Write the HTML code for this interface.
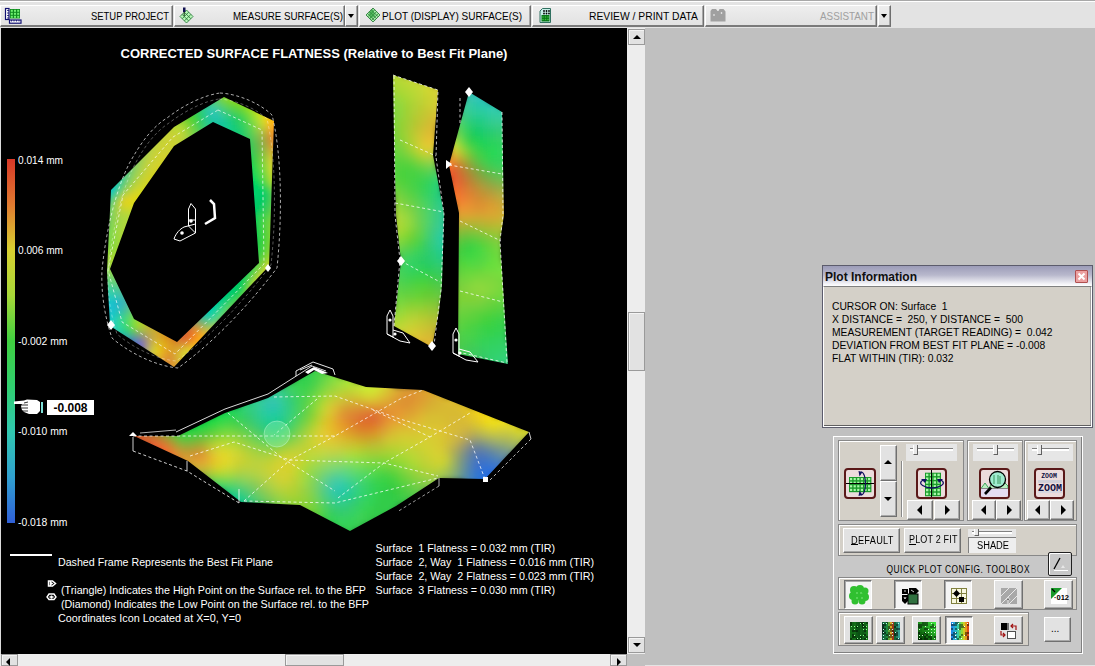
<!DOCTYPE html>
<html><head><meta charset="utf-8">
<style>
*{box-sizing:border-box;margin:0;padding:0}
html,body{width:1095px;height:666px;overflow:hidden}
body{position:relative;background:#c0c0c0;font-family:"Liberation Sans",sans-serif;font-size:11px;color:#000}
.abs{position:absolute}
#tb{left:0;top:0;width:1095px;height:28px;background:#e3e3e3;border-top:1px solid #a8a8a8;box-shadow:inset 0 1px 0 #fff}
.btn{position:absolute;top:4px;height:22px;background:linear-gradient(#eeeeee,#e2e2e2);border-top:1px solid #fff;border-left:1px solid #fff;border-right:1px solid #6e6e6e;border-bottom:2px solid #7a7a7a;box-shadow:inset -1px 0 0 #a8a8a8}
.btxt{position:absolute;top:9px;font-size:11px;line-height:11px;white-space:nowrap;text-align:justify}
#plot{left:1px;top:28px;width:626px;height:626px;background:#000;overflow:hidden}
#vs{left:627px;top:28px;width:18px;height:626px;background:#ededed}
#hs{left:0;top:654px;width:627px;height:12px;background:#ededed}
.sbtn{position:absolute;background:#e2e2e2;border:1px solid #9a9a9a;box-shadow:inset 1px 1px 0 #f4f4f4}
.grp{position:absolute;background:#d4d0c8;border:1px solid #888;box-shadow:inset 1px 1px 0 #fff}
.rb{position:absolute;background:#e2e2e2;border-top:1px solid #fff;border-left:1px solid #fff;border-right:1px solid #707070;border-bottom:1px solid #707070;box-shadow:inset -1px -1px 0 #a8a8a8}
.pb{position:absolute;background:#f4f4f4;border-top:1px solid #707070;border-left:1px solid #707070;border-right:1px solid #fff;border-bottom:1px solid #fff;box-shadow:inset 1px 1px 0 #a8a8a8}
.ico{position:absolute;background:#ecdcdc;border:2px solid #5a1818;border-radius:4px}
.sl{position:absolute;background:#e6e6e6}
.slt{position:absolute;height:3px;background:#fff;border-top:1px solid #808080}
.thm{position:absolute;width:5px;height:10px;background:#e8e8e8;border-left:1px solid #fff;border-right:1px solid #606060;border-bottom:1px solid #606060}
.tri{position:absolute;width:0;height:0}
.wt{position:absolute;color:#fff;white-space:nowrap;font-size:11px}
</style></head><body>

<div id="tb" class="abs">
  <div class="btn" style="left:0;width:173px"></div>
  <div class="btn" style="left:174px;width:171px"></div>
  <div class="btn" style="left:345px;width:13px"></div>
  <div class="tri" style="left:348px;top:13px;border-left:3.5px solid transparent;border-right:3.5px solid transparent;border-top:4px solid #000"></div>
  <div class="btn" style="left:359px;width:172px"></div>
  <div class="btn" style="left:532px;width:172px"></div>
  <div class="btn" style="left:705px;width:172px"></div>
  <div class="btn" style="left:878px;width:13px"></div>
  <div class="tri" style="left:881px;top:13px;border-left:3.5px solid transparent;border-right:3.5px solid transparent;border-top:4px solid #000"></div>
  <svg class="abs" style="left:0;top:0" width="900" height="28"><g font-family="Liberation Sans" font-size="11" lengthAdjust="spacingAndGlyphs">
   <text x="91" y="19" textLength="78" lengthAdjust="spacingAndGlyphs">SETUP PROJECT</text>
   <text x="233" y="19" textLength="110" lengthAdjust="spacingAndGlyphs">MEASURE SURFACE(S)</text>
   <text x="382" y="19" textLength="140" lengthAdjust="spacingAndGlyphs">PLOT (DISPLAY) SURFACE(S)</text>
   <text x="589" y="19" textLength="109" lengthAdjust="spacingAndGlyphs">REVIEW / PRINT DATA</text>
   <text x="820" y="19" textLength="54" lengthAdjust="spacingAndGlyphs" fill="#a0a0a0">ASSISTANT</text>
  </g></svg>
  <svg class="abs" style="left:4px;top:6px" width="20" height="18">
    <rect x="1.5" y="1.5" width="3.5" height="11" fill="#fff" stroke="#101070" stroke-width="1.2"/>
    <path d="M3,3.5h2M3,6h2M3,8.5h2M3,11h2" stroke="#101070" stroke-width="0.8"/>
    <rect x="6" y="2" width="10" height="9.5" fill="#108a20"/>
    <g fill="#70f070"><rect x="6.8" y="2.8" width="2" height="2"/><rect x="10" y="2.8" width="2" height="2"/><rect x="13.2" y="2.8" width="2" height="2"/><rect x="6.8" y="5.8" width="2" height="2"/><rect x="10" y="5.8" width="2" height="2"/><rect x="13.2" y="5.8" width="2" height="2"/><rect x="6.8" y="8.8" width="2" height="2"/><rect x="10" y="8.8" width="2" height="2"/><rect x="13.2" y="8.8" width="2" height="2"/></g>
    <rect x="5.5" y="13" width="11.5" height="3.2" fill="#fff" stroke="#101070" stroke-width="1.2"/>
    <path d="M7.5,13v1.5M10,13v1.5M12.5,13v1.5M15,13v1.5" stroke="#101070" stroke-width="0.8"/>
  </svg>
  <svg class="abs" style="left:178px;top:6px" width="18" height="18">
    <path d="M8.5,3 L15,9.5 L8.5,16 L2,9.5 Z" fill="#b8f8b8" stroke="#207030" stroke-width="0.8"/>
    <path d="M6.3,5.2 L12.8,11.7 M4.1,7.4 L10.6,13.9 M10.7,5.2 L4.2,11.7 M12.9,7.4 L6.4,13.9" stroke="#207030" stroke-width="0.8"/>
    <rect x="5" y="0.5" width="2.5" height="4.5" fill="#101050"/><path d="M6.2,5 L6.2,9" stroke="#103010" stroke-width="1"/>
  </svg>
  <svg class="abs" style="left:364px;top:6px" width="18" height="18">
    <path d="M9,1 L16,8 L9,15 L2,8 Z" fill="#a8f0a8" stroke="#207030" stroke-width="0.8"/>
    <path d="M7.2,2.8 L14.2,9.8 M5.4,4.6 L12.4,11.6 M3.6,6.4 L10.6,13.4 M10.8,2.8 L3.8,9.8 M12.6,4.6 L5.6,11.6 M14.4,6.4 L7.4,13.4" stroke="#207030" stroke-width="0.8"/>
    <path d="M5,5 L9,2 L11,9 L6,12 Z" fill="#30a040" opacity="0.7"/>
  </svg>
  <svg class="abs" style="left:539px;top:7px" width="14" height="16">
    <path d="M3.5,0.5 L11.5,0.5 L11.5,14.5 L1,14.5 L1,3 Z" fill="#c8f0e8" stroke="#307060" stroke-width="1"/>
    <g fill="#000"><circle cx="5" cy="3" r="0.9"/><circle cx="7.5" cy="3" r="0.9"/><circle cx="10" cy="3" r="0.9"/><circle cx="5" cy="5.5" r="0.9"/><circle cx="7.5" cy="5.5" r="0.9"/><circle cx="10" cy="5.5" r="0.9"/></g>
    <rect x="2.5" y="7" width="8" height="6.5" fill="#087818"/>
    <g fill="#40c040"><circle cx="4" cy="9" r="0.8"/><circle cx="6.5" cy="9" r="0.8"/><circle cx="9" cy="9" r="0.8"/><circle cx="4" cy="11.5" r="0.8"/><circle cx="6.5" cy="11.5" r="0.8"/><circle cx="9" cy="11.5" r="0.8"/></g>
  </svg>
  <svg class="abs" style="left:710px;top:7px" width="17" height="15">
    <path d="M0.5,3 L2,1 L6,1 L7.5,3 L8.5,3 L9.5,1 L13.5,1 L15.5,3.5 L15.5,13.5 L0.5,13.5 Z" fill="#a0a0a0"/>
    <circle cx="4" cy="7" r="0.8" fill="#fff"/><circle cx="11.5" cy="5" r="0.8" fill="#fff"/>
  </svg>
</div>

<div id="plot" class="abs">
<svg width="626" height="626" viewBox="1 28 626 626" style="position:absolute;left:0;top:0" xml:space="preserve">
<defs>
<filter id="sb" x="-5%" y="-5%" width="110%" height="110%"><feGaussianBlur stdDeviation="3"/></filter><filter id="sb2" x="-5%" y="-5%" width="110%" height="110%"><feGaussianBlur stdDeviation="2"/></filter>
<linearGradient id="cbar" x1="0" y1="0" x2="0" y2="1"><stop offset="0.000" stop-color="#d83828"/><stop offset="0.125" stop-color="#e07a30"/><stop offset="0.250" stop-color="#d8d030"/><stop offset="0.375" stop-color="#a8d838"/><stop offset="0.500" stop-color="#40d040"/><stop offset="0.625" stop-color="#30d070"/><stop offset="0.750" stop-color="#30c8b0"/><stop offset="0.875" stop-color="#30a0d0"/><stop offset="1.000" stop-color="#3060d8"/></linearGradient><clipPath id="cs0"><path clip-rule="evenodd" d="M224,97 L274,121 L269,266 L174,367 L110,326 L107,271 L111,190 L174,127 Z M213,122 L174,146 L134,203 L110,269 L134,319 L177,342 L259,263 L250,139 Z"/></clipPath><clipPath id="cs1"><path clip-rule="evenodd" d="M393,75 L438,90 L433,155 L444,214 L442,285 L439,311 L432,347 L394,326 L401,261 L396,215 L394,135 Z"/></clipPath><clipPath id="cs2"><path clip-rule="evenodd" d="M469,92 L502,112 L504,215 L500,241 L508,364 L458,354 L459,213 L449,165 Z"/></clipPath><clipPath id="cs3"><path clip-rule="evenodd" d="M134,436 L178,436 L225,413 L268,398 L315,371 L366,387 L423,390 L529,432 L485,479 L439,478 L396,506 L350,531 L300,505 L241,502 L188,461 Z"/></clipPath></defs>
<text x="314" y="58" fill="#fff" font-family="Liberation Sans" font-weight="bold" font-size="13" text-anchor="middle">CORRECTED SURFACE FLATNESS (Relative to Best Fit Plane)</text>
<rect x="7" y="159" width="8" height="364" fill="url(#cbar)"/>
<g clip-path="url(#cs0)"><g filter="url(#sb2)"><path fill="#00ae90" d="M187 289h4v4h-4zM187 293h4v4h-4z"/><path fill="#00ae96" d="M191 297h4v4h-4z"/><path fill="#00b47e" d="M179 277h4v4h-4z"/><path fill="#00b484" d="M183 277h4v4h-4zM183 281h4v4h-4zM183 285h4v4h-4z"/><path fill="#00b48a" d="M187 281h4v4h-4z"/><path fill="#00b490" d="M187 285h4v4h-4z"/><path fill="#00b496" d="M191 285h4v4h-4zM191 289h4v4h-4zM191 293h4v4h-4z"/><path fill="#00b4a2" d="M195 293h4v4h-4zM195 297h4v4h-4zM195 301h4v4h-4z"/><path fill="#00ba72" d="M179 265h4v4h-4z"/><path fill="#00ba78" d="M183 265h4v4h-4zM179 269h4v4h-4zM179 273h4v4h-4z"/><path fill="#00ba7e" d="M187 265h4v4h-4zM183 269h4v4h-4zM183 273h4v4h-4z"/><path fill="#00ba84" d="M187 269h8v4h-8zM187 273h4v4h-4z"/><path fill="#00ba8a" d="M191 273h4v4h-4zM187 277h4v4h-4z"/><path fill="#00ba90" d="M195 273h4v4h-4zM191 277h8v4h-8zM191 281h4v4h-4z"/><path fill="#00ba96" d="M199 277h4v4h-4zM195 281h4v4h-4z"/><path fill="#00ba9c" d="M199 281h4v4h-4zM195 285h8v4h-8zM195 289h4v4h-4z"/><path fill="#00baa2" d="M199 289h4v4h-4z"/><path fill="#00baa8" d="M199 293h4v4h-4zM199 297h4v4h-4zM199 301h4v4h-4zM199 305h4v4h-4z"/><path fill="#00c06c" d="M183 253h4v4h-4zM179 257h4v4h-4z"/><path fill="#00c072" d="M187 253h8v4h-8zM183 257h4v4h-4zM179 261h8v4h-8z"/><path fill="#00c078" d="M195 253h8v4h-8zM187 257h8v4h-8zM187 261h4v4h-4z"/><path fill="#00c07e" d="M203 253h4v4h-4zM195 257h8v4h-8zM191 261h4v4h-4z"/><path fill="#00c084" d="M203 257h12v4h-12zM195 261h24v4h-24zM191 265h8v4h-8zM215 265h4v4h-4zM219 269h4v4h-4z"/><path fill="#00c08a" d="M199 265h16v4h-16zM195 269h8v4h-8zM211 269h8v4h-8zM215 273h8v4h-8z"/><path fill="#00c090" d="M203 269h8v4h-8zM199 273h16v4h-16zM215 277h4v4h-4zM215 281h4v4h-4z"/><path fill="#00c096" d="M203 277h12v4h-12zM211 281h4v4h-4z"/><path fill="#00c09c" d="M203 281h8v4h-8zM207 285h8v4h-8z"/><path fill="#00c0a2" d="M203 285h4v4h-4zM203 289h8v4h-8zM207 293h4v4h-4z"/><path fill="#00c0a8" d="M203 293h4v4h-4zM203 297h4v4h-4z"/><path fill="#00c0ae" d="M203 301h4v4h-4zM203 305h4v4h-4z"/><path fill="#00c660" d="M187 237h4v4h-4zM183 241h4v4h-4z"/><path fill="#00c666" d="M191 237h8v4h-8zM187 241h8v4h-8zM183 245h8v4h-8zM183 249h4v4h-4zM235 281h4v4h-4z"/><path fill="#00c66c" d="M199 237h12v4h-12zM195 241h8v4h-8zM191 245h4v4h-4zM231 245h4v4h-4zM187 249h4v4h-4zM231 249h8v4h-8zM235 253h4v4h-4zM235 257h4v4h-4zM235 261h4v4h-4zM235 265h4v4h-4zM235 269h4v4h-4zM235 273h4v4h-4zM235 277h4v4h-4zM231 285h4v4h-4z"/><path fill="#00c672" d="M211 237h16v4h-16zM203 241h28v4h-28zM195 245h12v4h-12zM223 245h8v4h-8zM191 249h8v4h-8zM227 249h4v4h-4zM227 253h8v4h-8zM231 257h4v4h-4zM231 261h4v4h-4zM231 265h4v4h-4zM231 269h4v4h-4zM231 273h4v4h-4zM231 277h4v4h-4zM231 281h4v4h-4zM227 289h4v4h-4z"/><path fill="#00c678" d="M207 245h16v4h-16zM199 249h28v4h-28zM223 253h4v4h-4zM223 257h8v4h-8zM227 261h4v4h-4zM227 265h4v4h-4zM227 269h4v4h-4zM227 273h4v4h-4zM227 277h4v4h-4zM227 281h4v4h-4zM227 285h4v4h-4z"/><path fill="#00c67e" d="M207 253h16v4h-16zM215 257h8v4h-8zM219 261h8v4h-8zM223 265h4v4h-4zM223 269h4v4h-4zM223 289h4v4h-4z"/><path fill="#00c684" d="M219 265h4v4h-4zM223 273h4v4h-4zM223 277h4v4h-4zM223 281h4v4h-4zM223 285h4v4h-4z"/><path fill="#00c68a" d="M219 277h4v4h-4zM219 281h4v4h-4zM219 285h4v4h-4zM219 289h4v4h-4zM219 293h4v4h-4z"/><path fill="#00c696" d="M215 285h4v4h-4zM215 289h4v4h-4zM215 293h4v4h-4z"/><path fill="#00c69c" d="M211 289h4v4h-4z"/><path fill="#00c6a2" d="M211 293h4v4h-4zM211 297h4v4h-4z"/><path fill="#00c6a8" d="M207 297h4v4h-4z"/><path fill="#00c6ae" d="M207 301h4v4h-4zM207 305h4v4h-4z"/><path fill="#00c6c6" d="M111 181h4v4h-4zM107 189h4v4h-4z"/><path fill="#00c6d2" d="M107 185h4v4h-4z"/><path fill="#00cc54" d="M199 213h4v4h-4zM195 217h4v4h-4zM251 233h4v4h-4zM251 237h4v4h-4zM251 241h4v4h-4zM251 245h4v4h-4z"/><path fill="#00cc5a" d="M203 213h4v4h-4zM199 217h4v4h-4zM251 217h4v4h-4zM195 221h8v4h-8zM191 225h8v4h-8zM247 225h4v4h-4zM191 229h4v4h-4zM247 229h4v4h-4zM187 233h4v4h-4zM247 233h4v4h-4zM247 237h4v4h-4zM247 241h4v4h-4zM247 245h4v4h-4zM247 249h4v4h-4zM247 253h4v4h-4zM247 257h4v4h-4zM239 281h4v4h-4z"/><path fill="#00cc60" d="M207 213h8v4h-8zM251 213h4v4h-4zM203 217h8v4h-8zM247 217h4v4h-4zM203 221h4v4h-4zM243 221h8v4h-8zM199 225h8v4h-8zM243 225h4v4h-4zM195 229h8v4h-8zM243 229h4v4h-4zM191 233h8v4h-8zM243 233h4v4h-4zM243 237h4v4h-4zM243 241h4v4h-4zM243 245h4v4h-4zM243 249h4v4h-4zM243 253h4v4h-4zM243 257h4v4h-4zM243 261h4v4h-4zM243 265h4v4h-4zM239 273h4v4h-4zM239 277h4v4h-4zM235 289h4v4h-4z"/><path fill="#00cc66" d="M259 197h4v4h-4zM255 201h8v4h-8zM251 205h8v4h-8zM215 209h8v4h-8zM247 209h8v4h-8zM215 213h8v4h-8zM239 213h12v4h-12zM211 217h12v4h-12zM235 217h12v4h-12zM207 221h12v4h-12zM235 221h8v4h-8zM207 225h8v4h-8zM235 225h8v4h-8zM203 229h8v4h-8zM235 229h8v4h-8zM199 233h4v4h-4zM235 233h8v4h-8zM235 237h8v4h-8zM235 241h8v4h-8zM239 245h4v4h-4zM239 249h4v4h-4zM239 253h4v4h-4zM239 257h4v4h-4zM239 261h4v4h-4zM239 265h4v4h-4zM239 269h4v4h-4zM235 285h4v4h-4z"/><path fill="#00cc6c" d="M235 149h4v4h-4zM259 193h4v4h-4zM255 197h4v4h-4zM251 201h4v4h-4zM247 205h4v4h-4zM223 209h24v4h-24zM223 213h16v4h-16zM223 217h12v4h-12zM219 221h16v4h-16zM215 225h20v4h-20zM211 229h24v4h-24zM203 233h32v4h-32zM227 237h8v4h-8zM231 241h4v4h-4zM235 245h4v4h-4zM231 289h4v4h-4z"/><path fill="#00cc72" d="M227 293h4v4h-4z"/><path fill="#00cc78" d="M223 145h12v4h-12z"/><path fill="#00cc7e" d="M227 141h4v4h-4zM223 293h4v4h-4z"/><path fill="#00cc8a" d="M219 297h4v4h-4z"/><path fill="#00cc96" d="M215 297h4v4h-4zM215 301h4v4h-4z"/><path fill="#00cca2" d="M211 301h4v4h-4z"/><path fill="#00cca8" d="M211 305h4v4h-4z"/><path fill="#00d254" d="M203 197h4v4h-4zM203 201h4v4h-4zM199 209h4v4h-4z"/><path fill="#00d25a" d="M211 177h4v4h-4zM211 181h4v4h-4zM211 185h4v4h-4zM207 189h8v4h-8zM207 193h4v4h-4zM207 197h4v4h-4zM207 201h4v4h-4zM203 205h8v4h-8zM203 209h4v4h-4z"/><path fill="#00d260" d="M239 161h8v4h-8zM239 165h8v4h-8zM215 169h4v4h-4zM215 173h4v4h-4zM215 177h4v4h-4zM215 181h4v4h-4zM215 185h4v4h-4zM215 189h4v4h-4zM211 193h8v4h-8zM211 197h8v4h-8zM211 201h8v4h-8zM211 205h4v4h-4zM207 209h8v4h-8z"/><path fill="#00d266" d="M235 157h8v4h-8zM235 161h4v4h-4zM219 165h4v4h-4zM231 165h8v4h-8zM219 169h24v4h-24zM219 173h20v4h-20zM219 177h12v4h-12zM235 177h8v4h-8zM219 181h8v4h-8zM243 181h8v4h-8zM219 185h8v4h-8zM251 185h8v4h-8zM219 189h8v4h-8zM259 189h4v4h-4zM219 193h8v4h-8zM219 197h8v4h-8zM219 201h8v4h-8zM215 205h12v4h-12z"/><path fill="#00d26c" d="M231 153h8v4h-8zM219 157h16v4h-16zM219 161h16v4h-16zM223 165h8v4h-8zM231 177h4v4h-4zM227 181h16v4h-16zM227 185h24v4h-24zM227 189h32v4h-32zM227 193h16v4h-16zM247 193h12v4h-12zM227 197h12v4h-12zM247 197h8v4h-8zM227 201h24v4h-24zM227 205h20v4h-20z"/><path fill="#00d272" d="M227 149h8v4h-8zM223 153h8v4h-8zM243 193h4v4h-4zM239 197h8v4h-8z"/><path fill="#00d278" d="M223 149h4v4h-4z"/><path fill="#00d860" d="M243 169h4v4h-4zM243 173h8v4h-8zM247 177h4v4h-4zM251 181h4v4h-4z"/><path fill="#00d866" d="M239 173h4v4h-4zM243 177h4v4h-4z"/><path fill="#06ae84" d="M183 289h4v4h-4z"/><path fill="#06b47e" d="M179 281h4v4h-4z"/><path fill="#06c066" d="M179 253h4v4h-4z"/><path fill="#06c0ae" d="M203 309h4v4h-4z"/><path fill="#06c65a" d="M183 237h4v4h-4z"/><path fill="#06c660" d="M179 249h4v4h-4z"/><path fill="#06c6c0" d="M111 185h4v4h-4z"/><path fill="#06cc54" d="M191 221h4v4h-4zM251 225h4v4h-4zM187 229h4v4h-4zM251 229h4v4h-4zM251 249h4v4h-4z"/><path fill="#06cc5a" d="M251 221h4v4h-4zM243 269h4v4h-4z"/><path fill="#06cc60" d="M255 209h4v4h-4z"/><path fill="#06cc72" d="M235 145h4v4h-4z"/><path fill="#06cc78" d="M231 141h4v4h-4zM223 297h4v4h-4z"/><path fill="#06cc7e" d="M231 137h4v4h-4zM223 141h4v4h-4z"/><path fill="#06cc84" d="M227 133h4v4h-4zM223 137h8v4h-8z"/><path fill="#06ccae" d="M207 309h4v4h-4z"/><path fill="#06d254" d="M203 193h4v4h-4zM199 205h4v4h-4zM195 213h4v4h-4z"/><path fill="#06d25a" d="M207 185h4v4h-4z"/><path fill="#06d260" d="M243 157h4v4h-4zM211 173h4v4h-4z"/><path fill="#06d266" d="M239 153h4v4h-4zM215 161h4v4h-4zM215 165h4v4h-4z"/><path fill="#06d272" d="M219 149h4v4h-4zM219 153h4v4h-4z"/><path fill="#06d85a" d="M247 169h4v4h-4z"/><path fill="#06d860" d="M251 177h4v4h-4z"/><path fill="#0cba6c" d="M175 265h4v4h-4z"/><path fill="#0cba72" d="M175 269h4v4h-4z"/><path fill="#0cc660" d="M179 245h4v4h-4z"/><path fill="#0ccc4e" d="M191 217h4v4h-4zM251 253h4v4h-4z"/><path fill="#0ccc54" d="M187 225h4v4h-4zM183 233h4v4h-4z"/><path fill="#0ccc5a" d="M247 261h4v4h-4zM239 285h4v4h-4z"/><path fill="#0ccc60" d="M259 205h4v4h-4z"/><path fill="#0ccc66" d="M239 149h4v4h-4zM231 293h4v4h-4z"/><path fill="#0ccc6c" d="M239 145h4v4h-4z"/><path fill="#0ccc72" d="M235 141h4v4h-4z"/><path fill="#0ccc78" d="M235 137h4v4h-4zM219 145h4v4h-4z"/><path fill="#0ccc7e" d="M231 133h4v4h-4zM219 141h4v4h-4z"/><path fill="#0ccc84" d="M219 137h4v4h-4zM219 301h4v4h-4z"/><path fill="#0ccc8a" d="M227 129h4v4h-4zM219 133h8v4h-8z"/><path fill="#0ccc90" d="M223 129h4v4h-4z"/><path fill="#0cd24e" d="M199 201h4v4h-4zM195 209h4v4h-4z"/><path fill="#0cd25a" d="M207 181h4v4h-4z"/><path fill="#0cd260" d="M211 169h4v4h-4z"/><path fill="#0cd26c" d="M215 157h4v4h-4z"/><path fill="#0cd296" d="M215 305h4v4h-4z"/><path fill="#0cd2a2" d="M211 309h4v4h-4z"/><path fill="#0cd85a" d="M247 165h4v4h-4z"/><path fill="#0cd860" d="M255 181h4v4h-4z"/><path fill="#12a884" d="M183 293h4v4h-4z"/><path fill="#12a890" d="M187 297h4v4h-4z"/><path fill="#12ae7e" d="M179 285h4v4h-4z"/><path fill="#12ae96" d="M191 301h4v4h-4z"/><path fill="#12ae9c" d="M195 305h4v4h-4z"/><path fill="#12b472" d="M175 277h4v4h-4z"/><path fill="#12ba72" d="M175 273h4v4h-4z"/><path fill="#12c066" d="M175 257h4v4h-4z"/><path fill="#12c06c" d="M175 261h4v4h-4z"/><path fill="#12c65a" d="M179 241h4v4h-4z"/><path fill="#12c69c" d="M219 125h4v4h-4z"/><path fill="#12c6b4" d="M115 177h4v4h-4z"/><path fill="#12c6d2" d="M107 309h4v4h-4z"/><path fill="#12cc4e" d="M187 221h4v4h-4z"/><path fill="#12cc5a" d="M243 273h4v4h-4z"/><path fill="#12cc60" d="M243 153h4v4h-4zM263 197h4v4h-4z"/><path fill="#12cc66" d="M263 193h4v4h-4z"/><path fill="#12cc6c" d="M239 141h4v4h-4z"/><path fill="#12cc78" d="M235 133h4v4h-4zM215 145h4v4h-4z"/><path fill="#12cc7e" d="M231 125h4v4h-4zM231 129h4v4h-4z"/><path fill="#12cc8a" d="M227 125h4v4h-4z"/><path fill="#12cc96" d="M223 125h4v4h-4zM219 129h4v4h-4z"/><path fill="#12ccb4" d="M107 193h4v4h-4z"/><path fill="#12ccd2" d="M103 301h4v4h-4z"/><path fill="#12ccd8" d="M103 305h4v4h-4z"/><path fill="#12d24e" d="M199 197h4v4h-4zM195 205h4v4h-4zM191 213h4v4h-4z"/><path fill="#12d254" d="M247 161h4v4h-4zM203 189h4v4h-4z"/><path fill="#12d25a" d="M207 177h4v4h-4zM255 213h4v4h-4z"/><path fill="#12d260" d="M211 165h4v4h-4zM259 185h4v4h-4z"/><path fill="#12d26c" d="M215 153h4v4h-4z"/><path fill="#12d272" d="M215 149h4v4h-4z"/><path fill="#12d85a" d="M251 173h4v4h-4z"/><path fill="#18ae7e" d="M179 289h4v4h-4z"/><path fill="#18b478" d="M175 281h4v4h-4z"/><path fill="#18baa2" d="M199 309h4v4h-4z"/><path fill="#18c060" d="M175 253h4v4h-4z"/><path fill="#18c660" d="M175 249h4v4h-4z"/><path fill="#18c696" d="M223 121h4v4h-4z"/><path fill="#18c69c" d="M219 121h4v4h-4zM215 125h4v4h-4z"/><path fill="#18c6b4" d="M111 189h4v4h-4z"/><path fill="#18c6cc" d="M107 301h4v4h-4z"/><path fill="#18c6d2" d="M107 305h4v4h-4z"/><path fill="#18cc48" d="M255 241h4v4h-4zM255 245h4v4h-4z"/><path fill="#18cc4e" d="M255 233h4v4h-4zM255 237h4v4h-4z"/><path fill="#18cc54" d="M183 229h4v4h-4zM179 237h4v4h-4z"/><path fill="#18cc60" d="M243 149h4v4h-4z"/><path fill="#18cc6c" d="M239 137h4v4h-4zM227 297h4v4h-4z"/><path fill="#18cc78" d="M235 129h4v4h-4z"/><path fill="#18cc7e" d="M215 141h4v4h-4z"/><path fill="#18cc84" d="M215 137h4v4h-4z"/><path fill="#18cc8a" d="M227 121h4v4h-4zM215 133h4v4h-4z"/><path fill="#18cc90" d="M215 129h4v4h-4z"/><path fill="#18cca8" d="M207 313h4v4h-4z"/><path fill="#18cccc" d="M107 317h4v4h-4z"/><path fill="#18ccd2" d="M107 313h4v4h-4z"/><path fill="#18d24e" d="M199 193h4v4h-4z"/><path fill="#18d254" d="M247 157h4v4h-4zM203 185h4v4h-4zM255 217h4v4h-4z"/><path fill="#18d25a" d="M207 173h4v4h-4z"/><path fill="#18d260" d="M211 161h4v4h-4zM263 189h4v4h-4z"/><path fill="#1eba66" d="M171 265h4v4h-4z"/><path fill="#1eba6c" d="M171 269h4v4h-4z"/><path fill="#1ec0a8" d="M203 313h4v4h-4z"/><path fill="#1ec0cc" d="M111 301h4v4h-4zM111 305h4v4h-4z"/><path fill="#1ec65a" d="M175 245h4v4h-4z"/><path fill="#1ec69c" d="M211 121h4v4h-4z"/><path fill="#1ec6a2" d="M215 121h4v4h-4z"/><path fill="#1ec6c6" d="M111 313h4v4h-4z"/><path fill="#1ec6cc" d="M111 309h4v4h-4z"/><path fill="#1ecc48" d="M255 249h4v4h-4z"/><path fill="#1ecc4e" d="M187 217h4v4h-4zM183 225h4v4h-4zM251 257h4v4h-4z"/><path fill="#1ecc54" d="M179 233h4v4h-4zM247 265h4v4h-4zM239 289h4v4h-4z"/><path fill="#1ecc5a" d="M259 209h4v4h-4zM235 293h4v4h-4z"/><path fill="#1ecc60" d="M263 201h4v4h-4z"/><path fill="#1ecc66" d="M243 145h4v4h-4z"/><path fill="#1ecc6c" d="M239 133h4v4h-4z"/><path fill="#1ecc72" d="M235 125h4v4h-4z"/><path fill="#1ecc78" d="M231 121h4v4h-4z"/><path fill="#1ecc84" d="M211 133h4v4h-4z"/><path fill="#1ecc8a" d="M211 129h4v4h-4z"/><path fill="#1ecc96" d="M211 125h4v4h-4z"/><path fill="#1eccae" d="M115 181h4v4h-4z"/><path fill="#1eccc0" d="M107 297h4v4h-4zM111 317h4v4h-4z"/><path fill="#1eccc6" d="M103 297h4v4h-4z"/><path fill="#1ecccc" d="M107 321h4v4h-4zM107 325h4v4h-4z"/><path fill="#1ed248" d="M195 201h4v4h-4zM191 209h4v4h-4z"/><path fill="#1ed24e" d="M199 189h4v4h-4zM255 225h4v4h-4zM255 229h4v4h-4z"/><path fill="#1ed254" d="M203 181h4v4h-4zM255 221h4v4h-4z"/><path fill="#1ed25a" d="M207 169h4v4h-4z"/><path fill="#1ed266" d="M211 157h4v4h-4z"/><path fill="#1ed26c" d="M211 149h4v4h-4zM211 153h4v4h-4z"/><path fill="#1ed854" d="M251 169h4v4h-4zM255 177h4v4h-4z"/><path fill="#24a87e" d="M179 293h4v4h-4z"/><path fill="#24a884" d="M183 297h4v4h-4z"/><path fill="#24a88a" d="M187 301h4v4h-4z"/><path fill="#24a890" d="M191 305h4v4h-4z"/><path fill="#24ae78" d="M175 285h4v4h-4z"/><path fill="#24b46c" d="M171 277h4v4h-4z"/><path fill="#24ba6c" d="M171 273h4v4h-4z"/><path fill="#24bac6" d="M115 301h4v4h-4zM115 305h4v4h-4z"/><path fill="#24c060" d="M171 257h4v4h-4z"/><path fill="#24c066" d="M171 261h4v4h-4z"/><path fill="#24c0c0" d="M115 309h4v4h-4z"/><path fill="#24c654" d="M175 241h4v4h-4z"/><path fill="#24c65a" d="M171 253h4v4h-4z"/><path fill="#24c69c" d="M207 117h4v4h-4z"/><path fill="#24c6a2" d="M219 117h4v4h-4z"/><path fill="#24c6a8" d="M211 117h8v4h-8z"/><path fill="#24c6b4" d="M115 313h4v4h-4z"/><path fill="#24c6c0" d="M111 297h4v4h-4z"/><path fill="#24cc48" d="M183 221h4v4h-4z"/><path fill="#24cc54" d="M243 277h4v4h-4z"/><path fill="#24cc5a" d="M247 153h4v4h-4z"/><path fill="#24cc66" d="M243 141h4v4h-4z"/><path fill="#24cc6c" d="M235 121h4v4h-4zM239 129h4v4h-4z"/><path fill="#24cc72" d="M231 117h4v4h-4z"/><path fill="#24cc78" d="M211 141h4v4h-4zM223 301h4v4h-4z"/><path fill="#24cc7e" d="M211 137h4v4h-4z"/><path fill="#24cc84" d="M227 117h4v4h-4z"/><path fill="#24cc90" d="M223 117h4v4h-4zM207 121h4v4h-4z"/><path fill="#24ccba" d="M111 325h4v4h-4z"/><path fill="#24d248" d="M195 197h4v4h-4zM191 205h4v4h-4zM187 213h4v4h-4z"/><path fill="#24d254" d="M203 177h4v4h-4z"/><path fill="#24d25a" d="M207 165h4v4h-4z"/><path fill="#24d272" d="M211 145h4v4h-4z"/><path fill="#24d284" d="M219 305h4v4h-4z"/><path fill="#24d296" d="M215 309h4v4h-4z"/><path fill="#24d29c" d="M211 313h4v4h-4z"/><path fill="#24d2ba" d="M103 293h4v4h-4zM111 321h4v4h-4z"/><path fill="#24d854" d="M251 165h4v4h-4z"/><path fill="#2aae72" d="M175 289h4v4h-4z"/><path fill="#2aae96" d="M195 309h4v4h-4z"/><path fill="#2ab46c" d="M171 281h4v4h-4z"/><path fill="#2abaa2" d="M123 333h4v4h-4z"/><path fill="#2ac0ae" d="M119 333h4v4h-4z"/><path fill="#2ac0ba" d="M115 297h4v4h-4z"/><path fill="#2ac65a" d="M171 249h4v4h-4z"/><path fill="#2ac6a2" d="M207 113h4v4h-4z"/><path fill="#2ac6a8" d="M207 109h4v4h-4z"/><path fill="#2ac6ae" d="M211 113h8v4h-8z"/><path fill="#2acc48" d="M255 253h4v4h-4z"/><path fill="#2acc4e" d="M179 229h4v4h-4zM251 261h4v4h-4z"/><path fill="#2acc54" d="M175 237h4v4h-4zM247 269h4v4h-4z"/><path fill="#2acc5a" d="M247 149h4v4h-4zM263 205h4v4h-4z"/><path fill="#2acc66" d="M235 117h4v4h-4zM243 137h4v4h-4z"/><path fill="#2acc72" d="M199 113h4v4h-4z"/><path fill="#2acc7e" d="M207 129h4v4h-4z"/><path fill="#2acc84" d="M203 117h4v4h-4z"/><path fill="#2acc8a" d="M203 113h4v4h-4zM207 125h4v4h-4zM123 329h4v4h-4z"/><path fill="#2acc90" d="M203 109h4v4h-4z"/><path fill="#2acc9c" d="M119 329h4v4h-4z"/><path fill="#2acca2" d="M115 185h4v4h-4z"/><path fill="#2accb4" d="M107 293h4v4h-4z"/><path fill="#2accc0" d="M111 329h4v4h-4z"/><path fill="#2ad248" d="M195 193h4v4h-4z"/><path fill="#2ad24e" d="M251 161h4v4h-4zM199 185h4v4h-4z"/><path fill="#2ad254" d="M203 173h4v4h-4zM259 213h4v4h-4z"/><path fill="#2ad260" d="M207 157h4v4h-4zM207 161h4v4h-4zM231 297h4v4h-4z"/><path fill="#2ad266" d="M239 125h4v4h-4z"/><path fill="#2ad2a8" d="M115 321h4v4h-4zM115 325h4v4h-4z"/><path fill="#2ad2ae" d="M115 317h4v4h-4z"/><path fill="#2ad854" d="M259 181h4v4h-4z"/><path fill="#30a8ba" d="M123 337h4v4h-4z"/><path fill="#30ae6c" d="M171 285h4v4h-4z"/><path fill="#30b49c" d="M199 313h4v4h-4z"/><path fill="#30b4c0" d="M119 301h4v4h-4z"/><path fill="#30ba60" d="M167 265h4v4h-4z"/><path fill="#30ba66" d="M167 269h4v4h-4zM167 273h4v4h-4z"/><path fill="#30baba" d="M119 305h4v4h-4z"/><path fill="#30c060" d="M167 261h4v4h-4z"/><path fill="#30c0ae" d="M119 309h4v4h-4z"/><path fill="#30c0ba" d="M115 333h4v4h-4z"/><path fill="#30c654" d="M171 245h4v4h-4z"/><path fill="#30c65a" d="M247 145h4v4h-4z"/><path fill="#30c6ae" d="M211 109h4v4h-4z"/><path fill="#30cc48" d="M179 225h4v4h-4z"/><path fill="#30cc4e" d="M175 233h4v4h-4z"/><path fill="#30cc54" d="M243 281h4v4h-4z"/><path fill="#30cc66" d="M199 117h4v4h-4zM243 133h4v4h-4z"/><path fill="#30cc72" d="M207 137h4v4h-4zM207 141h4v4h-4z"/><path fill="#30cc78" d="M199 105h4v4h-4zM199 109h4v4h-4zM207 133h4v4h-4z"/><path fill="#30cc7e" d="M203 121h4v4h-4z"/><path fill="#30cc8a" d="M223 113h4v4h-4z"/><path fill="#30cc90" d="M203 105h4v4h-4z"/><path fill="#30cc9c" d="M219 113h4v4h-4z"/><path fill="#30cca2" d="M119 173h4v4h-4z"/><path fill="#30ccae" d="M111 293h4v4h-4zM115 329h4v4h-4z"/><path fill="#30d242" d="M187 209h4v4h-4zM259 237h4v4h-4zM259 241h4v4h-4z"/><path fill="#30d248" d="M195 189h4v4h-4zM191 201h4v4h-4zM183 217h4v4h-4z"/><path fill="#30d24e" d="M251 157h4v4h-4zM199 181h4v4h-4z"/><path fill="#30d254" d="M203 169h4v4h-4zM263 185h4v4h-4z"/><path fill="#30d260" d="M239 121h4v4h-4z"/><path fill="#30d266" d="M207 149h4v4h-4zM207 153h4v4h-4z"/><path fill="#30d26c" d="M207 145h4v4h-4z"/><path fill="#30d854" d="M255 173h4v4h-4z"/><path fill="#30d890" d="M119 321h4v4h-4z"/><path fill="#30d896" d="M119 325h4v4h-4z"/><path fill="#36a278" d="M179 297h4v4h-4z"/><path fill="#36a27e" d="M183 301h4v4h-4z"/><path fill="#36a284" d="M187 305h4v4h-4z"/><path fill="#36a872" d="M175 293h4v4h-4z"/><path fill="#36b466" d="M167 277h4v4h-4z"/><path fill="#36bab4" d="M119 297h4v4h-4z"/><path fill="#36c05a" d="M167 257h4v4h-4z"/><path fill="#36c64e" d="M171 241h4v4h-4z"/><path fill="#36c65a" d="M167 253h4v4h-4z"/><path fill="#36c660" d="M247 141h4v4h-4z"/><path fill="#36c6ae" d="M115 293h4v4h-4z"/><path fill="#36cc48" d="M179 221h4v4h-4zM175 229h4v4h-4z"/><path fill="#36cc54" d="M195 113h4v4h-4zM251 153h4v4h-4zM263 209h4v4h-4z"/><path fill="#36cc5a" d="M195 109h4v4h-4zM267 193h4v4h-4zM267 197h4v4h-4z"/><path fill="#36cc66" d="M231 113h4v4h-4zM199 121h4v4h-4z"/><path fill="#36cc78" d="M227 113h4v4h-4zM203 125h4v4h-4z"/><path fill="#36cc9c" d="M207 105h4v4h-4zM119 177h4v4h-4zM111 193h4v4h-4zM107 197h4v4h-4z"/><path fill="#36cca2" d="M215 109h4v4h-4zM119 313h4v4h-4z"/><path fill="#36d242" d="M191 197h4v4h-4zM187 205h4v4h-4zM183 213h4v4h-4zM259 245h4v4h-4z"/><path fill="#36d248" d="M259 221h4v4h-4zM259 225h4v4h-4zM259 229h4v4h-4zM259 233h4v4h-4z"/><path fill="#36d24e" d="M199 177h4v4h-4zM259 217h4v4h-4z"/><path fill="#36d254" d="M203 165h4v4h-4z"/><path fill="#36d25a" d="M239 117h4v4h-4z"/><path fill="#36d260" d="M243 129h4v4h-4z"/><path fill="#36d266" d="M227 301h4v4h-4z"/><path fill="#36d296" d="M119 317h4v4h-4z"/><path fill="#36d2a2" d="M107 289h4v4h-4z"/><path fill="#36d2a8" d="M103 289h4v4h-4z"/><path fill="#36d84e" d="M255 169h4v4h-4z"/><path fill="#36d87e" d="M123 325h4v4h-4z"/><path fill="#3c9cb4" d="M127 337h4v4h-4z"/><path fill="#3ca28a" d="M191 309h4v4h-4z"/><path fill="#3cae6c" d="M171 289h4v4h-4z"/><path fill="#3cb466" d="M167 281h4v4h-4z"/><path fill="#3cb490" d="M127 333h4v4h-4z"/><path fill="#3cc654" d="M167 249h4v4h-4z"/><path fill="#3ccc4e" d="M171 237h4v4h-4z"/><path fill="#3ccc54" d="M267 201h4v4h-4z"/><path fill="#3ccc60" d="M247 137h4v4h-4z"/><path fill="#3ccc6c" d="M203 133h4v4h-4z"/><path fill="#3ccc72" d="M203 129h4v4h-4z"/><path fill="#3ccc78" d="M127 329h4v4h-4z"/><path fill="#3ccc90" d="M219 109h4v4h-4z"/><path fill="#3ccc9c" d="M211 105h4v4h-4zM207 317h4v4h-4z"/><path fill="#3ccca2" d="M111 289h4v4h-4z"/><path fill="#3cd242" d="M191 193h4v4h-4zM259 249h4v4h-4z"/><path fill="#3cd248" d="M195 117h4v4h-4zM195 185h4v4h-4zM255 257h4v4h-4z"/><path fill="#3cd24e" d="M199 173h4v4h-4zM247 273h4v4h-4zM243 285h4v4h-4z"/><path fill="#3cd254" d="M267 189h4v4h-4z"/><path fill="#3cd25a" d="M235 113h4v4h-4zM203 157h4v4h-4zM203 161h4v4h-4z"/><path fill="#3cd260" d="M243 125h4v4h-4z"/><path fill="#3cd272" d="M223 305h4v4h-4z"/><path fill="#3cd27e" d="M219 309h4v4h-4z"/><path fill="#3cd28a" d="M215 313h4v4h-4z"/><path fill="#3cd878" d="M123 321h4v4h-4z"/><path fill="#42a26c" d="M175 297h4v4h-4z"/><path fill="#42ae66" d="M167 285h4v4h-4z"/><path fill="#42b460" d="M163 277h4v4h-4z"/><path fill="#42b4a8" d="M123 297h4v4h-4z"/><path fill="#42b4ae" d="M123 301h4v4h-4z"/><path fill="#42ba60" d="M163 269h4v4h-4zM163 273h4v4h-4z"/><path fill="#42baa8" d="M123 305h4v4h-4z"/><path fill="#42c05a" d="M163 261h4v4h-4zM163 265h4v4h-4z"/><path fill="#42c096" d="M203 317h4v4h-4z"/><path fill="#42c09c" d="M123 309h4v4h-4z"/><path fill="#42c0a8" d="M119 293h4v4h-4z"/><path fill="#42c64e" d="M167 245h4v4h-4z"/><path fill="#42c654" d="M251 149h4v4h-4z"/><path fill="#42c69c" d="M115 289h4v4h-4z"/><path fill="#42cc42" d="M175 225h4v4h-4z"/><path fill="#42cc48" d="M171 233h4v4h-4z"/><path fill="#42cc60" d="M199 125h4v4h-4z"/><path fill="#42cc6c" d="M203 137h4v4h-4z"/><path fill="#42cc78" d="M223 109h4v4h-4z"/><path fill="#42cc8a" d="M207 101h4v4h-4zM123 313h4v4h-4z"/><path fill="#42cc90" d="M119 181h4v4h-4z"/><path fill="#42cc96" d="M115 189h4v4h-4z"/><path fill="#42d23c" d="M191 113h4v4h-4z"/><path fill="#42d242" d="M187 201h4v4h-4zM183 209h4v4h-4zM179 217h4v4h-4z"/><path fill="#42d248" d="M191 109h4v4h-4zM195 181h4v4h-4z"/><path fill="#42d24e" d="M199 169h4v4h-4zM263 213h4v4h-4zM251 265h4v4h-4zM239 293h4v4h-4z"/><path fill="#42d254" d="M243 121h4v4h-4zM235 297h4v4h-4z"/><path fill="#42d25a" d="M203 153h4v4h-4z"/><path fill="#42d260" d="M203 145h4v4h-4zM203 149h4v4h-4z"/><path fill="#42d266" d="M203 141h4v4h-4z"/><path fill="#42d29c" d="M103 285h4v4h-4z"/><path fill="#42d848" d="M255 165h4v4h-4z"/><path fill="#42d84e" d="M259 177h4v4h-4z"/><path fill="#42d87e" d="M123 317h4v4h-4z"/><path fill="#489c72" d="M179 301h4v4h-4z"/><path fill="#489c78" d="M183 305h4v4h-4z"/><path fill="#48a866" d="M171 293h4v4h-4z"/><path fill="#48a88a" d="M195 313h4v4h-4z"/><path fill="#48ae66" d="M167 289h4v4h-4z"/><path fill="#48b460" d="M163 281h4v4h-4z"/><path fill="#48ba9c" d="M123 293h4v4h-4z"/><path fill="#48c054" d="M163 257h4v4h-4z"/><path fill="#48c654" d="M251 145h4v4h-4zM163 253h4v4h-4z"/><path fill="#48cc42" d="M171 229h4v4h-4z"/><path fill="#48cc4e" d="M167 241h4v4h-4z"/><path fill="#48cc54" d="M267 205h4v4h-4z"/><path fill="#48cc5a" d="M247 133h4v4h-4z"/><path fill="#48cc60" d="M199 129h4v4h-4z"/><path fill="#48cc66" d="M227 109h4v4h-4z"/><path fill="#48cc84" d="M211 101h4v4h-4z"/><path fill="#48cc90" d="M215 105h4v4h-4zM123 169h4v4h-4z"/><path fill="#48d23c" d="M187 197h4v4h-4zM183 205h4v4h-4zM179 213h4v4h-4z"/><path fill="#48d242" d="M191 189h4v4h-4zM175 221h4v4h-4zM259 253h4v4h-4z"/><path fill="#48d248" d="M255 161h4v4h-4zM195 177h4v4h-4z"/><path fill="#48d24e" d="M239 113h4v4h-4zM195 121h4v4h-4zM199 165h4v4h-4z"/><path fill="#48d290" d="M211 317h4v4h-4z"/><path fill="#48d296" d="M107 285h4v4h-4z"/><path fill="#4e7ecc" d="M131 341h4v4h-4z"/><path fill="#4e90ae" d="M131 337h4v4h-4z"/><path fill="#4e9c78" d="M187 309h4v4h-4z"/><path fill="#4eae60" d="M163 285h4v4h-4z"/><path fill="#4eba5a" d="M159 269h4v4h-4zM159 273h4v4h-4z"/><path fill="#4eba96" d="M127 301h4v4h-4z"/><path fill="#4ec096" d="M119 289h4v4h-4z"/><path fill="#4ec64e" d="M163 249h4v4h-4z"/><path fill="#4ec654" d="M251 141h4v4h-4z"/><path fill="#4ecc48" d="M255 157h4v4h-4zM167 237h4v4h-4z"/><path fill="#4ecc4e" d="M267 209h4v4h-4z"/><path fill="#4ecc78" d="M219 105h4v4h-4z"/><path fill="#4ecc8a" d="M107 201h4v4h-4z"/><path fill="#4ecc90" d="M111 285h4v4h-4z"/><path fill="#4ed236" d="M191 117h4v4h-4z"/><path fill="#4ed23c" d="M187 193h4v4h-4zM175 217h4v4h-4zM263 233h4v4h-4zM263 237h4v4h-4zM263 241h4v4h-4z"/><path fill="#4ed242" d="M191 185h4v4h-4z"/><path fill="#4ed248" d="M195 173h4v4h-4zM263 217h4v4h-4zM255 261h4v4h-4z"/><path fill="#4ed24e" d="M243 117h4v4h-4z"/><path fill="#4ed254" d="M231 109h4v4h-4zM199 161h4v4h-4z"/><path fill="#4ed25a" d="M247 129h4v4h-4zM231 301h4v4h-4z"/><path fill="#4ed848" d="M259 173h4v4h-4z"/><path fill="#4ed860" d="M127 325h4v4h-4z"/><path fill="#549c66" d="M175 301h4v4h-4z"/><path fill="#54a266" d="M171 297h4v4h-4z"/><path fill="#54a860" d="M167 293h4v4h-4z"/><path fill="#54ae84" d="M131 333h4v4h-4z"/><path fill="#54b460" d="M159 281h4v4h-4z"/><path fill="#54b484" d="M199 317h4v4h-4z"/><path fill="#54ba60" d="M159 277h4v4h-4z"/><path fill="#54ba90" d="M127 293h4v4h-4z"/><path fill="#54ba96" d="M127 297h4v4h-4z"/><path fill="#54c054" d="M159 261h4v4h-4z"/><path fill="#54c05a" d="M159 265h4v4h-4z"/><path fill="#54c090" d="M123 289h4v4h-4zM127 305h4v4h-4z"/><path fill="#54c648" d="M255 153h4v4h-4zM163 245h4v4h-4z"/><path fill="#54c64e" d="M159 257h4v4h-4z"/><path fill="#54c684" d="M127 309h4v4h-4z"/><path fill="#54cc42" d="M171 225h4v4h-4zM167 233h4v4h-4z"/><path fill="#54cc78" d="M215 101h4v4h-4z"/><path fill="#54cc84" d="M119 185h4v4h-4z"/><path fill="#54cc8a" d="M123 173h4v4h-4zM115 285h4v4h-4z"/><path fill="#54d236" d="M187 113h4v4h-4z"/><path fill="#54d23c" d="M183 201h4v4h-4zM179 209h4v4h-4zM263 245h4v4h-4z"/><path fill="#54d242" d="M191 181h4v4h-4zM263 221h4v4h-4zM263 225h4v4h-4zM263 229h4v4h-4z"/><path fill="#54d248" d="M235 109h4v4h-4zM195 169h4v4h-4zM251 269h4v4h-4zM243 289h4v4h-4z"/><path fill="#54d24e" d="M195 125h4v4h-4zM247 277h4v4h-4z"/><path fill="#54d254" d="M247 125h4v4h-4zM199 153h4v4h-4zM199 157h4v4h-4z"/><path fill="#54d260" d="M199 133h4v4h-4zM199 137h4v4h-4zM227 305h4v4h-4z"/><path fill="#54d266" d="M223 105h4v4h-4z"/><path fill="#54d26c" d="M211 97h4v4h-4z"/><path fill="#54d84e" d="M263 181h4v4h-4z"/><path fill="#54d86c" d="M223 309h4v4h-4z"/><path fill="#54d878" d="M219 313h4v4h-4z"/><path fill="#54d88a" d="M103 281h4v4h-4z"/><path fill="#5a966c" d="M179 305h4v4h-4z"/><path fill="#5a9c78" d="M191 313h4v4h-4z"/><path fill="#5aae60" d="M163 289h4v4h-4z"/><path fill="#5ab460" d="M159 285h4v4h-4z"/><path fill="#5ac04e" d="M255 149h4v4h-4z"/><path fill="#5ac64e" d="M159 253h4v4h-4z"/><path fill="#5ac654" d="M251 137h4v4h-4z"/><path fill="#5ac68a" d="M119 285h4v4h-4z"/><path fill="#5acc42" d="M167 229h4v4h-4zM163 237h4v4h-4z"/><path fill="#5acc48" d="M163 241h4v4h-4z"/><path fill="#5acc7e" d="M111 197h4v4h-4z"/><path fill="#5acc84" d="M123 177h4v4h-4z"/><path fill="#5ad236" d="M183 197h4v4h-4zM179 205h4v4h-4zM175 213h4v4h-4z"/><path fill="#5ad23c" d="M191 121h4v4h-4zM187 189h4v4h-4zM171 221h4v4h-4zM263 249h4v4h-4z"/><path fill="#5ad242" d="M191 177h4v4h-4zM259 257h4v4h-4z"/><path fill="#5ad248" d="M195 165h4v4h-4zM267 213h4v4h-4z"/><path fill="#5ad24e" d="M227 105h4v4h-4z"/><path fill="#5ad25a" d="M199 141h4v4h-4zM199 145h4v4h-4zM199 149h4v4h-4z"/><path fill="#5ad272" d="M127 313h4v4h-4z"/><path fill="#5ad27e" d="M215 317h4v4h-4z"/><path fill="#5ad284" d="M107 281h4v4h-4z"/><path fill="#5ad848" d="M259 169h4v4h-4z"/><path fill="#5ad866" d="M127 317h4v4h-4z"/><path fill="#5ade60" d="M127 321h4v4h-4z"/><path fill="#6072c6" d="M135 341h4v4h-4z"/><path fill="#60966c" d="M183 309h4v4h-4z"/><path fill="#60a85a" d="M167 297h4v4h-4z"/><path fill="#60ae5a" d="M159 289h4v4h-4zM163 293h4v4h-4z"/><path fill="#60b45a" d="M155 281h4v4h-4z"/><path fill="#60ba5a" d="M155 273h4v4h-4zM155 277h4v4h-4z"/><path fill="#60ba7e" d="M131 301h4v4h-4z"/><path fill="#60ba84" d="M127 289h4v4h-4zM131 293h4v4h-4zM131 297h4v4h-4z"/><path fill="#60c04e" d="M255 145h4v4h-4zM155 261h4v4h-4z"/><path fill="#60c054" d="M155 265h4v4h-4zM155 269h4v4h-4z"/><path fill="#60c084" d="M123 285h4v4h-4z"/><path fill="#60c648" d="M159 249h4v4h-4z"/><path fill="#60c660" d="M131 329h4v4h-4z"/><path fill="#60cc48" d="M159 245h4v4h-4z"/><path fill="#60cc4e" d="M271 193h4v4h-4zM271 197h4v4h-4zM271 201h4v4h-4z"/><path fill="#60cc54" d="M251 133h4v4h-4z"/><path fill="#60cc7e" d="M127 165h4v4h-4z"/><path fill="#60d230" d="M187 117h4v4h-4z"/><path fill="#60d236" d="M183 193h4v4h-4zM179 201h4v4h-4zM175 209h4v4h-4zM171 217h4v4h-4z"/><path fill="#60d23c" d="M239 109h4v4h-4zM187 185h4v4h-4zM167 225h4v4h-4z"/><path fill="#60d242" d="M231 105h4v4h-4zM191 173h4v4h-4z"/><path fill="#60d248" d="M195 161h4v4h-4zM267 185h4v4h-4z"/><path fill="#60d24e" d="M195 129h4v4h-4z"/><path fill="#60d260" d="M215 97h4v4h-4zM219 101h4v4h-4z"/><path fill="#60d278" d="M107 205h4v4h-4z"/><path fill="#60d27e" d="M111 281h4v4h-4z"/><path fill="#60d842" d="M243 113h4v4h-4z"/><path fill="#60d84e" d="M247 121h4v4h-4z"/><path fill="#666cd2" d="M135 345h4v4h-4z"/><path fill="#668aa8" d="M135 337h4v4h-4z"/><path fill="#669660" d="M175 305h4v4h-4z"/><path fill="#669c60" d="M171 301h4v4h-4z"/><path fill="#66b45a" d="M155 285h4v4h-4z"/><path fill="#66ba4e" d="M255 141h4v4h-4z"/><path fill="#66ba54" d="M151 273h4v4h-4z"/><path fill="#66ba5a" d="M151 277h4v4h-4z"/><path fill="#66ba7e" d="M131 289h4v4h-4z"/><path fill="#66c078" d="M131 305h4v4h-4z"/><path fill="#66c07e" d="M127 285h4v4h-4z"/><path fill="#66c648" d="M155 253h4v4h-4z"/><path fill="#66c64e" d="M155 257h4v4h-4z"/><path fill="#66cc42" d="M163 233h4v4h-4zM159 241h4v4h-4z"/><path fill="#66cc48" d="M271 205h4v4h-4z"/><path fill="#66cc78" d="M127 169h4v4h-4zM115 193h4v4h-4z"/><path fill="#66cc7e" d="M115 281h4v4h-4z"/><path fill="#66d236" d="M235 105h4v4h-4z"/><path fill="#66d23c" d="M187 181h4v4h-4z"/><path fill="#66d242" d="M191 169h4v4h-4zM267 217h4v4h-4z"/><path fill="#66d248" d="M255 265h4v4h-4zM247 281h4v4h-4zM239 297h4v4h-4z"/><path fill="#66d24e" d="M195 157h4v4h-4zM235 301h4v4h-4z"/><path fill="#66d254" d="M195 133h4v4h-4z"/><path fill="#66d842" d="M259 165h4v4h-4zM263 177h4v4h-4z"/><path fill="#66d878" d="M103 277h4v4h-4z"/><path fill="#6c9060" d="M179 309h4v4h-4z"/><path fill="#6c906c" d="M187 313h4v4h-4z"/><path fill="#6ca278" d="M195 317h4v4h-4z"/><path fill="#6ca854" d="M163 297h4v4h-4z"/><path fill="#6cae54" d="M159 293h4v4h-4z"/><path fill="#6cb45a" d="M151 285h4v4h-4zM155 289h4v4h-4z"/><path fill="#6cba5a" d="M151 281h4v4h-4z"/><path fill="#6cba72" d="M135 289h4v4h-4zM135 293h4v4h-4zM135 297h4v4h-4z"/><path fill="#6cc04e" d="M151 265h4v4h-4z"/><path fill="#6cc054" d="M151 269h4v4h-4z"/><path fill="#6cc072" d="M131 285h4v4h-4z"/><path fill="#6cc648" d="M155 249h4v4h-4z"/><path fill="#6cc64e" d="M151 261h4v4h-4z"/><path fill="#6cc66c" d="M131 309h4v4h-4z"/><path fill="#6cc672" d="M123 281h4v4h-4z"/><path fill="#6cc678" d="M119 281h4v4h-4z"/><path fill="#6cc67e" d="M207 321h4v4h-4z"/><path fill="#6ccc42" d="M159 237h4v4h-4z"/><path fill="#6ccc78" d="M123 181h4v4h-4z"/><path fill="#6cd230" d="M179 197h4v4h-4zM175 205h4v4h-4z"/><path fill="#6cd236" d="M183 189h4v4h-4zM171 213h4v4h-4zM167 221h4v4h-4zM267 229h4v4h-4zM267 233h4v4h-4zM267 237h4v4h-4zM263 253h4v4h-4z"/><path fill="#6cd23c" d="M187 177h4v4h-4zM267 221h4v4h-4zM267 225h4v4h-4zM163 229h4v4h-4z"/><path fill="#6cd242" d="M191 125h4v4h-4zM259 161h4v4h-4zM191 165h4v4h-4z"/><path fill="#6cd248" d="M223 101h4v4h-4zM251 273h4v4h-4z"/><path fill="#6cd24e" d="M251 129h4v4h-4zM195 145h4v4h-4zM195 149h4v4h-4zM195 153h4v4h-4z"/><path fill="#6cd254" d="M195 137h4v4h-4zM195 141h4v4h-4z"/><path fill="#6cd272" d="M107 209h4v4h-4z"/><path fill="#6cd842" d="M247 117h4v4h-4z"/><path fill="#6cd854" d="M231 305h4v4h-4z"/><path fill="#6cd85a" d="M103 233h4v4h-4z"/><path fill="#6cd860" d="M103 229h4v4h-4z"/><path fill="#6cd872" d="M107 277h4v4h-4z"/><path fill="#729654" d="M171 305h4v4h-4z"/><path fill="#72a254" d="M167 301h4v4h-4z"/><path fill="#72a27e" d="M135 333h4v4h-4z"/><path fill="#72ae54" d="M155 293h4v4h-4z"/><path fill="#72b45a" d="M147 289h8v4h-8z"/><path fill="#72ba5a" d="M147 277h4v4h-4zM143 281h8v4h-8zM147 285h4v4h-4z"/><path fill="#72ba60" d="M143 285h4v4h-4zM143 289h4v4h-4z"/><path fill="#72ba66" d="M139 285h4v4h-4zM139 289h4v4h-4zM139 293h4v4h-4z"/><path fill="#72ba6c" d="M135 285h4v4h-4z"/><path fill="#72ba78" d="M203 321h4v4h-4z"/><path fill="#72c04e" d="M255 137h4v4h-4zM147 269h4v4h-4z"/><path fill="#72c054" d="M147 273h4v4h-4z"/><path fill="#72c06c" d="M127 281h8v4h-8zM135 301h4v4h-4z"/><path fill="#72c642" d="M259 153h4v4h-4z"/><path fill="#72c648" d="M151 257h4v4h-4z"/><path fill="#72cc3c" d="M159 233h4v4h-4z"/><path fill="#72cc42" d="M259 157h4v4h-4zM271 209h4v4h-4zM155 245h4v4h-4z"/><path fill="#72cc72" d="M127 173h4v4h-4zM119 189h4v4h-4zM211 321h4v4h-4z"/><path fill="#72d230" d="M187 121h4v4h-4zM179 193h4v4h-4zM175 201h4v4h-4zM171 209h4v4h-4z"/><path fill="#72d236" d="M227 101h4v4h-4zM183 185h4v4h-4zM167 217h4v4h-4zM163 225h4v4h-4zM267 241h4v4h-4z"/><path fill="#72d23c" d="M259 261h4v4h-4z"/><path fill="#72d242" d="M191 161h4v4h-4zM243 293h4v4h-4z"/><path fill="#72d248" d="M219 97h4v4h-4zM271 189h4v4h-4z"/><path fill="#72d25a" d="M131 313h4v4h-4z"/><path fill="#72d266" d="M107 213h4v4h-4z"/><path fill="#72d26c" d="M111 277h4v4h-4z"/><path fill="#72d82a" d="M239 105h4v4h-4z"/><path fill="#72d830" d="M243 109h4v4h-4z"/><path fill="#72d848" d="M251 125h4v4h-4zM131 325h4v4h-4z"/><path fill="#72d854" d="M103 237h4v4h-4z"/><path fill="#72d85a" d="M227 309h4v4h-4z"/><path fill="#72d866" d="M223 313h4v4h-4z"/><path fill="#7872ba" d="M139 341h4v4h-4z"/><path fill="#7872c0" d="M139 345h4v4h-4z"/><path fill="#788a60" d="M183 313h4v4h-4z"/><path fill="#789054" d="M175 309h4v4h-4z"/><path fill="#78a24e" d="M163 301h4v4h-4z"/><path fill="#78ae4e" d="M159 297h4v4h-4z"/><path fill="#78b454" d="M151 293h4v4h-4z"/><path fill="#78b45a" d="M147 293h4v4h-4z"/><path fill="#78ba60" d="M139 281h4v4h-4zM143 293h4v4h-4z"/><path fill="#78ba66" d="M139 297h4v4h-4z"/><path fill="#78c048" d="M259 149h4v4h-4z"/><path fill="#78c04e" d="M147 265h4v4h-4z"/><path fill="#78c054" d="M143 273h4v4h-4z"/><path fill="#78c05a" d="M139 277h8v4h-8z"/><path fill="#78c060" d="M135 305h4v4h-4z"/><path fill="#78c066" d="M135 281h4v4h-4z"/><path fill="#78c642" d="M151 253h4v4h-4z"/><path fill="#78c648" d="M147 261h4v4h-4z"/><path fill="#78cc3c" d="M155 237h4v4h-4z"/><path fill="#78cc42" d="M155 241h4v4h-4zM151 249h4v4h-4z"/><path fill="#78cc66" d="M119 277h4v4h-4z"/><path fill="#78cc6c" d="M111 201h4v4h-4zM115 277h4v4h-4z"/><path fill="#78cc72" d="M131 161h4v4h-4z"/><path fill="#78d230" d="M183 117h4v4h-4zM167 213h4v4h-4zM267 245h4v4h-4z"/><path fill="#78d236" d="M183 181h4v4h-4zM163 221h4v4h-4z"/><path fill="#78d23c" d="M187 173h4v4h-4zM159 229h4v4h-4z"/><path fill="#78d242" d="M191 129h4v4h-4zM191 157h4v4h-4zM271 213h4v4h-4z"/><path fill="#78d260" d="M107 217h4v4h-4zM107 221h4v4h-4z"/><path fill="#78d82a" d="M231 101h4v4h-4z"/><path fill="#78d836" d="M247 113h4v4h-4z"/><path fill="#78d842" d="M263 173h4v4h-4z"/><path fill="#78d84e" d="M103 241h4v4h-4zM131 317h4v4h-4z"/><path fill="#78d85a" d="M107 225h4v4h-4z"/><path fill="#78d866" d="M103 273h4v4h-4z"/><path fill="#78d86c" d="M219 317h4v4h-4z"/><path fill="#78de42" d="M131 321h4v4h-4z"/><path fill="#7e8496" d="M139 337h4v4h-4z"/><path fill="#7e9666" d="M191 317h4v4h-4z"/><path fill="#7e9c4e" d="M167 305h4v4h-4z"/><path fill="#7eae4e" d="M155 297h4v4h-4z"/><path fill="#7eb448" d="M259 145h4v4h-4z"/><path fill="#7eb44e" d="M151 297h4v4h-4z"/><path fill="#7eb454" d="M147 297h4v4h-4z"/><path fill="#7eba5a" d="M143 297h4v4h-4z"/><path fill="#7ec04e" d="M143 269h4v4h-4z"/><path fill="#7ec054" d="M139 273h4v4h-4z"/><path fill="#7ec05a" d="M135 277h4v4h-4z"/><path fill="#7ec060" d="M131 277h4v4h-4zM139 301h4v4h-4z"/><path fill="#7ec642" d="M147 257h4v4h-4z"/><path fill="#7ec648" d="M143 265h4v4h-4z"/><path fill="#7ec64e" d="M255 133h4v4h-4z"/><path fill="#7ec660" d="M127 277h4v4h-4z"/><path fill="#7ec666" d="M123 277h4v4h-4z"/><path fill="#7ecc3c" d="M151 245h4v4h-4z"/><path fill="#7ecc54" d="M135 309h4v4h-4z"/><path fill="#7ecc66" d="M123 185h4v4h-4z"/><path fill="#7ecc6c" d="M131 165h4v4h-4zM127 177h4v4h-4z"/><path fill="#7ed230" d="M179 189h4v4h-4zM175 197h4v4h-4zM171 205h4v4h-4zM163 217h4v4h-4zM267 249h4v4h-4z"/><path fill="#7ed236" d="M183 177h4v4h-4zM159 225h4v4h-4zM263 257h4v4h-4z"/><path fill="#7ed23c" d="M187 169h4v4h-4zM155 233h4v4h-4z"/><path fill="#7ed242" d="M255 269h4v4h-4z"/><path fill="#7ed248" d="M191 133h4v4h-4zM191 153h4v4h-4z"/><path fill="#7ed824" d="M235 101h4v4h-4z"/><path fill="#7ed830" d="M223 97h4v4h-4z"/><path fill="#7ed836" d="M219 93h4v4h-4z"/><path fill="#7ed842" d="M251 121h4v4h-4z"/><path fill="#7ed848" d="M107 237h4v4h-4zM107 241h4v4h-4zM103 245h4v4h-4z"/><path fill="#7ed84e" d="M107 233h4v4h-4z"/><path fill="#7ed854" d="M107 229h4v4h-4z"/><path fill="#7ed860" d="M107 273h4v4h-4z"/><path fill="#848a54" d="M179 313h4v4h-4z"/><path fill="#84904e" d="M171 309h4v4h-4z"/><path fill="#84a848" d="M159 301h4v4h-4z"/><path fill="#84ae6c" d="M199 321h4v4h-4z"/><path fill="#84b448" d="M259 141h4v4h-4z"/><path fill="#84ba54" d="M143 301h4v4h-4z"/><path fill="#84c054" d="M135 273h4v4h-4zM139 305h4v4h-4zM135 329h4v4h-4z"/><path fill="#84c642" d="M147 253h4v4h-4zM143 261h4v4h-4z"/><path fill="#84c64e" d="M139 269h4v4h-4z"/><path fill="#84c654" d="M131 273h4v4h-4z"/><path fill="#84cc3c" d="M151 241h4v4h-4z"/><path fill="#84cc66" d="M131 169h4v4h-4z"/><path fill="#84d22a" d="M175 193h4v4h-4zM171 201h4v4h-4zM167 209h4v4h-4z"/><path fill="#84d230" d="M179 185h4v4h-4zM159 221h4v4h-4z"/><path fill="#84d236" d="M187 125h4v4h-4zM271 221h4v4h-4zM155 229h4v4h-4z"/><path fill="#84d23c" d="M187 165h4v4h-4zM271 217h4v4h-4z"/><path fill="#84d242" d="M251 277h4v4h-4zM247 285h4v4h-4z"/><path fill="#84d248" d="M191 137h4v4h-4zM191 141h4v4h-4zM191 145h4v4h-4zM191 149h4v4h-4z"/><path fill="#84d25a" d="M111 273h4v4h-4z"/><path fill="#84d260" d="M111 205h4v4h-4z"/><path fill="#84d266" d="M215 321h4v4h-4z"/><path fill="#84d824" d="M227 97h4v4h-4zM243 105h4v4h-4z"/><path fill="#84d83c" d="M263 169h4v4h-4zM267 181h4v4h-4z"/><path fill="#84d842" d="M107 245h4v4h-4zM103 249h4v4h-4z"/><path fill="#84d85a" d="M103 269h4v4h-4z"/><path fill="#8a8a5a" d="M187 317h4v4h-4z"/><path fill="#8aa248" d="M163 305h4v4h-4z"/><path fill="#8aae48" d="M155 301h4v4h-4z"/><path fill="#8ab448" d="M151 301h4v4h-4z"/><path fill="#8aba48" d="M147 301h4v4h-4z"/><path fill="#8ac642" d="M143 257h4v4h-4z"/><path fill="#8ac648" d="M139 265h4v4h-4z"/><path fill="#8ac64e" d="M135 269h4v4h-4z"/><path fill="#8ac654" d="M127 273h4v4h-4z"/><path fill="#8acc3c" d="M151 237h4v4h-4zM147 245h4v4h-4zM147 249h4v4h-4z"/><path fill="#8acc48" d="M255 129h4v4h-4z"/><path fill="#8acc5a" d="M119 273h8v4h-8z"/><path fill="#8acc60" d="M115 197h4v4h-4z"/><path fill="#8acc66" d="M135 157h4v4h-4z"/><path fill="#8ad22a" d="M175 189h4v4h-4zM167 205h4v4h-4zM163 213h4v4h-4z"/><path fill="#8ad230" d="M179 117h4v4h-4zM183 121h4v4h-4zM179 181h4v4h-4zM271 229h4v4h-4z"/><path fill="#8ad236" d="M183 173h4v4h-4zM155 225h4v4h-4zM271 225h4v4h-4zM151 233h4v4h-4z"/><path fill="#8ad23c" d="M187 157h4v4h-4zM187 161h4v4h-4zM259 265h4v4h-4z"/><path fill="#8ad248" d="M135 313h4v4h-4z"/><path fill="#8ad254" d="M111 217h4v4h-4zM111 221h4v4h-4z"/><path fill="#8ad25a" d="M111 209h4v4h-4zM111 213h4v4h-4zM115 273h4v4h-4z"/><path fill="#8ad260" d="M131 173h4v4h-4zM127 181h4v4h-4z"/><path fill="#8ad818" d="M231 97h4v4h-4zM239 101h4v4h-4z"/><path fill="#8ad824" d="M223 93h4v4h-4z"/><path fill="#8ad83c" d="M263 165h4v4h-4zM111 241h4v4h-4zM111 245h4v4h-4z"/><path fill="#8ad842" d="M111 237h4v4h-4z"/><path fill="#8ad848" d="M111 229h4v4h-4zM111 233h4v4h-4z"/><path fill="#8ad84e" d="M111 225h4v4h-4z"/><path fill="#8ade2a" d="M247 109h4v4h-4z"/><path fill="#8ade3c" d="M251 117h4v4h-4z"/><path fill="#908a4e" d="M175 313h4v4h-4z"/><path fill="#909648" d="M167 309h4v4h-4z"/><path fill="#90a272" d="M139 333h4v4h-4z"/><path fill="#90a842" d="M159 305h4v4h-4z"/><path fill="#90b448" d="M259 137h4v4h-4z"/><path fill="#90c048" d="M143 305h4v4h-4z"/><path fill="#90c642" d="M139 261h4v4h-4z"/><path fill="#90c648" d="M135 265h4v4h-4zM139 309h4v4h-4z"/><path fill="#90c64e" d="M131 269h4v4h-4z"/><path fill="#90cc36" d="M147 241h4v4h-4z"/><path fill="#90cc3c" d="M143 249h4v4h-4zM143 253h4v4h-4zM139 257h4v4h-4z"/><path fill="#90cc4e" d="M127 269h4v4h-4z"/><path fill="#90cc60" d="M135 161h4v4h-4z"/><path fill="#90d22a" d="M171 197h4v4h-4zM163 209h4v4h-4z"/><path fill="#90d230" d="M179 177h4v4h-4zM159 217h4v4h-4zM155 221h4v4h-4zM271 233h4v4h-4zM271 237h4v4h-4zM267 253h4v4h-4z"/><path fill="#90d236" d="M183 169h4v4h-4zM151 229h4v4h-4z"/><path fill="#90d23c" d="M187 129h4v4h-4zM263 161h4v4h-4z"/><path fill="#90d242" d="M187 153h4v4h-4z"/><path fill="#90d812" d="M235 97h4v4h-4z"/><path fill="#90d818" d="M227 93h4v4h-4z"/><path fill="#90d83c" d="M107 249h4v4h-4zM135 317h4v4h-4z"/><path fill="#90d842" d="M103 253h4v4h-4z"/><path fill="#90d84e" d="M103 265h4v4h-4z"/><path fill="#90d854" d="M107 269h4v4h-4z"/><path fill="#968454" d="M183 317h4v4h-4z"/><path fill="#968496" d="M143 341h4v4h-4z"/><path fill="#968a42" d="M171 313h4v4h-4z"/><path fill="#968a96" d="M143 345h4v4h-4z"/><path fill="#969c3c" d="M163 309h4v4h-4z"/><path fill="#969c60" d="M195 321h4v4h-4z"/><path fill="#96ae3c" d="M155 305h4v4h-4z"/><path fill="#96b43c" d="M151 305h4v4h-4z"/><path fill="#96ba42" d="M259 133h4v4h-4zM147 305h4v4h-4z"/><path fill="#96c03c" d="M263 153h4v4h-4zM143 309h4v4h-4z"/><path fill="#96cc36" d="M143 245h4v4h-4z"/><path fill="#96cc3c" d="M263 157h4v4h-4zM139 253h4v4h-4zM139 313h4v4h-4z"/><path fill="#96cc42" d="M135 261h4v4h-4zM131 265h4v4h-4z"/><path fill="#96cc48" d="M123 269h4v4h-4z"/><path fill="#96cc5a" d="M139 153h4v4h-4z"/><path fill="#96d224" d="M171 193h4v4h-4zM167 201h4v4h-4z"/><path fill="#96d22a" d="M175 185h4v4h-4zM159 213h4v4h-4zM271 241h4v4h-4z"/><path fill="#96d230" d="M179 173h4v4h-4zM151 225h4v4h-4z"/><path fill="#96d236" d="M183 161h4v4h-4zM183 165h4v4h-4zM147 233h4v4h-4zM147 237h4v4h-4zM263 261h4v4h-4zM135 325h4v4h-4z"/><path fill="#96d23c" d="M271 185h4v4h-4zM255 273h4v4h-4z"/><path fill="#96d242" d="M255 125h4v4h-4zM187 133h4v4h-4zM187 145h4v4h-4zM187 149h4v4h-4z"/><path fill="#96d248" d="M119 269h4v4h-4z"/><path fill="#96d24e" d="M111 269h8v4h-8z"/><path fill="#96d254" d="M131 177h4v4h-4z"/><path fill="#96d25a" d="M135 165h4v4h-4zM119 193h4v4h-4z"/><path fill="#96d830" d="M135 321h4v4h-4z"/><path fill="#96d836" d="M267 177h4v4h-4zM115 245h4v4h-4zM111 249h4v4h-4z"/><path fill="#96d83c" d="M115 237h4v4h-4zM115 241h4v4h-4z"/><path fill="#96d842" d="M103 257h4v4h-4z"/><path fill="#96d848" d="M103 261h4v4h-4z"/><path fill="#96de12" d="M243 101h4v4h-4z"/><path fill="#96de18" d="M247 105h4v4h-4z"/><path fill="#96de30" d="M251 113h4v4h-4z"/><path fill="#9c7e4e" d="M179 317h4v4h-4z"/><path fill="#9c907e" d="M143 337h4v4h-4z"/><path fill="#9c9690" d="M143 349h4v4h-4z"/><path fill="#9ca83c" d="M159 309h4v4h-4z"/><path fill="#9cae42" d="M263 145h4v4h-4z"/><path fill="#9cba36" d="M147 309h4v4h-4z"/><path fill="#9cba42" d="M263 149h4v4h-4z"/><path fill="#9cba4e" d="M139 329h4v4h-4z"/><path fill="#9cc05a" d="M207 325h4v4h-4z"/><path fill="#9ccc36" d="M139 249h4v4h-4zM135 253h4v4h-4z"/><path fill="#9ccc3c" d="M135 257h4v4h-4zM131 261h4v4h-4z"/><path fill="#9ccc42" d="M123 265h8v4h-8z"/><path fill="#9ccc54" d="M139 157h4v4h-4z"/><path fill="#9cd224" d="M171 189h4v4h-4zM163 205h4v4h-4zM159 209h4v4h-4z"/><path fill="#9cd22a" d="M175 181h4v4h-4zM155 217h4v4h-4zM271 245h4v4h-4z"/><path fill="#9cd230" d="M179 169h4v4h-4zM151 221h4v4h-4z"/><path fill="#9cd236" d="M183 157h4v4h-4zM147 229h4v4h-4zM143 237h4v4h-4zM143 241h4v4h-4z"/><path fill="#9cd242" d="M187 137h4v4h-4zM187 141h4v4h-4z"/><path fill="#9cd248" d="M115 217h4v4h-4z"/><path fill="#9cd24e" d="M127 185h4v4h-4z"/><path fill="#9cd254" d="M135 169h4v4h-4zM123 189h4v4h-4z"/><path fill="#9cd824" d="M167 197h4v4h-4z"/><path fill="#9cd830" d="M179 121h4v4h-4zM115 249h4v4h-4z"/><path fill="#9cd836" d="M183 125h4v4h-4zM107 253h4v4h-4z"/><path fill="#9cd83c" d="M247 289h4v4h-4z"/><path fill="#9cd842" d="M115 229h4v4h-4zM115 233h4v4h-4z"/><path fill="#9cd848" d="M115 221h4v4h-4zM115 225h4v4h-4zM107 265h4v4h-4z"/><path fill="#9cde3c" d="M255 121h4v4h-4z"/><path fill="#a27e42" d="M175 317h4v4h-4z"/><path fill="#a2903c" d="M167 313h4v4h-4z"/><path fill="#a29054" d="M191 321h4v4h-4z"/><path fill="#a2a260" d="M143 333h4v4h-4z"/><path fill="#a2a842" d="M263 141h4v4h-4z"/><path fill="#a2ae36" d="M155 309h4v4h-4z"/><path fill="#a2b436" d="M151 309h4v4h-4z"/><path fill="#a2ba5a" d="M203 325h4v4h-4z"/><path fill="#a2c630" d="M143 313h4v4h-4z"/><path fill="#a2cc36" d="M131 257h4v4h-4z"/><path fill="#a2cc3c" d="M127 261h4v4h-4z"/><path fill="#a2cc54" d="M143 149h4v4h-4zM211 325h4v4h-4z"/><path fill="#a2d224" d="M171 185h4v4h-4z"/><path fill="#a2d22a" d="M175 177h4v4h-4zM155 213h4v4h-4zM151 217h4v4h-4z"/><path fill="#a2d230" d="M179 165h4v4h-4zM147 221h4v4h-4zM147 225h4v4h-4zM143 229h4v4h-4zM119 245h4v4h-4zM119 249h4v4h-4zM267 257h4v4h-4zM139 317h4v4h-4z"/><path fill="#a2d236" d="M143 233h4v4h-4zM139 241h4v4h-4zM139 245h4v4h-4zM135 249h4v4h-4zM131 253h4v4h-4zM127 257h4v4h-4zM123 261h4v4h-4z"/><path fill="#a2d23c" d="M183 153h4v4h-4zM259 269h4v4h-4z"/><path fill="#a2d242" d="M115 265h8v4h-8z"/><path fill="#a2d248" d="M131 181h4v4h-4zM115 209h4v4h-4zM115 213h4v4h-4z"/><path fill="#a2d24e" d="M135 173h4v4h-4zM115 201h4v4h-4z"/><path fill="#a2d254" d="M139 161h4v4h-4z"/><path fill="#a2d824" d="M167 193h4v4h-4zM163 201h4v4h-4z"/><path fill="#a2d830" d="M115 253h4v4h-4z"/><path fill="#a2d836" d="M267 173h4v4h-4zM119 241h4v4h-4zM111 253h4v4h-4zM107 257h4v4h-4z"/><path fill="#a2d83c" d="M251 281h4v4h-4z"/><path fill="#a2d842" d="M111 265h4v4h-4z"/><path fill="#a2de1e" d="M251 109h4v4h-4z"/><path fill="#a87e4e" d="M187 321h4v4h-4z"/><path fill="#a8843c" d="M171 317h4v4h-4z"/><path fill="#a89c36" d="M163 313h4v4h-4z"/><path fill="#a8a230" d="M159 313h4v4h-4z"/><path fill="#a8a83c" d="M263 137h4v4h-4z"/><path fill="#a8c030" d="M147 313h4v4h-4z"/><path fill="#a8c642" d="M259 129h4v4h-4z"/><path fill="#a8cc36" d="M139 325h4v4h-4z"/><path fill="#a8d224" d="M171 181h4v4h-4z"/><path fill="#a8d22a" d="M175 173h4v4h-4zM271 249h4v4h-4zM139 321h4v4h-4z"/><path fill="#a8d230" d="M179 161h4v4h-4zM143 225h4v4h-4zM123 241h4v4h-4zM135 241h4v4h-4zM123 245h4v4h-4zM131 245h4v4h-4zM123 249h12v4h-12zM119 253h12v4h-12zM119 257h4v4h-4z"/><path fill="#a8d236" d="M139 233h4v4h-4zM139 237h4v4h-4zM135 245h4v4h-4zM123 257h4v4h-4zM115 261h8v4h-8z"/><path fill="#a8d23c" d="M183 145h4v4h-4zM183 149h4v4h-4z"/><path fill="#a8d248" d="M115 205h4v4h-4z"/><path fill="#a8d24e" d="M143 153h4v4h-4zM139 165h4v4h-4z"/><path fill="#a8d81e" d="M163 197h4v4h-4z"/><path fill="#a8d824" d="M159 205h4v4h-4zM155 209h4v4h-4z"/><path fill="#a8d830" d="M171 121h8v4h-8zM111 257h8v4h-8z"/><path fill="#a8d836" d="M183 129h4v4h-4zM119 237h4v4h-4zM111 261h4v4h-4z"/><path fill="#a8d83c" d="M119 229h4v4h-4zM119 233h4v4h-4zM107 261h4v4h-4z"/><path fill="#a8d842" d="M119 217h4v4h-4zM119 221h4v4h-4zM119 225h4v4h-4z"/><path fill="#a8de30" d="M255 117h4v4h-4z"/><path fill="#ae7848" d="M183 321h4v4h-4z"/><path fill="#ae9036" d="M167 317h4v4h-4z"/><path fill="#aeae30" d="M155 313h4v4h-4z"/><path fill="#aeb430" d="M151 313h4v4h-4z"/><path fill="#aeb448" d="M143 329h4v4h-4z"/><path fill="#aec62a" d="M143 317h4v4h-4z"/><path fill="#aed224" d="M171 177h4v4h-4z"/><path fill="#aed22a" d="M175 169h4v4h-4z"/><path fill="#aed230" d="M143 221h4v4h-4zM139 225h4v4h-4zM139 229h4v4h-4zM135 233h4v4h-4zM135 237h4v4h-4zM127 241h8v4h-8zM127 245h4v4h-4z"/><path fill="#aed236" d="M179 157h4v4h-4zM135 229h4v4h-4z"/><path fill="#aed23c" d="M183 133h4v4h-4zM183 137h4v4h-4zM183 141h4v4h-4zM119 213h4v4h-4z"/><path fill="#aed248" d="M147 145h4v4h-4zM143 157h4v4h-4zM139 169h4v4h-4zM135 177h4v4h-4zM215 325h4v4h-4z"/><path fill="#aed81e" d="M159 201h4v4h-4z"/><path fill="#aed824" d="M167 189h4v4h-4zM151 213h4v4h-4z"/><path fill="#aed82a" d="M143 217h8v4h-8z"/><path fill="#aed830" d="M271 181h4v4h-4zM139 221h4v4h-4z"/><path fill="#aed836" d="M179 125h4v4h-4zM267 169h4v4h-4zM131 217h4v4h-4zM131 221h8v4h-8zM135 225h4v4h-4zM123 237h4v4h-4zM263 265h4v4h-4z"/><path fill="#aed83c" d="M123 217h8v4h-8zM123 221h8v4h-8zM123 225h4v4h-4z"/><path fill="#aede12" d="M251 105h4v4h-4z"/><path fill="#b4783c" d="M175 321h4v4h-4z"/><path fill="#b47842" d="M179 321h4v4h-4z"/><path fill="#b49630" d="M163 317h4v4h-4z"/><path fill="#b4a22a" d="M159 317h4v4h-4z"/><path fill="#b4a260" d="M147 337h4v4h-4z"/><path fill="#b4a266" d="M147 341h4v4h-4z"/><path fill="#b4a84e" d="M199 325h4v4h-4z"/><path fill="#b4a866" d="M147 345h4v4h-4z"/><path fill="#b4ae3c" d="M263 133h4v4h-4z"/><path fill="#b4c02a" d="M147 317h4v4h-4z"/><path fill="#b4c030" d="M143 325h4v4h-4z"/><path fill="#b4c62a" d="M143 321h4v4h-4z"/><path fill="#b4d224" d="M171 173h4v4h-4zM271 253h4v4h-4z"/><path fill="#b4d22a" d="M175 165h4v4h-4z"/><path fill="#b4d230" d="M175 161h4v4h-4zM127 237h8v4h-8z"/><path fill="#b4d236" d="M167 125h4v4h-4zM179 149h4v4h-4zM179 153h4v4h-4zM131 233h4v4h-4z"/><path fill="#b4d23c" d="M259 125h4v4h-4zM131 185h4v4h-4z"/><path fill="#b4d242" d="M151 141h4v4h-4zM143 161h4v4h-4zM139 173h4v4h-4zM127 189h4v4h-4z"/><path fill="#b4d248" d="M147 149h4v4h-4z"/><path fill="#b4d81e" d="M167 185h4v4h-4zM163 193h4v4h-4zM159 197h4v4h-4zM155 205h4v4h-4z"/><path fill="#b4d824" d="M151 209h4v4h-4zM147 213h4v4h-4z"/><path fill="#b4d830" d="M175 125h4v4h-4zM131 213h4v4h-4zM135 217h8v4h-8z"/><path fill="#b4d836" d="M267 165h4v4h-4zM127 213h4v4h-4zM127 225h8v4h-8zM123 229h12v4h-12zM123 233h8v4h-8zM255 277h4v4h-4z"/><path fill="#b4d83c" d="M123 213h4v4h-4z"/><path fill="#b4de24" d="M255 113h4v4h-4z"/><path fill="#ba7e36" d="M171 321h4v4h-4z"/><path fill="#ba8a30" d="M167 321h4v4h-4z"/><path fill="#baa82a" d="M155 317h4v4h-4z"/><path fill="#baa84e" d="M147 333h4v4h-4z"/><path fill="#baae3c" d="M147 329h4v4h-4z"/><path fill="#bab42a" d="M151 317h4v4h-4z"/><path fill="#bab436" d="M267 149h4v4h-4z"/><path fill="#bab460" d="M147 349h4v4h-4z"/><path fill="#bab466" d="M147 353h4v4h-4z"/><path fill="#baba2a" d="M147 321h4v4h-4z"/><path fill="#bac036" d="M267 153h4v4h-4z"/><path fill="#bacc36" d="M267 157h4v4h-4z"/><path fill="#bad21e" d="M167 181h4v4h-4z"/><path fill="#bad224" d="M167 177h4v4h-4z"/><path fill="#bad22a" d="M171 169h4v4h-4z"/><path fill="#bad230" d="M175 157h4v4h-4z"/><path fill="#bad236" d="M163 129h4v4h-4zM179 141h4v4h-4zM179 145h4v4h-4zM267 161h4v4h-4z"/><path fill="#bad23c" d="M159 133h4v4h-4zM135 181h4v4h-4zM123 193h4v4h-4zM119 197h4v4h-4zM119 209h4v4h-4z"/><path fill="#bad242" d="M155 137h4v4h-4zM151 145h4v4h-4zM147 153h4v4h-4zM143 165h4v4h-4z"/><path fill="#bad81e" d="M163 189h4v4h-4zM155 201h4v4h-4zM151 205h4v4h-4z"/><path fill="#bad824" d="M147 209h4v4h-4z"/><path fill="#bad82a" d="M139 213h8v4h-8zM267 261h4v4h-4z"/><path fill="#bad830" d="M135 213h4v4h-4z"/><path fill="#bad836" d="M171 125h4v4h-4zM179 129h4v4h-4zM251 285h4v4h-4z"/><path fill="#bade18" d="M255 109h4v4h-4z"/><path fill="#c0962a" d="M163 321h4v4h-4z"/><path fill="#c09642" d="M195 325h4v4h-4z"/><path fill="#c09c2a" d="M159 321h4v4h-4z"/><path fill="#c09c36" d="M267 141h4v4h-4z"/><path fill="#c0a824" d="M155 321h4v4h-4z"/><path fill="#c0a836" d="M267 145h4v4h-4z"/><path fill="#c0b424" d="M151 321h4v4h-4z"/><path fill="#c0b430" d="M147 325h4v4h-4z"/><path fill="#c0ba36" d="M263 129h4v4h-4z"/><path fill="#c0d224" d="M167 173h4v4h-4z"/><path fill="#c0d22a" d="M171 161h4v4h-4zM171 165h4v4h-4z"/><path fill="#c0d230" d="M175 149h4v4h-4zM175 153h4v4h-4z"/><path fill="#c0d236" d="M167 129h8v4h-8zM179 137h4v4h-4zM139 177h4v4h-4z"/><path fill="#c0d23c" d="M159 137h4v4h-4zM155 141h4v4h-4zM151 149h4v4h-4zM143 169h4v4h-4z"/><path fill="#c0d242" d="M147 157h4v4h-4z"/><path fill="#c0d818" d="M155 197h4v4h-4z"/><path fill="#c0d81e" d="M163 181h4v4h-4zM163 185h4v4h-4zM159 189h4v4h-4zM159 193h4v4h-4z"/><path fill="#c0d824" d="M143 209h4v4h-4z"/><path fill="#c0d82a" d="M271 177h4v4h-4z"/><path fill="#c0d830" d="M259 121h4v4h-4zM123 209h4v4h-4z"/><path fill="#c0d836" d="M175 129h4v4h-4zM179 133h4v4h-4zM259 273h4v4h-4z"/><path fill="#c66c36" d="M179 325h4v4h-4z"/><path fill="#c66c3c" d="M183 325h4v4h-4z"/><path fill="#c67236" d="M175 325h4v4h-4z"/><path fill="#c6783c" d="M187 325h4v4h-4z"/><path fill="#c67e30" d="M171 325h4v4h-4z"/><path fill="#c6842a" d="M167 325h4v4h-4z"/><path fill="#c6843c" d="M191 325h4v4h-4z"/><path fill="#c69636" d="M267 137h4v4h-4z"/><path fill="#c6a82a" d="M155 325h4v4h-4z"/><path fill="#c6a83c" d="M151 333h4v4h-4z"/><path fill="#c6ae2a" d="M151 325h4v4h-4z"/><path fill="#c6ae30" d="M151 329h4v4h-4z"/><path fill="#c6ae42" d="M151 337h4v4h-4z"/><path fill="#c6c03c" d="M207 329h4v4h-4z"/><path fill="#c6d21e" d="M163 177h4v4h-4z"/><path fill="#c6d224" d="M167 165h4v4h-4zM167 169h4v4h-4z"/><path fill="#c6d22a" d="M171 157h4v4h-4z"/><path fill="#c6d230" d="M175 145h4v4h-4zM171 149h4v4h-4zM171 153h4v4h-4zM139 181h4v4h-4zM135 185h4v4h-4zM131 189h4v4h-4z"/><path fill="#c6d236" d="M163 133h16v4h-16zM163 137h4v4h-4zM175 137h4v4h-4zM159 141h4v4h-4zM175 141h4v4h-4zM155 149h4v4h-4zM151 157h4v4h-4zM147 165h4v4h-4zM143 173h4v4h-4zM119 205h4v4h-4z"/><path fill="#c6d23c" d="M155 145h4v4h-4zM151 153h4v4h-4zM147 161h4v4h-4z"/><path fill="#c6d818" d="M155 193h4v4h-4zM151 201h4v4h-4z"/><path fill="#c6d81e" d="M159 185h4v4h-4zM147 205h4v4h-4z"/><path fill="#c6d824" d="M135 209h8v4h-8zM271 257h4v4h-4z"/><path fill="#c6d82a" d="M131 209h4v4h-4z"/><path fill="#c6d830" d="M127 209h4v4h-4z"/><path fill="#c6de2a" d="M259 117h4v4h-4z"/><path fill="#cc6c30" d="M175 329h4v4h-4z"/><path fill="#cc902a" d="M163 325h4v4h-4z"/><path fill="#cc9c24" d="M159 325h4v4h-4z"/><path fill="#cca82a" d="M155 329h4v4h-4z"/><path fill="#ccb43c" d="M203 329h4v4h-4z"/><path fill="#ccb442" d="M151 341h4v4h-4z"/><path fill="#ccc03c" d="M151 345h4v4h-4z"/><path fill="#ccc630" d="M263 125h4v4h-4z"/><path fill="#cccc36" d="M211 329h4v4h-4z"/><path fill="#ccd21e" d="M159 177h4v4h-4z"/><path fill="#ccd224" d="M163 165h4v4h-4zM163 169h4v4h-4zM163 173h4v4h-4z"/><path fill="#ccd22a" d="M167 153h4v4h-4zM167 157h4v4h-4zM167 161h4v4h-4zM147 173h4v4h-4zM143 181h4v4h-4z"/><path fill="#ccd230" d="M167 141h8v4h-8zM163 145h12v4h-12zM159 149h12v4h-12zM155 157h4v4h-4zM151 161h4v4h-4zM147 169h4v4h-4zM143 177h4v4h-4zM127 193h4v4h-4zM119 201h4v4h-4z"/><path fill="#ccd236" d="M167 137h8v4h-8zM163 141h4v4h-4zM159 145h4v4h-4zM155 153h4v4h-4z"/><path fill="#ccd818" d="M155 185h4v4h-4zM155 189h4v4h-4zM151 193h4v4h-4zM151 197h4v4h-4zM147 201h4v4h-4z"/><path fill="#ccd81e" d="M159 181h4v4h-4zM139 205h8v4h-8z"/><path fill="#ccd82a" d="M271 173h4v4h-4zM139 185h4v4h-4z"/><path fill="#ccd830" d="M263 269h4v4h-4zM255 281h4v4h-4z"/><path fill="#ccde1e" d="M259 113h4v4h-4z"/><path fill="#d26630" d="M179 329h8v4h-8z"/><path fill="#d2722a" d="M175 333h4v4h-4z"/><path fill="#d2782a" d="M171 329h4v4h-4z"/><path fill="#d28424" d="M167 329h4v4h-4z"/><path fill="#d29624" d="M163 329h4v4h-4z"/><path fill="#d29c24" d="M159 329h4v4h-4z"/><path fill="#d29c36" d="M267 133h4v4h-4z"/><path fill="#d2a830" d="M155 333h4v4h-4z"/><path fill="#d2ae30" d="M155 337h4v4h-4z"/><path fill="#d2c642" d="M151 353h4v4h-4z"/><path fill="#d2cc36" d="M151 349h4v4h-4z"/><path fill="#d2d21e" d="M159 173h4v4h-4zM155 177h4v4h-4z"/><path fill="#d2d224" d="M159 165h4v4h-4zM155 169h8v4h-8zM151 173h8v4h-8zM147 177h8v4h-8z"/><path fill="#d2d22a" d="M159 157h8v4h-8zM159 161h8v4h-8zM155 165h4v4h-4zM151 169h4v4h-4zM123 205h4v4h-4z"/><path fill="#d2d230" d="M159 153h8v4h-8zM155 161h4v4h-4zM151 165h4v4h-4z"/><path fill="#d2d818" d="M151 189h4v4h-4zM147 193h4v4h-4zM147 197h4v4h-4zM143 201h4v4h-4z"/><path fill="#d2d81e" d="M151 181h8v4h-8zM147 185h8v4h-8zM139 189h4v4h-4zM135 205h4v4h-4z"/><path fill="#d2d824" d="M147 181h4v4h-4zM143 185h4v4h-4zM131 205h4v4h-4z"/><path fill="#d2d82a" d="M135 189h4v4h-4zM267 265h4v4h-4z"/><path fill="#d86630" d="M179 333h8v4h-8z"/><path fill="#d87230" d="M187 329h4v4h-4zM179 337h4v4h-4z"/><path fill="#d8782a" d="M175 337h4v4h-4z"/><path fill="#d87e2a" d="M171 333h4v4h-4z"/><path fill="#d88424" d="M171 337h4v4h-4z"/><path fill="#d88a24" d="M167 333h4v4h-4z"/><path fill="#d88a2a" d="M175 341h4v4h-4z"/><path fill="#d88a30" d="M179 341h4v4h-4z"/><path fill="#d89024" d="M167 337h4v4h-4zM171 341h4v4h-4z"/><path fill="#d89624" d="M163 333h4v4h-4z"/><path fill="#d89c2a" d="M171 345h8v4h-8z"/><path fill="#d89c30" d="M171 353h4v4h-4zM171 357h4v4h-4z"/><path fill="#d89c3c" d="M159 361h4v4h-4z"/><path fill="#d8a224" d="M159 333h4v4h-4z"/><path fill="#d8a22a" d="M171 349h4v4h-4z"/><path fill="#d8a230" d="M179 345h4v4h-4z"/><path fill="#d8a824" d="M159 337h4v4h-4z"/><path fill="#d8a830" d="M175 349h4v4h-4z"/><path fill="#d8a836" d="M199 329h4v4h-4z"/><path fill="#d8ae30" d="M183 345h4v4h-4zM175 353h4v4h-4zM175 357h4v4h-4z"/><path fill="#d8b436" d="M155 357h4v4h-4z"/><path fill="#d8ba2a" d="M155 341h4v4h-4z"/><path fill="#d8ba30" d="M179 349h4v4h-4z"/><path fill="#d8c030" d="M179 357h4v4h-4z"/><path fill="#d8c630" d="M179 353h4v4h-4z"/><path fill="#d8cc30" d="M183 349h4v4h-4z"/><path fill="#d8d224" d="M131 193h4v4h-4z"/><path fill="#d8d22a" d="M263 121h4v4h-4zM123 197h4v4h-4z"/><path fill="#d8d818" d="M147 189h4v4h-4zM143 193h4v4h-4zM139 197h8v4h-8zM135 201h8v4h-8z"/><path fill="#d8d81e" d="M143 189h4v4h-4zM135 193h8v4h-8z"/><path fill="#d8d824" d="M127 205h4v4h-4z"/><path fill="#d8d82a" d="M271 169h4v4h-4z"/><path fill="#d8d830" d="M259 277h4v4h-4zM183 353h4v4h-4z"/><path fill="#d8de12" d="M259 109h4v4h-4z"/><path fill="#de6c30" d="M183 337h4v4h-4z"/><path fill="#de8a30" d="M183 341h4v4h-4z"/><path fill="#de9030" d="M167 357h4v4h-4z"/><path fill="#de9036" d="M167 361h4v4h-4z"/><path fill="#de962a" d="M167 353h4v4h-4z"/><path fill="#de9630" d="M271 141h4v4h-4zM163 357h4v4h-4z"/><path fill="#de9636" d="M163 361h4v4h-4zM167 365h4v4h-4z"/><path fill="#de9c1e" d="M163 337h4v4h-4z"/><path fill="#de9c24" d="M167 341h4v4h-4zM167 349h4v4h-4z"/><path fill="#de9c30" d="M271 145h4v4h-4zM171 361h4v4h-4z"/><path fill="#de9c36" d="M171 365h4v4h-4z"/><path fill="#dea224" d="M167 345h4v4h-4z"/><path fill="#dea81e" d="M163 341h4v4h-4z"/><path fill="#dea830" d="M267 129h4v4h-4zM159 357h4v4h-4zM175 361h4v4h-4zM175 365h4v4h-4z"/><path fill="#deae30" d="M271 149h4v4h-4z"/><path fill="#deb424" d="M159 341h4v4h-4z"/><path fill="#deba30" d="M271 153h4v4h-4z"/><path fill="#dec02a" d="M155 353h4v4h-4zM179 361h4v4h-4z"/><path fill="#dec624" d="M155 345h4v4h-4z"/><path fill="#decc24" d="M155 349h4v4h-4z"/><path fill="#ded224" d="M127 197h4v4h-4zM123 201h4v4h-4z"/><path fill="#ded22a" d="M183 357h4v4h-4z"/><path fill="#ded230" d="M271 161h4v4h-4z"/><path fill="#ded818" d="M135 197h4v4h-4z"/><path fill="#ded81e" d="M131 197h4v4h-4zM127 201h8v4h-8z"/><path fill="#ded824" d="M271 261h4v4h-4z"/><path fill="#ded82a" d="M271 165h4v4h-4z"/><path fill="#e46c2a" d="M187 333h4v4h-4z"/><path fill="#e4782a" d="M187 337h4v4h-4z"/><path fill="#e47e2a" d="M191 329h4v4h-4z"/><path fill="#e49030" d="M271 137h4v4h-4z"/><path fill="#e4962a" d="M187 341h4v4h-4z"/><path fill="#e49630" d="M195 329h4v4h-4z"/><path fill="#e49c36" d="M171 369h4v4h-4z"/><path fill="#e4a22a" d="M163 353h4v4h-4z"/><path fill="#e4a824" d="M163 349h4v4h-4z"/><path fill="#e4ae1e" d="M163 345h4v4h-4z"/><path fill="#e4b424" d="M159 353h4v4h-4z"/><path fill="#e4b42a" d="M187 345h4v4h-4z"/><path fill="#e4ba1e" d="M159 345h4v4h-4zM159 349h4v4h-4z"/><path fill="#e4c630" d="M271 157h4v4h-4z"/><path fill="#e4d21e" d="M263 117h4v4h-4z"/><path fill="#e4d22a" d="M187 349h4v4h-4z"/><path fill="#e4d82a" d="M263 273h4v4h-4z"/><path fill="#e4de2a" d="M187 353h4v4h-4z"/><path fill="#ea962a" d="M271 133h4v4h-4z"/><path fill="#eab42a" d="M203 333h4v4h-4z"/><path fill="#eaba2a" d="M267 125h4v4h-4z"/><path fill="#eac02a" d="M207 333h4v4h-4z"/><path fill="#ead818" d="M263 113h4v4h-4z"/><path fill="#f07e24" d="M191 333h4v4h-4z"/><path fill="#f08a24" d="M191 337h4v4h-4z"/><path fill="#f09624" d="M195 333h4v4h-4z"/><path fill="#f0a224" d="M191 341h4v4h-4z"/><path fill="#f0a824" d="M199 333h4v4h-4z"/><path fill="#f0ba24" d="M191 345h4v4h-4z"/><path fill="#f0d224" d="M191 349h4v4h-4z"/><path fill="#f0d824" d="M267 269h4v4h-4z"/><path fill="#f69c1e" d="M195 337h4v4h-4z"/><path fill="#f69c24" d="M271 129h4v4h-4z"/><path fill="#f6c01e" d="M267 121h4v4h-4z"/><path fill="#fcae1e" d="M199 337h4v4h-4zM195 341h4v4h-4z"/><path fill="#fcba1e" d="M203 337h4v4h-4z"/><path fill="#fcc01e" d="M195 345h4v4h-4z"/><path fill="#fccc18" d="M267 117h4v4h-4z"/><path fill="#ff8a24" d="M275 137h4v4h-4z"/><path fill="#ff901e" d="M275 133h4v4h-4z"/><path fill="#ff9024" d="M275 141h4v4h-4z"/><path fill="#ff961e" d="M275 129h4v4h-4z"/><path fill="#ff9c2a" d="M275 145h4v4h-4z"/><path fill="#ffa218" d="M275 125h4v4h-4z"/><path fill="#ffa81e" d="M271 125h4v4h-4z"/><path fill="#ffae0c" d="M275 121h4v4h-4z"/><path fill="#ffb406" d="M275 117h4v4h-4z"/><path fill="#ffb418" d="M271 121h4v4h-4z"/><path fill="#ffba18" d="M199 341h4v4h-4z"/><path fill="#ffc00c" d="M271 117h4v4h-4z"/><path fill="#ffcc0c" d="M267 113h4v4h-4z"/></g></g>
<g clip-path="url(#cs1)"><g filter="url(#sb)"><path fill="#24c68a" d="M443 255h5v5h-5z"/><path fill="#24c696" d="M443 250h5v5h-5z"/><path fill="#24c69c" d="M443 245h5v5h-5z"/><path fill="#24cc7e" d="M438 185h5v5h-5zM438 190h5v5h-5z"/><path fill="#24cc84" d="M438 195h5v5h-5zM438 255h5v5h-5z"/><path fill="#24cc8a" d="M443 195h5v5h-5zM438 250h5v5h-5z"/><path fill="#24cc90" d="M443 200h5v5h-5z"/><path fill="#24cca2" d="M443 240h5v5h-5z"/><path fill="#24cca8" d="M443 235h5v5h-5z"/><path fill="#2ac67e" d="M443 260h5v5h-5z"/><path fill="#2acc5a" d="M423 265h5v5h-5z"/><path fill="#2acc60" d="M418 260h5v5h-5zM428 265h5v5h-5z"/><path fill="#2acc66" d="M423 255h5v5h-5zM423 260h10v5h-10z"/><path fill="#2acc72" d="M428 250h5v5h-5zM428 255h5v5h-5zM433 260h5v5h-5z"/><path fill="#2acc78" d="M433 195h5v5h-5zM433 255h5v5h-5zM438 260h5v5h-5z"/><path fill="#2acc7e" d="M433 250h5v5h-5z"/><path fill="#2acc84" d="M438 200h5v5h-5z"/><path fill="#2acc8a" d="M433 245h5v5h-5z"/><path fill="#2acc90" d="M443 205h5v5h-5z"/><path fill="#2acc96" d="M443 210h5v5h-5zM438 245h5v5h-5z"/><path fill="#2acc9c" d="M443 215h5v5h-5zM443 220h5v5h-5zM438 235h5v5h-5zM438 240h5v5h-5z"/><path fill="#2acca2" d="M443 225h5v5h-5zM443 230h5v5h-5z"/><path fill="#2ad26c" d="M433 180h5v5h-5z"/><path fill="#2ad272" d="M433 185h5v5h-5zM433 190h5v5h-5z"/><path fill="#2ad278" d="M438 180h5v5h-5z"/><path fill="#30c672" d="M443 265h5v5h-5z"/><path fill="#30cc54" d="M428 270h5v5h-5z"/><path fill="#30cc60" d="M418 255h5v5h-5z"/><path fill="#30cc66" d="M423 250h5v5h-5zM433 265h5v5h-5z"/><path fill="#30cc6c" d="M438 265h5v5h-5z"/><path fill="#30cc78" d="M433 200h5v5h-5zM428 245h5v5h-5z"/><path fill="#30cc8a" d="M438 205h5v5h-5zM438 210h5v5h-5zM433 240h5v5h-5z"/><path fill="#30cc90" d="M438 215h5v5h-5zM438 220h5v5h-5zM433 235h5v5h-5z"/><path fill="#30cc96" d="M438 225h5v5h-5z"/><path fill="#30cc9c" d="M438 230h5v5h-5z"/><path fill="#30d24e" d="M423 270h5v5h-5z"/><path fill="#30d254" d="M418 270h5v5h-5z"/><path fill="#30d25a" d="M418 265h5v5h-5z"/><path fill="#30d260" d="M428 180h5v5h-5zM413 260h5v5h-5zM408 265h10v5h-10z"/><path fill="#30d266" d="M428 185h5v5h-5zM428 190h5v5h-5zM408 260h5v5h-5z"/><path fill="#36c666" d="M443 270h5v5h-5z"/><path fill="#36cc5a" d="M433 270h5v5h-5z"/><path fill="#36cc60" d="M438 270h5v5h-5z"/><path fill="#36cc66" d="M423 245h5v5h-5z"/><path fill="#36cc78" d="M428 240h5v5h-5z"/><path fill="#36cc7e" d="M433 205h5v5h-5z"/><path fill="#36cc8a" d="M433 230h5v5h-5z"/><path fill="#36d254" d="M423 180h5v5h-5zM413 270h5v5h-5z"/><path fill="#36d25a" d="M423 185h5v5h-5zM423 190h5v5h-5zM408 270h5v5h-5z"/><path fill="#36d260" d="M418 250h5v5h-5zM413 255h5v5h-5z"/><path fill="#36d26c" d="M428 195h5v5h-5z"/><path fill="#3cc660" d="M443 275h5v5h-5z"/><path fill="#3ccc48" d="M428 275h5v5h-5z"/><path fill="#3ccc4e" d="M433 275h5v5h-5z"/><path fill="#3ccc54" d="M438 275h5v5h-5z"/><path fill="#3ccc66" d="M423 240h5v5h-5z"/><path fill="#3ccc78" d="M428 235h5v5h-5z"/><path fill="#3ccc7e" d="M433 210h5v5h-5zM433 215h5v5h-5z"/><path fill="#3ccc84" d="M433 220h5v5h-5zM433 225h5v5h-5z"/><path fill="#3cd248" d="M418 275h10v5h-10z"/><path fill="#3cd24e" d="M418 180h5v5h-5zM418 185h5v5h-5zM408 275h10v5h-10z"/><path fill="#3cd254" d="M418 245h5v5h-5z"/><path fill="#3cd25a" d="M428 175h5v5h-5zM413 250h5v5h-5zM403 270h5v5h-5z"/><path fill="#3cd260" d="M423 195h5v5h-5zM408 255h5v5h-5zM403 260h5v5h-5zM403 265h5v5h-5z"/><path fill="#3cd266" d="M433 175h5v5h-5z"/><path fill="#3cd26c" d="M428 200h5v5h-5z"/><path fill="#3cd272" d="M438 175h5v5h-5z"/><path fill="#42cc78" d="M428 230h5v5h-5z"/><path fill="#42d242" d="M413 175h5v5h-5z"/><path fill="#42d248" d="M418 175h5v5h-5zM413 180h5v5h-5zM413 185h5v5h-5z"/><path fill="#42d254" d="M423 175h5v5h-5zM418 190h5v5h-5zM403 275h5v5h-5z"/><path fill="#42d25a" d="M403 255h5v5h-5zM398 265h5v5h-5zM398 270h5v5h-5z"/><path fill="#42d26c" d="M428 205h5v5h-5z"/><path fill="#48c654" d="M443 280h5v5h-5z"/><path fill="#48cc42" d="M428 280h5v5h-5z"/><path fill="#48cc48" d="M433 280h5v5h-5z"/><path fill="#48cc4e" d="M438 280h5v5h-5z"/><path fill="#48cc78" d="M428 225h5v5h-5z"/><path fill="#48d23c" d="M403 170h5v5h-5zM403 175h5v5h-5zM418 280h10v5h-10z"/><path fill="#48d242" d="M408 170h10v5h-10zM408 175h5v5h-5zM408 180h5v5h-5zM413 280h5v5h-5z"/><path fill="#48d248" d="M408 280h5v5h-5z"/><path fill="#48d24e" d="M418 240h5v5h-5zM413 245h5v5h-5zM403 280h5v5h-5z"/><path fill="#48d254" d="M418 195h5v5h-5zM408 250h5v5h-5zM398 275h5v5h-5z"/><path fill="#48d25a" d="M398 260h5v5h-5z"/><path fill="#48d260" d="M423 200h5v5h-5zM423 235h5v5h-5z"/><path fill="#48d272" d="M428 210h5v5h-5zM428 215h5v5h-5zM428 220h5v5h-5z"/><path fill="#4ecc66" d="M438 170h5v5h-5z"/><path fill="#4ed23c" d="M398 165h15v5h-15zM398 170h5v5h-5zM398 175h5v5h-5zM403 180h5v5h-5z"/><path fill="#4ed242" d="M408 185h5v5h-5z"/><path fill="#4ed248" d="M418 170h5v5h-5zM413 190h5v5h-5z"/><path fill="#4ed24e" d="M398 280h5v5h-5z"/><path fill="#4ed254" d="M403 250h5v5h-5zM393 270h5v5h-5zM393 275h5v5h-5z"/><path fill="#4ed25a" d="M398 255h5v5h-5zM393 265h5v5h-5z"/><path fill="#4ed260" d="M433 170h5v5h-5zM423 205h5v5h-5zM423 230h5v5h-5z"/><path fill="#54c648" d="M438 285h5v5h-5z"/><path fill="#54c64e" d="M443 285h5v5h-5z"/><path fill="#54cc3c" d="M428 285h5v5h-5z"/><path fill="#54cc42" d="M433 285h5v5h-5z"/><path fill="#54d236" d="M423 285h5v5h-5z"/><path fill="#54d23c" d="M393 160h5v5h-5zM393 165h5v5h-5zM393 170h5v5h-5zM393 175h5v5h-5zM398 180h5v5h-5zM413 285h10v5h-10z"/><path fill="#54d242" d="M403 185h5v5h-5zM408 190h5v5h-5zM413 240h5v5h-5zM408 285h5v5h-5z"/><path fill="#54d248" d="M413 195h5v5h-5zM408 245h5v5h-5zM403 285h5v5h-5z"/><path fill="#54d24e" d="M423 170h5v5h-5zM418 235h5v5h-5z"/><path fill="#54d254" d="M428 170h5v5h-5zM418 200h5v5h-5z"/><path fill="#54d260" d="M423 210h5v5h-5zM423 215h5v5h-5zM423 225h5v5h-5z"/><path fill="#54d83c" d="M388 160h5v5h-5zM388 165h5v5h-5zM388 170h5v5h-5z"/><path fill="#54d84e" d="M393 280h5v5h-5z"/><path fill="#5ad23c" d="M398 160h10v5h-10zM393 180h5v5h-5z"/><path fill="#5ad242" d="M413 165h5v5h-5z"/><path fill="#5ad248" d="M398 285h5v5h-5z"/><path fill="#5ad24e" d="M398 250h5v5h-5z"/><path fill="#5ad254" d="M418 205h5v5h-5z"/><path fill="#5ad260" d="M423 220h5v5h-5z"/><path fill="#5ad83c" d="M388 155h5v5h-5zM388 175h5v5h-5z"/><path fill="#5ad848" d="M393 285h5v5h-5z"/><path fill="#60c642" d="M438 290h5v5h-5z"/><path fill="#60c648" d="M443 290h5v5h-5z"/><path fill="#60cc36" d="M423 290h10v5h-10z"/><path fill="#60cc3c" d="M433 290h5v5h-5z"/><path fill="#60d236" d="M418 290h5v5h-5z"/><path fill="#60d23c" d="M398 155h5v5h-5zM408 160h5v5h-5zM398 185h5v5h-5zM413 235h5v5h-5zM408 240h5v5h-5zM408 290h10v5h-10z"/><path fill="#60d242" d="M418 165h5v5h-5zM403 190h5v5h-5zM408 195h5v5h-5zM398 290h10v5h-10z"/><path fill="#60d248" d="M403 245h5v5h-5z"/><path fill="#60d24e" d="M413 200h5v5h-5zM418 230h5v5h-5z"/><path fill="#60d254" d="M418 210h5v5h-5z"/><path fill="#60d83c" d="M388 150h5v5h-5zM393 155h5v5h-5zM388 180h5v5h-5z"/><path fill="#66d23c" d="M393 185h5v5h-5z"/><path fill="#66d24e" d="M418 225h5v5h-5z"/><path fill="#66d254" d="M418 215h5v5h-5zM418 220h5v5h-5z"/><path fill="#66d83c" d="M388 145h5v5h-5zM393 150h5v5h-5z"/><path fill="#66d848" d="M393 290h5v5h-5z"/><path fill="#66d84e" d="M393 250h5v5h-5z"/><path fill="#6cc63c" d="M438 295h5v5h-5z"/><path fill="#6cc642" d="M443 295h5v5h-5z"/><path fill="#6ccc36" d="M423 295h10v5h-10z"/><path fill="#6ccc3c" d="M433 295h5v5h-5z"/><path fill="#6cd236" d="M413 295h10v5h-10z"/><path fill="#6cd23c" d="M403 155h5v5h-5zM398 190h5v5h-5zM403 295h10v5h-10z"/><path fill="#6cd242" d="M403 195h5v5h-5zM413 230h5v5h-5z"/><path fill="#6cd248" d="M423 165h5v5h-5zM408 200h5v5h-5zM398 245h5v5h-5z"/><path fill="#6cd24e" d="M428 165h5v5h-5zM413 205h5v5h-5z"/><path fill="#6cd25a" d="M433 165h5v5h-5z"/><path fill="#6cd83c" d="M388 140h5v5h-5zM388 185h5v5h-5z"/><path fill="#6cd842" d="M393 295h10v5h-10z"/><path fill="#72d236" d="M408 235h5v5h-5z"/><path fill="#72d23c" d="M398 150h5v5h-5zM413 160h5v5h-5zM393 190h5v5h-5zM403 240h5v5h-5z"/><path fill="#72d24e" d="M413 210h5v5h-5z"/><path fill="#72d83c" d="M388 135h5v5h-5zM393 145h5v5h-5z"/><path fill="#78d23c" d="M393 140h5v5h-5zM398 145h5v5h-5zM408 155h5v5h-5zM398 195h5v5h-5z"/><path fill="#78d242" d="M403 200h5v5h-5zM408 205h5v5h-5zM413 225h5v5h-5z"/><path fill="#78d248" d="M413 215h5v5h-5zM413 220h5v5h-5z"/><path fill="#78d83c" d="M388 120h5v5h-5zM388 125h5v5h-5zM388 130h5v5h-5zM388 190h5v5h-5zM398 300h5v5h-5z"/><path fill="#78d842" d="M393 300h5v5h-5z"/><path fill="#78d848" d="M393 245h5v5h-5z"/><path fill="#7ec636" d="M433 300h5v5h-5z"/><path fill="#7ec63c" d="M438 300h5v5h-5z"/><path fill="#7ecc36" d="M423 300h10v5h-10z"/><path fill="#7ed236" d="M408 230h5v5h-5zM408 300h15v5h-15z"/><path fill="#7ed23c" d="M393 130h5v5h-5zM393 135h5v5h-5zM403 150h5v5h-5zM418 160h5v5h-5zM403 300h5v5h-5z"/><path fill="#7ed836" d="M403 235h5v5h-5z"/><path fill="#7ed83c" d="M388 110h5v5h-5zM388 115h5v5h-5zM393 195h5v5h-5zM398 240h5v5h-5z"/><path fill="#84d23c" d="M393 125h5v5h-5zM398 140h5v5h-5zM398 200h5v5h-5z"/><path fill="#84d242" d="M403 205h5v5h-5zM408 210h5v5h-5z"/><path fill="#84d83c" d="M388 105h5v5h-5zM393 110h5v5h-5zM393 115h5v5h-5zM393 120h5v5h-5zM393 240h5v5h-5zM393 305h5v5h-5z"/><path fill="#8ac03c" d="M438 305h5v5h-5z"/><path fill="#8ac636" d="M433 305h5v5h-5z"/><path fill="#8ad236" d="M398 135h5v5h-5zM403 145h5v5h-5zM413 155h5v5h-5z"/><path fill="#8ad242" d="M423 160h5v5h-5z"/><path fill="#8ad836" d="M398 235h5v5h-5zM403 305h5v5h-5z"/><path fill="#8ad83c" d="M388 100h5v5h-5zM393 105h5v5h-5zM393 200h5v5h-5zM408 225h5v5h-5zM398 305h5v5h-5z"/><path fill="#8ad842" d="M408 215h5v5h-5z"/><path fill="#90cc30" d="M423 305h5v5h-5z"/><path fill="#90cc36" d="M428 305h5v5h-5z"/><path fill="#90d236" d="M398 120h5v5h-5zM398 125h5v5h-5zM398 130h5v5h-5zM408 150h5v5h-5zM408 305h15v5h-15z"/><path fill="#90d23c" d="M398 115h5v5h-5z"/><path fill="#90d248" d="M428 160h5v5h-5z"/><path fill="#90d24e" d="M433 160h5v5h-5z"/><path fill="#90d836" d="M403 230h5v5h-5z"/><path fill="#90d83c" d="M388 95h5v5h-5zM393 100h5v5h-5zM398 105h5v5h-5zM398 110h5v5h-5zM398 205h5v5h-5zM403 210h5v5h-5zM408 220h5v5h-5zM388 310h10v5h-10z"/><path fill="#96c036" d="M438 310h5v5h-5z"/><path fill="#96d236" d="M403 140h5v5h-5z"/><path fill="#96d83c" d="M393 95h5v5h-5zM398 100h5v5h-5zM393 205h5v5h-5zM393 235h5v5h-5zM398 310h5v5h-5z"/><path fill="#9cc636" d="M428 310h10v5h-10z"/><path fill="#9ccc36" d="M403 125h5v5h-5z"/><path fill="#9cd236" d="M403 105h5v5h-5zM403 110h5v5h-5zM403 115h5v5h-5zM403 120h5v5h-5zM403 130h5v5h-5zM403 135h5v5h-5z"/><path fill="#9cd836" d="M398 95h5v5h-5zM403 225h5v5h-5zM398 230h5v5h-5zM403 310h5v5h-5z"/><path fill="#9cd83c" d="M388 90h5v5h-5zM398 210h5v5h-5zM403 215h5v5h-5zM403 220h5v5h-5zM388 315h5v5h-5z"/><path fill="#a2cc30" d="M418 310h10v5h-10z"/><path fill="#a2d236" d="M408 145h5v5h-5zM418 155h5v5h-5zM408 310h10v5h-10z"/><path fill="#a2d836" d="M388 85h5v5h-5zM393 90h5v5h-5zM403 100h5v5h-5zM393 210h5v5h-5zM393 230h5v5h-5zM398 315h5v5h-5z"/><path fill="#a2d83c" d="M393 315h5v5h-5z"/><path fill="#a8c036" d="M433 315h10v5h-10z"/><path fill="#a8cc36" d="M408 115h5v5h-5zM408 120h5v5h-5z"/><path fill="#a8d230" d="M408 140h5v5h-5z"/><path fill="#a8d236" d="M408 100h5v5h-5zM408 105h5v5h-5zM408 110h5v5h-5zM413 150h5v5h-5z"/><path fill="#a8d836" d="M388 80h5v5h-5zM393 85h5v5h-5zM398 90h5v5h-5zM403 95h5v5h-5zM398 220h5v5h-5zM398 225h5v5h-5zM388 320h5v5h-5z"/><path fill="#a8d83c" d="M398 215h5v5h-5z"/><path fill="#aec630" d="M428 315h5v5h-5z"/><path fill="#aecc30" d="M408 130h5v5h-5zM408 135h5v5h-5zM423 315h5v5h-5z"/><path fill="#aecc36" d="M408 125h5v5h-5z"/><path fill="#aecc48" d="M433 155h5v5h-5z"/><path fill="#aed23c" d="M423 155h10v5h-10z"/><path fill="#aed836" d="M388 75h5v5h-5zM393 80h5v5h-5zM398 85h5v5h-5zM403 90h5v5h-5zM408 95h5v5h-5zM393 215h5v5h-5zM393 220h5v5h-5zM393 225h5v5h-5zM403 315h5v5h-5zM393 320h5v5h-5z"/><path fill="#b4ba36" d="M438 320h5v5h-5z"/><path fill="#b4c036" d="M433 320h5v5h-5z"/><path fill="#b4c630" d="M413 120h5v5h-5z"/><path fill="#b4cc30" d="M413 115h5v5h-5zM418 315h5v5h-5z"/><path fill="#b4cc36" d="M413 110h5v5h-5z"/><path fill="#b4d236" d="M413 100h5v5h-5zM413 105h5v5h-5zM408 315h10v5h-10z"/><path fill="#b4d836" d="M388 70h5v5h-5zM393 75h5v5h-5zM398 80h5v5h-5zM403 85h5v5h-5zM408 90h5v5h-5zM398 320h5v5h-5zM388 325h5v5h-5z"/><path fill="#bac030" d="M428 320h5v5h-5z"/><path fill="#bac630" d="M413 125h5v5h-5z"/><path fill="#bacc30" d="M418 105h5v5h-5zM418 110h5v5h-5z"/><path fill="#bad230" d="M413 145h5v5h-5zM418 150h5v5h-5z"/><path fill="#bad236" d="M418 100h5v5h-5z"/><path fill="#bad836" d="M393 70h5v5h-5zM398 75h5v5h-5zM403 80h5v5h-5zM408 85h5v5h-5zM413 90h5v5h-5zM413 95h5v5h-5zM403 320h5v5h-5zM393 325h5v5h-5z"/><path fill="#c0ba36" d="M433 325h10v5h-10z"/><path fill="#c0c630" d="M418 115h5v5h-5zM418 120h5v5h-5zM413 130h5v5h-5zM423 320h5v5h-5z"/><path fill="#c0cc30" d="M413 135h5v5h-5zM413 140h5v5h-5zM418 320h5v5h-5z"/><path fill="#c0d230" d="M413 320h5v5h-5z"/><path fill="#c0d236" d="M418 95h5v5h-5zM408 320h5v5h-5z"/><path fill="#c0d836" d="M398 70h5v5h-5zM403 75h5v5h-5zM408 80h5v5h-5zM413 85h5v5h-5zM418 90h5v5h-5zM398 325h5v5h-5z"/><path fill="#c6c030" d="M418 125h5v5h-5zM428 325h5v5h-5z"/><path fill="#c6c630" d="M423 110h5v5h-5zM423 115h5v5h-5zM423 325h5v5h-5z"/><path fill="#c6cc30" d="M423 105h5v5h-5z"/><path fill="#c6cc3c" d="M433 150h5v5h-5z"/><path fill="#c6d230" d="M423 95h5v5h-5zM423 100h5v5h-5z"/><path fill="#c6d236" d="M403 325h5v5h-5z"/><path fill="#c6d836" d="M408 75h5v5h-5zM413 80h5v5h-5zM418 85h5v5h-5zM393 330h5v5h-5z"/><path fill="#ccba30" d="M433 330h5v5h-5z"/><path fill="#ccc030" d="M423 120h5v5h-5z"/><path fill="#ccc630" d="M428 110h5v5h-5zM418 130h5v5h-5zM418 325h5v5h-5z"/><path fill="#cccc30" d="M428 105h5v5h-5zM413 325h5v5h-5z"/><path fill="#cccc36" d="M428 150h5v5h-5z"/><path fill="#ccd230" d="M428 95h5v5h-5zM428 100h5v5h-5zM423 150h5v5h-5zM408 325h5v5h-5z"/><path fill="#ccd236" d="M398 330h5v5h-5z"/><path fill="#ccd830" d="M423 90h5v5h-5z"/><path fill="#ccd836" d="M413 75h5v5h-5zM418 80h5v5h-5zM423 85h5v5h-5z"/><path fill="#d2b430" d="M433 335h5v5h-5z"/><path fill="#d2ba30" d="M428 120h5v5h-5zM428 330h5v5h-5z"/><path fill="#d2c030" d="M428 115h5v5h-5zM423 125h5v5h-5zM423 330h5v5h-5z"/><path fill="#d2c630" d="M433 110h5v5h-5zM418 135h5v5h-5zM418 330h5v5h-5z"/><path fill="#d2cc30" d="M433 100h5v5h-5zM433 105h5v5h-5zM418 140h5v5h-5zM408 330h5v5h-5z"/><path fill="#d2d230" d="M428 90h5v5h-5zM418 145h5v5h-5zM403 330h5v5h-5z"/><path fill="#d2d236" d="M433 90h5v5h-5zM433 95h5v5h-5z"/><path fill="#d2d836" d="M423 80h10v5h-10zM428 85h5v5h-5z"/><path fill="#d8ba30" d="M433 120h5v5h-5zM428 125h5v5h-5zM423 335h10v5h-10z"/><path fill="#d8c030" d="M433 115h5v5h-5zM423 130h5v5h-5z"/><path fill="#d8c036" d="M438 110h5v5h-5zM438 115h5v5h-5z"/><path fill="#d8c636" d="M438 105h5v5h-5z"/><path fill="#d8c63c" d="M433 145h5v5h-5z"/><path fill="#d8cc30" d="M413 330h5v5h-5zM403 335h5v5h-5z"/><path fill="#d8cc36" d="M438 95h5v5h-5zM438 100h5v5h-5z"/><path fill="#d8d236" d="M433 85h5v5h-5zM438 90h5v5h-5z"/><path fill="#deb430" d="M428 340h10v5h-10z"/><path fill="#deba30" d="M433 125h5v5h-5zM428 130h5v5h-5z"/><path fill="#deba36" d="M438 120h5v5h-5zM433 130h5v5h-5z"/><path fill="#dec030" d="M423 135h5v5h-5zM418 335h5v5h-5z"/><path fill="#dec630" d="M413 335h5v5h-5z"/><path fill="#decc30" d="M423 145h10v5h-10zM408 335h5v5h-5z"/><path fill="#ded236" d="M438 85h5v5h-5z"/><path fill="#e4ae30" d="M433 345h5v5h-5z"/><path fill="#e4b430" d="M428 345h5v5h-5z"/><path fill="#e4ba30" d="M423 340h5v5h-5z"/><path fill="#e4c030" d="M428 135h5v5h-5zM413 340h10v5h-10z"/><path fill="#e4c036" d="M433 135h5v5h-5zM433 140h5v5h-5z"/><path fill="#e4c630" d="M423 140h10v5h-10z"/><path fill="#eaae30" d="M433 350h5v5h-5z"/><path fill="#eaba30" d="M423 345h5v5h-5z"/></g></g>
<g clip-path="url(#cs2)"><g filter="url(#sb)"><path fill="#1ecc60" d="M474 132h5v5h-5z"/><path fill="#1ecc66" d="M479 132h5v5h-5z"/><path fill="#1ecc6c" d="M474 127h5v5h-5z"/><path fill="#1ecc72" d="M479 127h5v5h-5z"/><path fill="#1ed25a" d="M479 137h5v5h-5z"/><path fill="#24cc5a" d="M469 132h5v5h-5z"/><path fill="#24cc66" d="M469 127h5v5h-5z"/><path fill="#24cc6c" d="M484 132h5v5h-5z"/><path fill="#24cc78" d="M474 122h5v5h-5zM484 127h5v5h-5z"/><path fill="#24cc7e" d="M479 122h5v5h-5z"/><path fill="#24cc84" d="M474 117h5v5h-5z"/><path fill="#24cc8a" d="M479 117h5v5h-5z"/><path fill="#24d254" d="M474 137h5v5h-5zM479 142h5v5h-5z"/><path fill="#24d25a" d="M484 142h5v5h-5z"/><path fill="#24d260" d="M484 137h5v5h-5z"/><path fill="#2ac6a8" d="M474 102h5v5h-5z"/><path fill="#2ac6ae" d="M479 102h5v5h-5z"/><path fill="#2ac6b4" d="M484 102h5v5h-5z"/><path fill="#2ac6ba" d="M479 97h10v5h-10z"/><path fill="#2ac6c0" d="M479 92h5v5h-5z"/><path fill="#2acc4e" d="M469 137h5v5h-5z"/><path fill="#2acc6c" d="M489 132h5v5h-5z"/><path fill="#2acc72" d="M469 122h5v5h-5z"/><path fill="#2acc78" d="M489 127h5v5h-5z"/><path fill="#2acc84" d="M469 117h5v5h-5zM484 122h5v5h-5z"/><path fill="#2acc90" d="M484 117h5v5h-5z"/><path fill="#2acc96" d="M474 112h10v5h-10z"/><path fill="#2acc9c" d="M484 112h5v5h-5z"/><path fill="#2acca2" d="M474 107h10v5h-10z"/><path fill="#2acca8" d="M484 107h5v5h-5z"/><path fill="#2accb4" d="M489 102h5v5h-5z"/><path fill="#2accba" d="M494 102h5v5h-5z"/><path fill="#2ad254" d="M484 147h5v5h-5z"/><path fill="#2ad25a" d="M489 142h10v5h-10z"/><path fill="#2ad260" d="M489 137h5v5h-5z"/><path fill="#2ad272" d="M509 347h5v5h-5zM509 352h5v5h-5z"/><path fill="#2ad278" d="M509 357h5v5h-5z"/><path fill="#2ad27e" d="M504 362h10v5h-10z"/><path fill="#2ad284" d="M509 367h5v5h-5z"/><path fill="#2ad854" d="M489 147h5v5h-5zM489 152h5v5h-5z"/><path fill="#2ad85a" d="M494 147h5v5h-5zM494 152h5v5h-5z"/><path fill="#30c6ae" d="M469 97h5v5h-5z"/><path fill="#30c6b4" d="M474 97h5v5h-5z"/><path fill="#30c6ba" d="M469 92h5v5h-5z"/><path fill="#30c6c0" d="M474 92h5v5h-5z"/><path fill="#30cc6c" d="M494 132h5v5h-5z"/><path fill="#30cc7e" d="M494 127h5v5h-5z"/><path fill="#30cc8a" d="M489 122h5v5h-5z"/><path fill="#30cc90" d="M469 112h5v5h-5z"/><path fill="#30cc96" d="M489 117h5v5h-5z"/><path fill="#30cc9c" d="M469 107h5v5h-5z"/><path fill="#30cca2" d="M469 102h5v5h-5zM489 112h10v5h-10z"/><path fill="#30ccae" d="M489 107h15v5h-15z"/><path fill="#30ccb4" d="M504 107h5v5h-5z"/><path fill="#30d24e" d="M474 142h5v5h-5zM479 147h5v5h-5zM484 152h5v5h-5z"/><path fill="#30d254" d="M489 157h5v5h-5zM494 332h10v5h-10z"/><path fill="#30d25a" d="M494 157h10v5h-10zM504 332h5v5h-5zM489 337h10v5h-10z"/><path fill="#30d260" d="M499 142h5v5h-5zM499 147h10v5h-10zM504 152h5v5h-5zM499 337h10v5h-10zM489 342h10v5h-10z"/><path fill="#30d266" d="M494 137h5v5h-5zM499 342h10v5h-10zM489 347h10v5h-10z"/><path fill="#30d26c" d="M509 342h5v5h-5zM499 347h10v5h-10zM489 352h10v5h-10zM489 357h5v5h-5z"/><path fill="#30d272" d="M499 352h10v5h-10zM494 357h5v5h-5zM489 362h5v5h-5z"/><path fill="#30d278" d="M499 357h10v5h-10zM494 362h10v5h-10z"/><path fill="#30d85a" d="M499 152h5v5h-5z"/><path fill="#36c6c0" d="M469 87h5v5h-5z"/><path fill="#36cc60" d="M479 347h5v5h-5zM479 352h5v5h-5z"/><path fill="#36cc66" d="M484 352h5v5h-5zM479 357h5v5h-5z"/><path fill="#36cc6c" d="M484 357h5v5h-5z"/><path fill="#36cc72" d="M499 132h10v5h-10zM484 362h5v5h-5z"/><path fill="#36cc7e" d="M464 117h5v5h-5zM499 127h10v5h-10z"/><path fill="#36cc8a" d="M464 112h5v5h-5zM494 122h10v5h-10z"/><path fill="#36cc90" d="M504 122h5v5h-5z"/><path fill="#36cc96" d="M464 107h5v5h-5zM494 117h5v5h-5z"/><path fill="#36cc9c" d="M499 117h10v5h-10z"/><path fill="#36cca2" d="M499 112h5v5h-5z"/><path fill="#36cca8" d="M504 112h5v5h-5z"/><path fill="#36d248" d="M494 322h5v5h-5zM484 327h10v5h-10z"/><path fill="#36d24e" d="M484 157h5v5h-5zM499 322h10v5h-10zM494 327h10v5h-10zM484 332h10v5h-10z"/><path fill="#36d254" d="M504 327h5v5h-5zM479 337h10v5h-10z"/><path fill="#36d25a" d="M494 162h10v5h-10zM479 342h10v5h-10z"/><path fill="#36d260" d="M464 127h5v5h-5zM504 157h5v5h-5zM484 347h5v5h-5z"/><path fill="#36d266" d="M499 137h5v5h-5zM504 142h5v5h-5z"/><path fill="#36d26c" d="M464 122h5v5h-5zM504 137h5v5h-5z"/><path fill="#3cc6a8" d="M464 97h5v5h-5z"/><path fill="#3cc6b4" d="M464 92h5v5h-5z"/><path fill="#3cc6ba" d="M464 87h5v5h-5z"/><path fill="#3ccc54" d="M489 162h5v5h-5z"/><path fill="#3ccc5a" d="M469 347h10v5h-10zM469 352h5v5h-5z"/><path fill="#3ccc60" d="M474 352h5v5h-5zM469 357h5v5h-5z"/><path fill="#3ccc66" d="M474 357h5v5h-5z"/><path fill="#3ccca2" d="M464 102h5v5h-5z"/><path fill="#3cd242" d="M464 247h10v5h-10zM464 252h5v5h-5zM494 317h5v5h-5zM484 322h10v5h-10z"/><path fill="#3cd248" d="M469 142h5v5h-5zM474 147h5v5h-5zM479 152h5v5h-5zM499 317h10v5h-10zM479 327h5v5h-5z"/><path fill="#3cd24e" d="M479 332h5v5h-5zM474 337h5v5h-5z"/><path fill="#3cd254" d="M464 132h5v5h-5zM474 342h5v5h-5z"/><path fill="#3cd260" d="M504 162h5v5h-5z"/><path fill="#3cd842" d="M469 252h5v5h-5z"/><path fill="#42cc3c" d="M459 247h5v5h-5z"/><path fill="#42cc42" d="M464 242h5v5h-5z"/><path fill="#42cc4e" d="M464 342h5v5h-5z"/><path fill="#42cc54" d="M469 342h5v5h-5zM464 347h5v5h-5z"/><path fill="#42cc5a" d="M464 352h5v5h-5zM459 357h5v5h-5z"/><path fill="#42cc60" d="M464 357h5v5h-5z"/><path fill="#42cc90" d="M459 107h5v5h-5z"/><path fill="#42cc96" d="M459 102h5v5h-5z"/><path fill="#42d23c" d="M484 317h5v5h-5z"/><path fill="#42d242" d="M469 242h5v5h-5zM459 252h5v5h-5zM489 317h5v5h-5zM479 322h5v5h-5z"/><path fill="#42d248" d="M474 327h5v5h-5zM474 332h5v5h-5z"/><path fill="#42d24e" d="M464 137h5v5h-5zM469 337h5v5h-5z"/><path fill="#42d842" d="M474 247h5v5h-5zM474 252h5v5h-5z"/><path fill="#48cc48" d="M479 157h5v5h-5z"/><path fill="#48cc4e" d="M484 162h5v5h-5zM459 342h5v5h-5z"/><path fill="#48cc54" d="M494 167h5v5h-5zM459 347h5v5h-5zM454 352h10v5h-10z"/><path fill="#48cc5a" d="M499 167h10v5h-10z"/><path fill="#48cc84" d="M459 112h5v5h-5z"/><path fill="#48d23c" d="M459 257h5v5h-5z"/><path fill="#48d242" d="M474 242h5v5h-5zM494 312h10v5h-10zM474 322h5v5h-5zM469 327h5v5h-5z"/><path fill="#48d248" d="M504 312h5v5h-5zM464 332h10v5h-10z"/><path fill="#48d24e" d="M464 337h5v5h-5z"/><path fill="#48d266" d="M459 122h5v5h-5z"/><path fill="#48d278" d="M459 117h5v5h-5z"/><path fill="#48d842" d="M464 257h10v5h-10z"/><path fill="#4ec64e" d="M489 167h5v5h-5z"/><path fill="#4ecc3c" d="M459 242h5v5h-5zM454 247h5v5h-5zM454 252h5v5h-5zM454 257h5v5h-5z"/><path fill="#4ecc42" d="M474 152h5v5h-5z"/><path fill="#4ecc48" d="M459 337h5v5h-5z"/><path fill="#4ecc4e" d="M454 342h5v5h-5zM454 347h5v5h-5z"/><path fill="#4ed23c" d="M484 312h10v5h-10zM479 317h5v5h-5z"/><path fill="#4ed242" d="M504 307h5v5h-5zM469 322h5v5h-5zM464 327h5v5h-5z"/><path fill="#4ed248" d="M459 332h5v5h-5z"/><path fill="#4ed25a" d="M459 127h5v5h-5z"/><path fill="#4ed83c" d="M464 262h5v5h-5z"/><path fill="#4ed842" d="M479 247h5v5h-5zM479 252h5v5h-5zM474 257h5v5h-5z"/><path fill="#54c048" d="M479 162h5v5h-5z"/><path fill="#54cc48" d="M454 332h5v5h-5zM454 337h5v5h-5z"/><path fill="#54d23c" d="M479 242h5v5h-5zM454 262h10v5h-10zM494 307h5v5h-5zM479 312h5v5h-5zM474 317h5v5h-5z"/><path fill="#54d242" d="M469 147h5v5h-5zM499 307h5v5h-5zM464 322h5v5h-5zM459 327h5v5h-5z"/><path fill="#54d842" d="M479 257h5v5h-5zM469 262h10v5h-10z"/><path fill="#5ac048" d="M484 167h5v5h-5z"/><path fill="#5ac04e" d="M494 172h5v5h-5z"/><path fill="#5ac63c" d="M464 237h5v5h-5zM454 242h5v5h-5z"/><path fill="#5ac642" d="M474 157h5v5h-5z"/><path fill="#5ac654" d="M499 172h10v5h-10z"/><path fill="#5acc3c" d="M469 237h5v5h-5z"/><path fill="#5ad23c" d="M459 267h5v5h-5zM489 307h5v5h-5zM474 312h5v5h-5zM464 317h10v5h-10z"/><path fill="#5ad242" d="M464 142h5v5h-5zM504 302h5v5h-5zM459 322h5v5h-5zM454 327h5v5h-5z"/><path fill="#5ad254" d="M459 132h5v5h-5z"/><path fill="#5ad272" d="M454 117h5v5h-5z"/><path fill="#5ad83c" d="M484 247h5v5h-5z"/><path fill="#5ad842" d="M484 252h5v5h-5zM484 257h5v5h-5zM479 262h5v5h-5z"/><path fill="#60c63c" d="M459 237h5v5h-5z"/><path fill="#60cc3c" d="M474 237h5v5h-5z"/><path fill="#60d23c" d="M484 242h5v5h-5zM454 267h5v5h-5zM494 302h5v5h-5zM484 307h5v5h-5zM469 312h5v5h-5zM459 317h5v5h-5z"/><path fill="#60d242" d="M499 302h5v5h-5zM454 322h5v5h-5z"/><path fill="#60d266" d="M454 122h5v5h-5z"/><path fill="#60d83c" d="M489 252h5v5h-5zM464 267h15v5h-15z"/><path fill="#60de3c" d="M484 262h5v5h-5z"/><path fill="#66ba4e" d="M489 172h5v5h-5z"/><path fill="#66cc3c" d="M479 237h5v5h-5z"/><path fill="#66d23c" d="M454 272h10v5h-10zM489 302h5v5h-5zM474 307h10v5h-10zM459 312h10v5h-10zM454 317h5v5h-5z"/><path fill="#66d83c" d="M489 247h5v5h-5zM479 267h5v5h-5z"/><path fill="#66d842" d="M499 297h10v5h-10z"/><path fill="#66de3c" d="M489 257h5v5h-5zM489 262h5v5h-5z"/><path fill="#6cb442" d="M474 162h5v5h-5zM479 167h5v5h-5z"/><path fill="#6cb448" d="M484 172h5v5h-5z"/><path fill="#6cc03c" d="M454 237h5v5h-5z"/><path fill="#6cc04e" d="M499 177h5v5h-5z"/><path fill="#6cc054" d="M504 177h5v5h-5z"/><path fill="#6cc63c" d="M469 152h5v5h-5z"/><path fill="#6cd23c" d="M489 242h5v5h-5zM484 302h5v5h-5zM464 307h10v5h-10zM454 312h5v5h-5z"/><path fill="#6cd25a" d="M454 127h5v5h-5z"/><path fill="#6cd83c" d="M494 252h5v5h-5zM464 272h10v5h-10zM494 297h5v5h-5z"/><path fill="#6cd842" d="M504 292h5v5h-5z"/><path fill="#6cd848" d="M459 137h5v5h-5z"/><path fill="#6cde3c" d="M494 257h5v5h-5zM494 262h5v5h-5zM484 267h10v5h-10z"/><path fill="#72ba4e" d="M494 177h5v5h-5z"/><path fill="#72c03c" d="M464 232h5v5h-5z"/><path fill="#72c63c" d="M469 232h5v5h-5z"/><path fill="#72cc3c" d="M484 237h5v5h-5z"/><path fill="#72d23c" d="M454 277h10v5h-10zM489 297h5v5h-5zM479 302h5v5h-5zM454 307h10v5h-10z"/><path fill="#72d83c" d="M494 247h5v5h-5zM499 252h5v5h-5zM499 257h5v5h-5zM474 272h10v5h-10zM464 277h5v5h-5zM499 292h5v5h-5z"/><path fill="#72d842" d="M504 282h5v5h-5zM504 287h5v5h-5z"/><path fill="#72de3c" d="M499 262h5v5h-5zM494 267h5v5h-5z"/><path fill="#72de42" d="M504 262h5v5h-5zM499 267h10v5h-10z"/><path fill="#78b448" d="M489 177h5v5h-5z"/><path fill="#78ba3c" d="M469 157h5v5h-5z"/><path fill="#78c03c" d="M459 232h5v5h-5z"/><path fill="#78c63c" d="M474 232h5v5h-5z"/><path fill="#78d236" d="M454 287h5v5h-5zM454 297h5v5h-5zM454 302h5v5h-5z"/><path fill="#78d23c" d="M464 147h5v5h-5zM494 242h5v5h-5zM454 282h10v5h-10zM484 297h5v5h-5zM459 302h20v5h-20z"/><path fill="#78d83c" d="M499 247h5v5h-5zM484 272h10v5h-10zM469 277h5v5h-5zM494 277h10v5h-10zM499 282h5v5h-5zM499 287h5v5h-5zM494 292h5v5h-5z"/><path fill="#78d842" d="M504 277h5v5h-5z"/><path fill="#78d84e" d="M454 132h5v5h-5z"/><path fill="#78de3c" d="M494 272h10v5h-10z"/><path fill="#78de42" d="M504 272h5v5h-5z"/><path fill="#7ea83c" d="M474 167h5v5h-5z"/><path fill="#7ea842" d="M479 172h5v5h-5z"/><path fill="#7eba36" d="M454 232h5v5h-5z"/><path fill="#7eba4e" d="M504 182h5v5h-5z"/><path fill="#7ec63c" d="M479 232h5v5h-5z"/><path fill="#7ecc3c" d="M489 237h5v5h-5z"/><path fill="#7ed236" d="M454 292h10v5h-10zM459 297h20v5h-20z"/><path fill="#7ed23c" d="M499 242h5v5h-5zM464 282h5v5h-5zM459 287h5v5h-5zM479 297h5v5h-5z"/><path fill="#7ed83c" d="M474 277h20v5h-20zM494 282h5v5h-5zM494 287h5v5h-5zM489 292h5v5h-5z"/><path fill="#84a83c" d="M469 162h5v5h-5z"/><path fill="#84a842" d="M484 177h5v5h-5z"/><path fill="#84b448" d="M499 182h5v5h-5z"/><path fill="#84cc3c" d="M494 237h5v5h-5z"/><path fill="#84d236" d="M464 292h5v5h-5z"/><path fill="#84d23c" d="M464 287h5v5h-5zM469 292h5v5h-5z"/><path fill="#84d83c" d="M459 142h5v5h-5zM469 282h5v5h-5zM484 282h10v5h-10zM489 287h5v5h-5zM484 292h5v5h-5z"/><path fill="#8aae48" d="M494 182h5v5h-5z"/><path fill="#8ac636" d="M464 152h5v5h-5zM484 232h5v5h-5z"/><path fill="#8acc3c" d="M499 237h5v5h-5z"/><path fill="#8ad23c" d="M474 292h5v5h-5z"/><path fill="#8ad83c" d="M474 282h10v5h-10zM469 287h10v5h-10zM484 287h5v5h-5zM479 292h5v5h-5z"/><path fill="#909c3c" d="M474 172h5v5h-5z"/><path fill="#90a23c" d="M479 177h5v5h-5z"/><path fill="#90a842" d="M489 182h5v5h-5z"/><path fill="#90ba36" d="M464 227h5v5h-5z"/><path fill="#90c036" d="M469 227h5v5h-5z"/><path fill="#90c636" d="M489 232h5v5h-5z"/><path fill="#90d83c" d="M479 287h5v5h-5z"/><path fill="#90d842" d="M454 137h5v5h-5z"/><path fill="#969c3c" d="M469 167h5v5h-5z"/><path fill="#96b436" d="M454 227h5v5h-5z"/><path fill="#96b448" d="M504 187h5v5h-5z"/><path fill="#96ba36" d="M459 227h5v5h-5z"/><path fill="#96c036" d="M474 227h5v5h-5z"/><path fill="#96c636" d="M494 232h5v5h-5z"/><path fill="#9ca242" d="M484 182h5v5h-5z"/><path fill="#9cae42" d="M499 187h5v5h-5z"/><path fill="#9cb436" d="M464 157h5v5h-5z"/><path fill="#9cc036" d="M479 227h5v5h-5z"/><path fill="#9cc636" d="M499 232h5v5h-5z"/><path fill="#a29036" d="M469 172h5v5h-5z"/><path fill="#a2963c" d="M474 177h5v5h-5z"/><path fill="#a29c36" d="M464 162h5v5h-5z"/><path fill="#a2a842" d="M494 187h5v5h-5z"/><path fill="#a2c036" d="M484 227h5v5h-5z"/><path fill="#a2d236" d="M459 147h5v5h-5z"/><path fill="#a89c3c" d="M479 182h5v5h-5z"/><path fill="#a8a23c" d="M489 187h5v5h-5z"/><path fill="#a8b442" d="M504 192h5v5h-5z"/><path fill="#a8c036" d="M489 227h10v5h-10z"/><path fill="#ae8a36" d="M464 167h5v5h-5z"/><path fill="#ae9c3c" d="M484 187h5v5h-5z"/><path fill="#aeae42" d="M499 192h5v5h-5z"/><path fill="#aeb436" d="M459 222h20v5h-20z"/><path fill="#aec036" d="M499 227h10v5h-10z"/><path fill="#aed83c" d="M454 142h5v5h-5z"/><path fill="#aed842" d="M449 137h5v5h-5z"/><path fill="#b48a36" d="M469 177h5v5h-5z"/><path fill="#b49036" d="M474 182h5v5h-5z"/><path fill="#b4a83c" d="M494 192h5v5h-5z"/><path fill="#b4ae36" d="M454 222h5v5h-5z"/><path fill="#b4ae3c" d="M504 197h5v5h-5z"/><path fill="#b4b430" d="M484 222h5v5h-5z"/><path fill="#b4b436" d="M479 222h5v5h-5z"/><path fill="#b4c036" d="M459 152h5v5h-5z"/><path fill="#ba7e36" d="M464 172h5v5h-5z"/><path fill="#ba9636" d="M479 187h5v5h-5z"/><path fill="#ba9c3c" d="M489 192h5v5h-5z"/><path fill="#baa830" d="M459 157h5v5h-5z"/><path fill="#bab430" d="M489 222h5v5h-5z"/><path fill="#baba30" d="M494 222h5v5h-5z"/><path fill="#baba36" d="M499 222h10v5h-10z"/><path fill="#c08436" d="M469 182h5v5h-5z"/><path fill="#c08a30" d="M459 162h5v5h-5z"/><path fill="#c09636" d="M484 192h5v5h-5z"/><path fill="#c0a83c" d="M499 197h5v5h-5z"/><path fill="#c0ae3c" d="M504 202h5v5h-5z"/><path fill="#c67830" d="M459 167h5v5h-5z"/><path fill="#c67836" d="M464 177h5v5h-5z"/><path fill="#c68a36" d="M474 187h5v5h-5z"/><path fill="#c69036" d="M479 192h5v5h-5z"/><path fill="#c6a236" d="M494 197h5v5h-5z"/><path fill="#c6ae30" d="M469 217h15v5h-15z"/><path fill="#c6ae36" d="M504 207h5v5h-5z"/><path fill="#c6ba36" d="M504 217h5v5h-5z"/><path fill="#c6d236" d="M449 142h5v5h-5zM454 147h5v5h-5z"/><path fill="#cc7230" d="M459 172h5v5h-5z"/><path fill="#cc9c36" d="M489 197h5v5h-5z"/><path fill="#cca230" d="M454 217h5v5h-5z"/><path fill="#cca830" d="M459 217h5v5h-5z"/><path fill="#cca836" d="M499 202h5v5h-5z"/><path fill="#ccae30" d="M464 217h5v5h-5zM484 217h15v5h-15z"/><path fill="#ccb436" d="M504 212h5v5h-5zM499 217h5v5h-5z"/><path fill="#d27830" d="M464 182h5v5h-5z"/><path fill="#d28436" d="M469 187h5v5h-5z"/><path fill="#d28a36" d="M474 192h5v5h-5z"/><path fill="#d29030" d="M479 197h5v5h-5z"/><path fill="#d29636" d="M484 197h5v5h-5z"/><path fill="#d2a236" d="M494 202h5v5h-5z"/><path fill="#d2a836" d="M499 207h5v5h-5z"/><path fill="#d2ae30" d="M499 212h5v5h-5z"/><path fill="#d2ba30" d="M454 152h5v5h-5z"/><path fill="#d86630" d="M454 167h5v5h-5z"/><path fill="#d86c30" d="M459 177h5v5h-5z"/><path fill="#d87e30" d="M454 162h5v5h-5z"/><path fill="#d88430" d="M469 192h5v5h-5z"/><path fill="#d88a30" d="M474 197h5v5h-5z"/><path fill="#d89630" d="M484 202h5v5h-5z"/><path fill="#d89c30" d="M454 157h5v5h-5zM489 202h5v5h-5z"/><path fill="#d8a230" d="M494 207h5v5h-5zM474 212h15v5h-15z"/><path fill="#d8a830" d="M489 212h10v5h-10z"/><path fill="#de6030" d="M454 172h5v5h-5z"/><path fill="#de6c30" d="M459 182h5v5h-5z"/><path fill="#de7e30" d="M464 187h5v5h-5z"/><path fill="#de9030" d="M474 202h10v5h-10z"/><path fill="#de9630" d="M474 207h10v5h-10z"/><path fill="#de9c30" d="M484 207h5v5h-5zM454 212h5v5h-5z"/><path fill="#dea230" d="M489 207h5v5h-5zM459 212h15v5h-15z"/><path fill="#dec630" d="M449 147h5v5h-5z"/><path fill="#e46030" d="M454 177h5v5h-5z"/><path fill="#e47230" d="M459 187h5v5h-5z"/><path fill="#e47e30" d="M464 192h5v5h-5z"/><path fill="#e48a30" d="M469 197h5v5h-5z"/><path fill="#e49030" d="M469 202h5v5h-5z"/><path fill="#e49630" d="M469 207h5v5h-5z"/><path fill="#ea602a" d="M449 167h5v5h-5z"/><path fill="#ea6630" d="M454 182h5v5h-5z"/><path fill="#ea782a" d="M449 162h5v5h-5z"/><path fill="#ea7830" d="M459 192h5v5h-5z"/><path fill="#ea8430" d="M464 197h5v5h-5z"/><path fill="#ea9030" d="M464 202h5v5h-5zM454 207h5v5h-5z"/><path fill="#ea962a" d="M449 157h5v5h-5z"/><path fill="#ea9630" d="M459 207h10v5h-10z"/><path fill="#eab430" d="M449 152h5v5h-5z"/><path fill="#f05a2a" d="M449 172h5v5h-5z"/><path fill="#f06c2a" d="M454 187h5v5h-5z"/><path fill="#f07e30" d="M459 197h5v5h-5z"/><path fill="#f0842a" d="M454 202h5v5h-5z"/><path fill="#f08a30" d="M459 202h5v5h-5z"/><path fill="#f65a2a" d="M449 177h5v5h-5z"/><path fill="#f6602a" d="M449 182h5v5h-5z"/><path fill="#f6722a" d="M454 192h5v5h-5z"/><path fill="#f6782a" d="M449 197h5v5h-5z"/><path fill="#f67e2a" d="M454 197h5v5h-5z"/><path fill="#fc5a2a" d="M444 172h5v5h-5z"/><path fill="#fc602a" d="M444 167h5v5h-5z"/><path fill="#fc662a" d="M449 187h5v5h-5z"/><path fill="#fc6c2a" d="M449 192h5v5h-5z"/><path fill="#fc782a" d="M444 162h5v5h-5z"/><path fill="#fc902a" d="M444 157h5v5h-5z"/></g></g>
<g clip-path="url(#cs3)"><g filter="url(#sb)"><path fill="#00cc90" d="M229 496h5v5h-5zM234 501h5v5h-5z"/><path fill="#06de48" d="M204 416h5v5h-5zM194 421h5v5h-5z"/><path fill="#0ccc8a" d="M234 496h5v5h-5z"/><path fill="#0ccc90" d="M239 501h5v5h-5z"/><path fill="#0cde48" d="M199 421h5v5h-5z"/><path fill="#0cde4e" d="M214 411h5v5h-5z"/><path fill="#12d284" d="M224 491h5v5h-5z"/><path fill="#12d85a" d="M224 406h5v5h-5z"/><path fill="#12de42" d="M184 426h10v5h-10z"/><path fill="#12de48" d="M209 416h5v5h-5z"/><path fill="#12de4e" d="M219 411h5v5h-5z"/><path fill="#18cc84" d="M229 491h5v5h-5z"/><path fill="#18d842" d="M204 421h5v5h-5z"/><path fill="#18d85a" d="M229 406h5v5h-5z"/><path fill="#18de48" d="M214 416h5v5h-5z"/><path fill="#1e6ce4" d="M489 476h5v5h-5z"/><path fill="#1e72e4" d="M484 481h5v5h-5z"/><path fill="#1ecc84" d="M244 501h5v5h-5z"/><path fill="#1ecc8a" d="M274 421h5v5h-5zM239 496h5v5h-5z"/><path fill="#1ecc90" d="M269 421h5v5h-5z"/><path fill="#1ecc96" d="M274 416h5v5h-5z"/><path fill="#1ed266" d="M234 406h5v5h-5z"/><path fill="#1ed272" d="M214 486h5v5h-5z"/><path fill="#1ed842" d="M194 426h5v5h-5z"/><path fill="#1ed854" d="M224 411h5v5h-5z"/><path fill="#246cde" d="M489 471h5v5h-5z"/><path fill="#246ce4" d="M484 476h5v5h-5z"/><path fill="#2472de" d="M479 476h5v5h-5zM479 481h5v5h-5z"/><path fill="#24cc7e" d="M269 426h10v5h-10z"/><path fill="#24cc84" d="M279 421h5v5h-5zM234 491h5v5h-5z"/><path fill="#24cc8a" d="M264 421h5v5h-5z"/><path fill="#24cc90" d="M279 416h5v5h-5z"/><path fill="#24cc96" d="M264 416h5v5h-5z"/><path fill="#24cc9c" d="M269 416h5v5h-5z"/><path fill="#24cca2" d="M269 411h10v5h-10z"/><path fill="#24d272" d="M239 401h5v5h-5zM219 486h5v5h-5z"/><path fill="#24d842" d="M209 421h5v5h-5zM199 426h5v5h-5z"/><path fill="#24d848" d="M219 416h5v5h-5z"/><path fill="#24d854" d="M229 411h5v5h-5z"/><path fill="#2a6cde" d="M484 471h5v5h-5z"/><path fill="#2a72d8" d="M479 471h5v5h-5z"/><path fill="#2a72de" d="M494 471h5v5h-5z"/><path fill="#2a78d2" d="M474 481h5v5h-5z"/><path fill="#2ac6a2" d="M339 491h5v5h-5z"/><path fill="#2ac6a8" d="M264 406h5v5h-5zM274 406h5v5h-5zM334 491h5v5h-5z"/><path fill="#2ac6ae" d="M269 406h5v5h-5z"/><path fill="#2acc7e" d="M264 426h5v5h-5z"/><path fill="#2acc84" d="M249 401h5v5h-5zM349 496h5v5h-5z"/><path fill="#2acc90" d="M254 396h5v5h-5zM259 416h5v5h-5zM349 491h5v5h-5zM344 496h5v5h-5z"/><path fill="#2acc96" d="M259 411h5v5h-5zM279 411h5v5h-5zM339 496h5v5h-5z"/><path fill="#2acc9c" d="M279 406h5v5h-5zM344 491h5v5h-5z"/><path fill="#2acca2" d="M264 411h5v5h-5zM344 486h5v5h-5z"/><path fill="#2accae" d="M339 486h5v5h-5z"/><path fill="#2ad24e" d="M299 371h5v5h-5z"/><path fill="#2ad25a" d="M234 411h5v5h-5z"/><path fill="#2ad26c" d="M239 406h5v5h-5z"/><path fill="#2ad278" d="M279 426h5v5h-5z"/><path fill="#2ad27e" d="M244 401h5v5h-5z"/><path fill="#2ad28a" d="M249 396h5v5h-5z"/><path fill="#2ad842" d="M184 431h5v5h-5z"/><path fill="#2ad84e" d="M224 416h5v5h-5z"/><path fill="#3072d2" d="M479 466h5v5h-5z"/><path fill="#3072d8" d="M484 466h10v5h-10z"/><path fill="#3078d2" d="M474 476h5v5h-5z"/><path fill="#30c648" d="M394 506h5v5h-5zM389 511h5v5h-5z"/><path fill="#30c6a8" d="M269 396h5v5h-5zM264 401h5v5h-5z"/><path fill="#30c6ae" d="M269 401h10v5h-10zM334 486h5v5h-5z"/><path fill="#30cc42" d="M389 491h5v5h-5z"/><path fill="#30cc48" d="M384 486h5v5h-5zM379 491h10v5h-10zM379 496h15v5h-15zM379 501h20v5h-20zM374 506h20v5h-20zM374 511h15v5h-15zM374 516h10v5h-10z"/><path fill="#30cc4e" d="M304 376h5v5h-5zM374 501h5v5h-5zM369 521h5v5h-5zM344 531h10v5h-10z"/><path fill="#30cc6c" d="M354 501h5v5h-5zM339 511h5v5h-5z"/><path fill="#30cc72" d="M244 411h5v5h-5zM344 506h5v5h-5z"/><path fill="#30cc78" d="M354 496h5v5h-5zM349 501h5v5h-5zM339 506h5v5h-5z"/><path fill="#30cc7e" d="M249 411h5v5h-5zM244 496h5v5h-5zM249 501h5v5h-5z"/><path fill="#30cc84" d="M249 406h5v5h-5zM254 416h5v5h-5zM284 416h5v5h-5zM259 421h5v5h-5zM334 501h5v5h-5zM344 501h5v5h-5z"/><path fill="#30cc8a" d="M274 386h5v5h-5zM284 401h5v5h-5zM284 406h5v5h-5zM254 411h5v5h-5zM284 411h5v5h-5zM339 501h5v5h-5z"/><path fill="#30cc90" d="M254 401h5v5h-5zM254 406h5v5h-5zM349 486h5v5h-5z"/><path fill="#30cc96" d="M334 496h5v5h-5z"/><path fill="#30cc9c" d="M264 391h10v5h-10zM259 396h5v5h-5zM259 401h5v5h-5zM279 401h5v5h-5zM259 406h5v5h-5z"/><path fill="#30cca2" d="M264 396h5v5h-5zM274 396h5v5h-5z"/><path fill="#30d242" d="M204 426h5v5h-5zM189 431h5v5h-5z"/><path fill="#30d248" d="M379 486h5v5h-5z"/><path fill="#30d24e" d="M309 366h5v5h-5zM304 371h5v5h-5zM294 376h10v5h-10zM229 416h5v5h-5zM374 491h5v5h-5zM374 496h5v5h-5zM329 521h5v5h-5zM334 526h5v5h-5z"/><path fill="#30d254" d="M374 486h5v5h-5zM369 496h5v5h-5zM369 501h5v5h-5zM334 521h5v5h-5zM339 526h5v5h-5z"/><path fill="#30d25a" d="M369 486h5v5h-5zM369 491h5v5h-5zM334 516h5v5h-5z"/><path fill="#30d260" d="M364 496h5v5h-5z"/><path fill="#30d266" d="M239 411h5v5h-5zM364 491h5v5h-5z"/><path fill="#30d26c" d="M359 496h5v5h-5z"/><path fill="#30d272" d="M269 431h10v5h-10zM224 486h5v5h-5zM359 491h5v5h-5z"/><path fill="#30d278" d="M244 406h5v5h-5zM284 421h5v5h-5z"/><path fill="#30d27e" d="M354 491h5v5h-5z"/><path fill="#30d284" d="M354 486h5v5h-5z"/><path fill="#30d842" d="M214 421h5v5h-5zM179 431h5v5h-5z"/><path fill="#3672cc" d="M484 461h5v5h-5z"/><path fill="#3672d2" d="M494 466h5v5h-5z"/><path fill="#3678cc" d="M499 466h5v5h-5zM474 471h5v5h-5z"/><path fill="#3684c0" d="M469 481h5v5h-5z"/><path fill="#36c648" d="M399 501h5v5h-5z"/><path fill="#36cc42" d="M389 486h5v5h-5zM394 491h5v5h-5zM394 496h5v5h-5z"/><path fill="#36cc48" d="M369 516h5v5h-5z"/><path fill="#36cc4e" d="M369 511h5v5h-5zM364 516h5v5h-5zM359 521h10v5h-10zM354 526h10v5h-10z"/><path fill="#36cc60" d="M329 511h5v5h-5z"/><path fill="#36cc66" d="M244 416h5v5h-5zM334 511h5v5h-5z"/><path fill="#36cc6c" d="M349 506h5v5h-5zM344 511h5v5h-5z"/><path fill="#36cc72" d="M284 386h5v5h-5zM289 396h5v5h-5zM249 416h5v5h-5zM334 506h5v5h-5z"/><path fill="#36cc78" d="M284 391h5v5h-5zM289 401h5v5h-5zM289 406h5v5h-5zM254 421h5v5h-5zM259 426h5v5h-5z"/><path fill="#36cc7e" d="M279 386h5v5h-5zM239 491h5v5h-5z"/><path fill="#36cc84" d="M284 396h5v5h-5z"/><path fill="#36cc8a" d="M279 391h5v5h-5z"/><path fill="#36cc96" d="M274 391h5v5h-5zM279 396h5v5h-5z"/><path fill="#36cc9c" d="M344 481h5v5h-5zM329 491h5v5h-5z"/><path fill="#36cca8" d="M339 481h5v5h-5z"/><path fill="#36d242" d="M384 481h5v5h-5z"/><path fill="#36d248" d="M379 481h5v5h-5zM324 521h5v5h-5z"/><path fill="#36d24e" d="M309 371h5v5h-5zM299 381h10v5h-10zM374 481h5v5h-5zM369 506h5v5h-5zM364 511h5v5h-5z"/><path fill="#36d254" d="M294 381h5v5h-5zM234 416h5v5h-5zM364 506h5v5h-5zM329 516h5v5h-5zM349 521h10v5h-10zM344 526h10v5h-10z"/><path fill="#36d25a" d="M289 381h5v5h-5zM369 481h5v5h-5zM364 501h5v5h-5zM359 506h5v5h-5zM349 516h5v5h-5zM339 521h10v5h-10z"/><path fill="#36d260" d="M239 416h5v5h-5zM359 501h5v5h-5zM354 511h5v5h-5zM339 516h10v5h-10z"/><path fill="#36d266" d="M284 381h5v5h-5zM364 486h5v5h-5zM354 506h5v5h-5zM349 511h5v5h-5z"/><path fill="#36d272" d="M359 486h5v5h-5z"/><path fill="#36d278" d="M289 411h5v5h-5z"/><path fill="#36d290" d="M349 481h5v5h-5z"/><path fill="#3c72cc" d="M479 461h5v5h-5zM474 466h5v5h-5z"/><path fill="#3c78cc" d="M489 461h5v5h-5z"/><path fill="#3c7ec0" d="M469 476h5v5h-5z"/><path fill="#3cc648" d="M404 501h5v5h-5z"/><path fill="#3ccc42" d="M194 431h5v5h-5zM389 481h5v5h-5zM394 486h5v5h-5z"/><path fill="#3ccc48" d="M399 496h5v5h-5z"/><path fill="#3ccc6c" d="M289 391h5v5h-5zM249 421h5v5h-5zM329 506h5v5h-5z"/><path fill="#3ccc72" d="M264 431h5v5h-5z"/><path fill="#3ccc7e" d="M329 501h5v5h-5z"/><path fill="#3ccc90" d="M329 496h5v5h-5z"/><path fill="#3ccca8" d="M334 481h5v5h-5zM329 486h5v5h-5z"/><path fill="#3cd242" d="M384 476h5v5h-5z"/><path fill="#3cd248" d="M314 366h5v5h-5zM379 476h5v5h-5z"/><path fill="#3cd24e" d="M309 376h5v5h-5zM299 386h10v5h-10zM324 516h5v5h-5z"/><path fill="#3cd254" d="M294 386h5v5h-5zM359 511h5v5h-5zM359 516h5v5h-5z"/><path fill="#3cd25a" d="M354 516h5v5h-5z"/><path fill="#3cd260" d="M289 386h5v5h-5zM294 391h5v5h-5zM294 396h5v5h-5z"/><path fill="#3cd266" d="M294 401h5v5h-5zM364 481h5v5h-5z"/><path fill="#3cd26c" d="M284 426h5v5h-5zM279 431h5v5h-5z"/><path fill="#3cd272" d="M289 416h5v5h-5zM359 481h5v5h-5zM229 486h5v5h-5z"/><path fill="#3cd27e" d="M354 481h5v5h-5z"/><path fill="#3cd848" d="M219 421h5v5h-5z"/><path fill="#4272c0" d="M479 456h5v5h-5z"/><path fill="#4272c6" d="M474 461h5v5h-5z"/><path fill="#4278c6" d="M494 461h5v5h-5z"/><path fill="#427ec0" d="M469 471h5v5h-5z"/><path fill="#428ab4" d="M464 481h5v5h-5z"/><path fill="#42cc3c" d="M174 431h5v5h-5z"/><path fill="#42cc42" d="M399 491h5v5h-5z"/><path fill="#42cc48" d="M404 496h5v5h-5z"/><path fill="#42cc60" d="M244 421h5v5h-5zM209 481h5v5h-5z"/><path fill="#42cc6c" d="M254 426h5v5h-5z"/><path fill="#42cc72" d="M254 501h5v5h-5z"/><path fill="#42cc78" d="M249 496h5v5h-5z"/><path fill="#42cca2" d="M329 481h5v5h-5z"/><path fill="#42d242" d="M209 426h5v5h-5zM389 476h5v5h-5zM394 481h5v5h-5z"/><path fill="#42d248" d="M314 371h5v5h-5z"/><path fill="#42d24e" d="M309 381h5v5h-5zM234 421h5v5h-5zM374 476h5v5h-5z"/><path fill="#42d254" d="M299 391h5v5h-5zM239 421h5v5h-5zM324 511h5v5h-5z"/><path fill="#42d266" d="M294 406h5v5h-5zM294 411h5v5h-5z"/><path fill="#42d26c" d="M289 421h5v5h-5z"/><path fill="#42d848" d="M224 421h5v5h-5z"/><path fill="#42d854" d="M369 476h5v5h-5z"/><path fill="#42d860" d="M364 476h5v5h-5z"/><path fill="#4878ba" d="M474 456h5v5h-5z"/><path fill="#4878c0" d="M484 456h5v5h-5z"/><path fill="#487eba" d="M489 456h5v5h-5zM469 466h5v5h-5z"/><path fill="#487ec0" d="M499 461h5v5h-5z"/><path fill="#48c648" d="M409 496h5v5h-5z"/><path fill="#48cc42" d="M199 431h5v5h-5zM399 486h5v5h-5zM404 491h5v5h-5z"/><path fill="#48cc6c" d="M259 431h5v5h-5zM324 501h5v5h-5z"/><path fill="#48cc78" d="M244 491h5v5h-5z"/><path fill="#48cc7e" d="M324 496h5v5h-5z"/><path fill="#48cc8a" d="M324 491h5v5h-5z"/><path fill="#48cc9c" d="M334 476h5v5h-5z"/><path fill="#48d242" d="M319 516h5v5h-5z"/><path fill="#48d248" d="M314 376h5v5h-5zM309 386h5v5h-5zM229 421h5v5h-5z"/><path fill="#48d24e" d="M304 391h5v5h-5z"/><path fill="#48d254" d="M299 396h5v5h-5zM299 401h5v5h-5z"/><path fill="#48d260" d="M294 416h5v5h-5zM274 436h5v5h-5zM214 481h5v5h-5zM324 506h5v5h-5z"/><path fill="#48d266" d="M269 436h5v5h-5z"/><path fill="#48d278" d="M234 486h5v5h-5z"/><path fill="#48d284" d="M349 476h5v5h-5z"/><path fill="#48d290" d="M344 476h5v5h-5z"/><path fill="#48d29c" d="M339 476h5v5h-5z"/><path fill="#48d848" d="M319 366h5v5h-5z"/><path fill="#48d86c" d="M359 476h5v5h-5z"/><path fill="#48d878" d="M354 476h5v5h-5z"/><path fill="#4e7eb4" d="M469 461h5v5h-5z"/><path fill="#4e84b4" d="M494 456h5v5h-5z"/><path fill="#4e8aae" d="M464 476h5v5h-5z"/><path fill="#4ec63c" d="M184 436h5v5h-5z"/><path fill="#4ecc60" d="M249 426h5v5h-5z"/><path fill="#4ecc90" d="M324 486h5v5h-5z"/><path fill="#4ed23c" d="M394 476h5v5h-5z"/><path fill="#4ed242" d="M379 471h10v5h-10z"/><path fill="#4ed248" d="M314 381h5v5h-5zM319 511h5v5h-5z"/><path fill="#4ed254" d="M299 406h5v5h-5z"/><path fill="#4ed260" d="M289 426h5v5h-5zM284 431h5v5h-5z"/><path fill="#4ed842" d="M214 426h5v5h-5z"/><path fill="#4ed848" d="M319 371h5v5h-5zM374 471h5v5h-5z"/><path fill="#5478ae" d="M474 451h5v5h-5z"/><path fill="#5478b4" d="M479 451h5v5h-5z"/><path fill="#547eae" d="M484 451h5v5h-5zM469 456h5v5h-5z"/><path fill="#548aa8" d="M464 471h5v5h-5z"/><path fill="#54c63c" d="M179 436h5v5h-5zM189 436h5v5h-5z"/><path fill="#54c64e" d="M414 496h5v5h-5z"/><path fill="#54cc3c" d="M204 431h5v5h-5z"/><path fill="#54cc42" d="M404 486h5v5h-5z"/><path fill="#54cc48" d="M409 491h5v5h-5z"/><path fill="#54cc60" d="M254 431h5v5h-5z"/><path fill="#54cc66" d="M259 501h5v5h-5z"/><path fill="#54cc6c" d="M254 496h5v5h-5z"/><path fill="#54cc72" d="M239 486h5v5h-5z"/><path fill="#54cc90" d="M324 481h5v5h-5z"/><path fill="#54cc96" d="M329 476h5v5h-5z"/><path fill="#54d23c" d="M389 471h5v5h-5zM399 481h5v5h-5zM314 516h5v5h-5z"/><path fill="#54d24e" d="M304 396h5v5h-5z"/><path fill="#54d254" d="M299 411h5v5h-5z"/><path fill="#54d25a" d="M294 421h5v5h-5zM244 426h5v5h-5z"/><path fill="#54d260" d="M264 436h5v5h-5zM279 436h5v5h-5z"/><path fill="#54d854" d="M369 471h5v5h-5z"/><path fill="#54d85a" d="M364 471h5v5h-5zM219 481h5v5h-5z"/><path fill="#54d866" d="M359 471h5v5h-5z"/><path fill="#5a84a8" d="M489 451h5v5h-5z"/><path fill="#5a8aa2" d="M464 466h5v5h-5z"/><path fill="#5a8aae" d="M499 456h5v5h-5z"/><path fill="#5acc48" d="M414 491h5v5h-5z"/><path fill="#5acc6c" d="M249 491h5v5h-5z"/><path fill="#5acc78" d="M319 491h5v5h-5z"/><path fill="#5ad248" d="M319 376h5v5h-5zM309 391h5v5h-5zM304 401h5v5h-5zM234 426h5v5h-5z"/><path fill="#5ad24e" d="M299 416h5v5h-5zM239 426h5v5h-5zM319 506h5v5h-5z"/><path fill="#5ad260" d="M259 436h5v5h-5zM319 501h5v5h-5z"/><path fill="#5ad26c" d="M319 496h5v5h-5z"/><path fill="#5ad28a" d="M339 471h5v5h-5z"/><path fill="#5ad842" d="M219 426h5v5h-5z"/><path fill="#5ad860" d="M224 481h5v5h-5z"/><path fill="#5ad86c" d="M354 471h5v5h-5z"/><path fill="#5ad878" d="M349 471h5v5h-5z"/><path fill="#5ad884" d="M344 471h5v5h-5z"/><path fill="#607ea2" d="M469 451h5v5h-5z"/><path fill="#608aa2" d="M464 461h5v5h-5z"/><path fill="#6090a8" d="M504 456h5v5h-5z"/><path fill="#609696" d="M459 476h5v5h-5z"/><path fill="#60ba3c" d="M169 431h5v5h-5z"/><path fill="#60c03c" d="M194 436h5v5h-5z"/><path fill="#60cc42" d="M409 486h5v5h-5z"/><path fill="#60cc54" d="M269 506h5v5h-5z"/><path fill="#60cc6c" d="M244 486h5v5h-5z"/><path fill="#60cc7e" d="M319 486h5v5h-5z"/><path fill="#60d23c" d="M209 431h5v5h-5zM394 471h5v5h-5zM399 476h5v5h-5zM314 511h5v5h-5z"/><path fill="#60d242" d="M404 481h5v5h-5z"/><path fill="#60d248" d="M314 386h5v5h-5zM304 406h5v5h-5z"/><path fill="#60d25a" d="M249 431h5v5h-5zM289 431h5v5h-5z"/><path fill="#60d260" d="M229 481h5v5h-5z"/><path fill="#60d28a" d="M334 471h5v5h-5zM324 476h5v5h-5z"/><path fill="#60d842" d="M224 426h10v5h-10zM374 466h10v5h-10z"/><path fill="#60d848" d="M324 371h5v5h-5z"/><path fill="#667e9c" d="M474 446h5v5h-5z"/><path fill="#66849c" d="M479 446h5v5h-5z"/><path fill="#668aa2" d="M494 451h5v5h-5z"/><path fill="#669690" d="M459 471h5v5h-5z"/><path fill="#66c64e" d="M419 491h5v5h-5z"/><path fill="#66cc5a" d="M264 501h5v5h-5z"/><path fill="#66cc60" d="M259 496h5v5h-5z"/><path fill="#66d23c" d="M384 466h5v5h-5z"/><path fill="#66d242" d="M304 411h5v5h-5z"/><path fill="#66d24e" d="M244 431h5v5h-5z"/><path fill="#66d254" d="M294 426h5v5h-5zM284 436h5v5h-5z"/><path fill="#66d25a" d="M254 436h5v5h-5z"/><path fill="#66d266" d="M234 481h5v5h-5z"/><path fill="#66d27e" d="M319 481h5v5h-5z"/><path fill="#66d284" d="M329 471h5v5h-5z"/><path fill="#66d842" d="M309 396h5v5h-5z"/><path fill="#66d848" d="M319 381h5v5h-5zM369 466h5v5h-5z"/><path fill="#66d854" d="M364 466h5v5h-5z"/><path fill="#6c8a96" d="M464 456h5v5h-5z"/><path fill="#6c8a9c" d="M484 446h5v5h-5z"/><path fill="#6c909c" d="M499 451h5v5h-5z"/><path fill="#6cba3c" d="M174 436h5v5h-5z"/><path fill="#6cc03c" d="M199 436h5v5h-5z"/><path fill="#6ccc48" d="M414 486h5v5h-5z"/><path fill="#6ccc4e" d="M274 506h5v5h-5z"/><path fill="#6ccc66" d="M254 491h5v5h-5z"/><path fill="#6cd236" d="M309 511h5v5h-5z"/><path fill="#6cd23c" d="M214 431h5v5h-5zM389 466h5v5h-5zM404 476h5v5h-5z"/><path fill="#6cd242" d="M409 481h5v5h-5zM314 506h5v5h-5z"/><path fill="#6cd24e" d="M299 421h5v5h-5z"/><path fill="#6cd254" d="M264 441h15v5h-15z"/><path fill="#6cd278" d="M319 476h5v5h-5z"/><path fill="#6cd842" d="M324 376h5v5h-5zM314 391h5v5h-5z"/><path fill="#6cd85a" d="M359 466h5v5h-5z"/><path fill="#6cd86c" d="M349 466h5v5h-5z"/><path fill="#6cd872" d="M344 466h5v5h-5z"/><path fill="#6cde42" d="M329 371h5v5h-5z"/><path fill="#6cde60" d="M354 466h5v5h-5z"/><path fill="#728496" d="M469 446h5v5h-5z"/><path fill="#728a90" d="M464 451h5v5h-5z"/><path fill="#729090" d="M489 446h5v5h-5z"/><path fill="#72968a" d="M459 466h5v5h-5z"/><path fill="#729696" d="M504 451h5v5h-5z"/><path fill="#72a884" d="M454 476h5v5h-5z"/><path fill="#72cc48" d="M419 486h5v5h-5z"/><path fill="#72cc54" d="M269 501h5v5h-5z"/><path fill="#72cc66" d="M249 486h5v5h-5z"/><path fill="#72d230" d="M304 511h5v5h-5z"/><path fill="#72d23c" d="M399 471h5v5h-5z"/><path fill="#72d242" d="M304 416h5v5h-5z"/><path fill="#72d248" d="M239 431h5v5h-5z"/><path fill="#72d24e" d="M249 436h5v5h-5zM314 501h5v5h-5z"/><path fill="#72d25a" d="M314 496h5v5h-5z"/><path fill="#72d260" d="M239 481h5v5h-5zM314 491h5v5h-5z"/><path fill="#72d266" d="M314 486h5v5h-5z"/><path fill="#72d278" d="M324 471h5v5h-5z"/><path fill="#72d83c" d="M394 466h5v5h-5z"/><path fill="#72d842" d="M319 386h5v5h-5zM309 401h5v5h-5z"/><path fill="#72d878" d="M339 466h5v5h-5z"/><path fill="#789684" d="M459 461h5v5h-5z"/><path fill="#78968a" d="M494 446h5v5h-5z"/><path fill="#789c8a" d="M509 451h5v5h-5z"/><path fill="#78c63c" d="M204 436h5v5h-5z"/><path fill="#78c64e" d="M424 486h5v5h-5z"/><path fill="#78c654" d="M429 486h5v5h-5z"/><path fill="#78cc48" d="M209 476h5v5h-5z"/><path fill="#78cc5a" d="M259 491h5v5h-5zM264 496h5v5h-5z"/><path fill="#78d236" d="M309 506h5v5h-5z"/><path fill="#78d242" d="M234 431h5v5h-5zM414 481h5v5h-5zM279 506h5v5h-5z"/><path fill="#78d24e" d="M294 431h5v5h-5zM289 436h5v5h-5zM279 441h5v5h-5z"/><path fill="#78d254" d="M259 441h5v5h-5z"/><path fill="#78d266" d="M314 481h5v5h-5z"/><path fill="#78d83c" d="M309 406h5v5h-5zM219 431h5v5h-5zM379 461h10v5h-10z"/><path fill="#78d842" d="M324 381h5v5h-5zM369 461h10v5h-10z"/><path fill="#78d878" d="M334 466h5v5h-5z"/><path fill="#78de42" d="M329 376h5v5h-5z"/><path fill="#7e9084" d="M474 441h10v5h-10z"/><path fill="#7e967e" d="M459 456h5v5h-5z"/><path fill="#7e9c84" d="M499 446h5v5h-5z"/><path fill="#7ea836" d="M164 431h5v5h-5z"/><path fill="#7ea87e" d="M454 471h5v5h-5z"/><path fill="#7eb43c" d="M184 441h5v5h-5z"/><path fill="#7ec648" d="M204 476h5v5h-5z"/><path fill="#7ecc42" d="M419 481h5v5h-5z"/><path fill="#7ecc5a" d="M254 486h5v5h-5z"/><path fill="#7ed230" d="M304 506h5v5h-5z"/><path fill="#7ed23c" d="M309 411h5v5h-5zM404 471h5v5h-5zM409 476h5v5h-5zM309 501h5v5h-5zM284 506h5v5h-5z"/><path fill="#7ed242" d="M304 421h5v5h-5z"/><path fill="#7ed248" d="M299 426h5v5h-5zM244 436h5v5h-5zM309 496h5v5h-5zM274 501h5v5h-5z"/><path fill="#7ed24e" d="M254 441h5v5h-5z"/><path fill="#7ed260" d="M314 476h5v5h-5zM244 481h5v5h-5z"/><path fill="#7ed26c" d="M319 471h5v5h-5z"/><path fill="#7ed836" d="M389 461h5v5h-5z"/><path fill="#7ed83c" d="M314 396h5v5h-5zM224 431h5v5h-5zM399 466h5v5h-5z"/><path fill="#7ed842" d="M229 431h5v5h-5z"/><path fill="#7ed848" d="M364 461h5v5h-5zM214 476h5v5h-5z"/><path fill="#7ed872" d="M329 466h5v5h-5z"/><path fill="#7ede4e" d="M359 461h5v5h-5z"/><path fill="#7ee442" d="M334 371h5v5h-5z"/><path fill="#849084" d="M464 446h5v5h-5z"/><path fill="#849c7e" d="M484 441h5v5h-5z"/><path fill="#84a27e" d="M504 446h5v5h-5z"/><path fill="#84b43c" d="M179 441h5v5h-5zM189 441h5v5h-5z"/><path fill="#84b46c" d="M449 476h5v5h-5z"/><path fill="#84cc3c" d="M209 436h5v5h-5z"/><path fill="#84cc4e" d="M269 496h5v5h-5z"/><path fill="#84cc5a" d="M249 481h5v5h-5z"/><path fill="#84d230" d="M294 506h10v5h-10z"/><path fill="#84d236" d="M289 506h5v5h-5z"/><path fill="#84d24e" d="M309 491h5v5h-5z"/><path fill="#84d254" d="M309 481h5v5h-5zM309 486h5v5h-5z"/><path fill="#84d83c" d="M319 391h5v5h-5z"/><path fill="#84d842" d="M324 386h5v5h-5z"/><path fill="#84d848" d="M219 476h5v5h-5z"/><path fill="#84d85a" d="M314 471h5v5h-5z"/><path fill="#84d86c" d="M324 466h5v5h-5z"/><path fill="#84de54" d="M354 461h5v5h-5z"/><path fill="#84de5a" d="M349 461h5v5h-5z"/><path fill="#84de60" d="M344 461h5v5h-5z"/><path fill="#8a907e" d="M469 441h5v5h-5z"/><path fill="#8a9678" d="M459 451h5v5h-5z"/><path fill="#8aa836" d="M169 436h5v5h-5z"/><path fill="#8aa872" d="M454 466h5v5h-5z"/><path fill="#8aa878" d="M509 446h5v5h-5z"/><path fill="#8aae36" d="M194 441h5v5h-5z"/><path fill="#8ac654" d="M434 481h5v5h-5z"/><path fill="#8acc48" d="M424 481h5v5h-5z"/><path fill="#8acc4e" d="M429 481h5v5h-5z"/><path fill="#8acc54" d="M264 491h5v5h-5z"/><path fill="#8ad236" d="M309 416h5v5h-5zM379 456h5v5h-5zM304 501h5v5h-5z"/><path fill="#8ad23c" d="M374 456h5v5h-5zM409 471h5v5h-5zM414 476h5v5h-5z"/><path fill="#8ad242" d="M239 436h5v5h-5zM279 501h5v5h-5z"/><path fill="#8ad248" d="M249 441h5v5h-5zM284 441h5v5h-5zM264 446h10v5h-10z"/><path fill="#8ad254" d="M234 476h5v5h-5z"/><path fill="#8ad836" d="M394 461h5v5h-5z"/><path fill="#8ad83c" d="M314 401h5v5h-5z"/><path fill="#8ad842" d="M329 381h5v5h-5z"/><path fill="#8ad848" d="M224 476h5v5h-5z"/><path fill="#8ad84e" d="M229 476h5v5h-5z"/><path fill="#8ad854" d="M309 476h5v5h-5z"/><path fill="#8ad860" d="M319 466h5v5h-5z"/><path fill="#8ad866" d="M334 461h10v5h-10z"/><path fill="#8ade3c" d="M334 376h5v5h-5z"/><path fill="#909636" d="M159 431h5v5h-5z"/><path fill="#90a278" d="M489 441h5v5h-5z"/><path fill="#90a86c" d="M454 461h5v5h-5z"/><path fill="#90ae72" d="M514 446h5v5h-5z"/><path fill="#90b466" d="M449 471h5v5h-5z"/><path fill="#90c060" d="M444 476h5v5h-5z"/><path fill="#90cc54" d="M254 481h5v5h-5zM259 486h5v5h-5z"/><path fill="#90d236" d="M214 436h5v5h-5zM384 456h5v5h-5zM289 501h15v5h-15z"/><path fill="#90d23c" d="M369 456h5v5h-5zM304 496h5v5h-5zM284 501h5v5h-5z"/><path fill="#90d242" d="M299 431h5v5h-5zM274 446h5v5h-5zM419 476h5v5h-5zM304 491h5v5h-5z"/><path fill="#90d248" d="M294 436h5v5h-5zM259 446h5v5h-5zM274 496h5v5h-5z"/><path fill="#90d254" d="M239 476h5v5h-5z"/><path fill="#90d836" d="M389 456h5v5h-5zM399 461h5v5h-5z"/><path fill="#90d83c" d="M364 456h5v5h-5zM404 466h5v5h-5z"/><path fill="#90d84e" d="M309 471h5v5h-5z"/><path fill="#90d866" d="M329 461h5v5h-5z"/><path fill="#96a836" d="M174 441h5v5h-5z"/><path fill="#96a866" d="M454 456h5v5h-5z"/><path fill="#96a872" d="M494 441h5v5h-5z"/><path fill="#96ae6c" d="M499 441h5v5h-5z"/><path fill="#96b436" d="M199 441h5v5h-5z"/><path fill="#96c654" d="M439 476h5v5h-5z"/><path fill="#96cc48" d="M269 491h5v5h-5z"/><path fill="#96d236" d="M299 496h5v5h-5z"/><path fill="#96d23c" d="M304 426h5v5h-5zM414 471h5v5h-5z"/><path fill="#96d242" d="M244 441h5v5h-5zM289 441h5v5h-5zM254 446h5v5h-5zM424 476h5v5h-5z"/><path fill="#96d248" d="M304 486h5v5h-5z"/><path fill="#96d254" d="M244 476h5v5h-5z"/><path fill="#96d836" d="M314 406h5v5h-5zM219 436h5v5h-5z"/><path fill="#96d83c" d="M329 386h5v5h-5zM319 396h5v5h-5zM234 436h5v5h-5z"/><path fill="#96d842" d="M359 456h5v5h-5z"/><path fill="#96d848" d="M304 481h5v5h-5z"/><path fill="#96d854" d="M314 466h5v5h-5z"/><path fill="#96d860" d="M324 461h5v5h-5z"/><path fill="#96de3c" d="M334 381h5v5h-5z"/><path fill="#96de42" d="M354 456h5v5h-5z"/><path fill="#96e43c" d="M339 376h5v5h-5z"/><path fill="#9c966c" d="M464 441h5v5h-5z"/><path fill="#9c9c6c" d="M459 446h5v5h-5z"/><path fill="#9ca26c" d="M474 436h5v5h-5z"/><path fill="#9cae66" d="M504 441h5v5h-5z"/><path fill="#9cba5a" d="M449 466h5v5h-5z"/><path fill="#9ccc42" d="M429 476h5v5h-5z"/><path fill="#9ccc48" d="M434 476h5v5h-5z"/><path fill="#9ccc4e" d="M264 486h5v5h-5z"/><path fill="#9cd236" d="M314 411h5v5h-5zM309 421h5v5h-5zM294 496h5v5h-5z"/><path fill="#9cd23c" d="M299 491h5v5h-5zM284 496h5v5h-5z"/><path fill="#9cd242" d="M279 446h5v5h-5zM279 496h5v5h-5z"/><path fill="#9cd24e" d="M249 476h5v5h-5z"/><path fill="#9cd836" d="M224 436h5v5h-5zM394 456h5v5h-5zM404 461h5v5h-5z"/><path fill="#9cd83c" d="M324 391h5v5h-5zM229 436h5v5h-5zM409 466h5v5h-5z"/><path fill="#9cd842" d="M304 476h5v5h-5z"/><path fill="#9cd848" d="M309 466h5v5h-5z"/><path fill="#9cd854" d="M319 461h5v5h-5z"/><path fill="#9cde48" d="M349 456h5v5h-5z"/><path fill="#9cde4e" d="M344 456h5v5h-5z"/><path fill="#a28430" d="M154 431h5v5h-5z"/><path fill="#a29636" d="M164 436h5v5h-5z"/><path fill="#a2a860" d="M454 451h5v5h-5z"/><path fill="#a2a866" d="M479 436h5v5h-5z"/><path fill="#a2b460" d="M509 441h5v5h-5z"/><path fill="#a2ba36" d="M204 441h5v5h-5z"/><path fill="#a2c054" d="M444 471h5v5h-5z"/><path fill="#a2cc36" d="M369 451h10v5h-10z"/><path fill="#a2cc4e" d="M259 481h5v5h-5z"/><path fill="#a2d236" d="M364 451h5v5h-5zM379 451h10v5h-10zM289 496h5v5h-5z"/><path fill="#a2d23c" d="M239 441h5v5h-5zM419 471h5v5h-5zM299 486h5v5h-5z"/><path fill="#a2d242" d="M299 436h5v5h-5zM294 441h5v5h-5zM249 446h5v5h-5zM259 451h10v5h-10zM274 491h5v5h-5z"/><path fill="#a2d248" d="M254 476h5v5h-5z"/><path fill="#a2d836" d="M399 456h5v5h-5zM414 466h5v5h-5z"/><path fill="#a2d83c" d="M334 386h5v5h-5zM304 471h5v5h-5z"/><path fill="#a2d848" d="M314 461h5v5h-5z"/><path fill="#a2d854" d="M334 456h10v5h-10z"/><path fill="#a2de3c" d="M339 381h5v5h-5z"/><path fill="#a2ea3c" d="M344 376h5v5h-5z"/><path fill="#a8a236" d="M184 446h10v5h-10z"/><path fill="#a8a266" d="M469 436h5v5h-5z"/><path fill="#a8ae60" d="M484 436h5v5h-5z"/><path fill="#a8b45a" d="M489 436h5v5h-5z"/><path fill="#a8ba3c" d="M199 471h5v5h-5z"/><path fill="#a8ba54" d="M449 461h5v5h-5z"/><path fill="#a8ba5a" d="M514 441h5v5h-5z"/><path fill="#a8c03c" d="M204 471h5v5h-5z"/><path fill="#a8c054" d="M519 441h5v5h-5z"/><path fill="#a8cc36" d="M209 441h5v5h-5zM209 471h5v5h-5z"/><path fill="#a8cc48" d="M439 471h5v5h-5z"/><path fill="#a8d230" d="M314 416h5v5h-5z"/><path fill="#a8d236" d="M359 451h5v5h-5zM389 451h5v5h-5zM294 491h5v5h-5z"/><path fill="#a8d23c" d="M329 391h5v5h-5zM304 431h5v5h-5zM244 446h5v5h-5zM284 446h5v5h-5zM254 451h5v5h-5zM269 451h5v5h-5zM424 471h5v5h-5zM279 491h5v5h-5z"/><path fill="#a8d242" d="M234 471h5v5h-5z"/><path fill="#a8d248" d="M239 471h10v5h-10zM269 486h5v5h-5z"/><path fill="#a8d836" d="M319 401h5v5h-5zM394 451h5v5h-5zM404 456h5v5h-5zM409 461h5v5h-5z"/><path fill="#a8d83c" d="M304 466h5v5h-5zM299 481h5v5h-5z"/><path fill="#a8d842" d="M309 461h5v5h-5z"/><path fill="#a8d84e" d="M324 456h5v5h-5z"/><path fill="#a8d854" d="M329 456h5v5h-5z"/><path fill="#a8e436" d="M344 381h5v5h-5z"/><path fill="#a8ea36" d="M349 376h5v5h-5z"/><path fill="#ae7830" d="M149 431h5v5h-5z"/><path fill="#aea236" d="M179 446h5v5h-5z"/><path fill="#aea25a" d="M459 441h5v5h-5z"/><path fill="#aea85a" d="M454 446h5v5h-5z"/><path fill="#aeb43c" d="M194 471h5v5h-5z"/><path fill="#aeba54" d="M499 436h5v5h-5z"/><path fill="#aeba5a" d="M494 436h5v5h-5z"/><path fill="#aec648" d="M444 466h5v5h-5z"/><path fill="#aecc42" d="M434 471h5v5h-5z"/><path fill="#aed236" d="M309 426h5v5h-5zM419 466h5v5h-5zM214 471h5v5h-5zM294 486h5v5h-5zM284 491h10v5h-10z"/><path fill="#aed23c" d="M299 441h5v5h-5zM289 446h5v5h-5zM249 451h5v5h-5zM274 451h5v5h-5zM429 471h5v5h-5z"/><path fill="#aed248" d="M249 471h5v5h-5zM259 476h5v5h-5zM264 481h5v5h-5z"/><path fill="#aed836" d="M324 396h5v5h-5zM234 441h5v5h-5zM354 451h5v5h-5zM399 451h5v5h-5zM414 461h5v5h-5zM299 471h5v5h-5z"/><path fill="#aed83c" d="M339 386h5v5h-5zM349 451h5v5h-5zM224 471h10v5h-10zM299 476h5v5h-5z"/><path fill="#aed848" d="M319 456h5v5h-5z"/><path fill="#b48430" d="M159 436h5v5h-5z"/><path fill="#b49036" d="M169 441h5v5h-5z"/><path fill="#b4a236" d="M194 446h5v5h-5z"/><path fill="#b4a85a" d="M464 436h5v5h-5z"/><path fill="#b4b44e" d="M449 451h5v5h-5z"/><path fill="#b4ba4e" d="M449 456h5v5h-5z"/><path fill="#b4ba54" d="M504 436h5v5h-5z"/><path fill="#b4c04e" d="M509 436h5v5h-5z"/><path fill="#b4c630" d="M364 446h20v5h-20z"/><path fill="#b4cc30" d="M384 446h5v5h-5z"/><path fill="#b4d230" d="M314 421h5v5h-5zM389 446h5v5h-5z"/><path fill="#b4d236" d="M334 391h5v5h-5zM214 441h5v5h-5zM239 446h5v5h-5zM424 466h5v5h-5zM294 481h5v5h-5zM289 486h5v5h-5z"/><path fill="#b4d23c" d="M304 436h5v5h-5zM254 456h15v5h-15zM274 486h5v5h-5z"/><path fill="#b4d242" d="M254 471h5v5h-5zM269 481h5v5h-5z"/><path fill="#b4d830" d="M299 466h5v5h-5z"/><path fill="#b4d836" d="M344 386h5v5h-5zM319 406h5v5h-5zM229 441h5v5h-5zM404 451h5v5h-5zM409 456h5v5h-5zM304 461h5v5h-5zM219 471h5v5h-5z"/><path fill="#b4d842" d="M344 451h5v5h-5zM314 456h5v5h-5z"/><path fill="#b4d848" d="M339 451h5v5h-5z"/><path fill="#b4e436" d="M349 381h5v5h-5z"/><path fill="#ba7230" d="M144 431h5v5h-5z"/><path fill="#baa236" d="M199 446h5v5h-5z"/><path fill="#baae4e" d="M469 431h10v5h-10z"/><path fill="#baba4e" d="M479 431h5v5h-5z"/><path fill="#bac630" d="M359 446h5v5h-5z"/><path fill="#bac642" d="M519 436h5v5h-5z"/><path fill="#bac648" d="M514 436h5v5h-5z"/><path fill="#bad230" d="M319 411h5v5h-5zM394 446h5v5h-5z"/><path fill="#bad236" d="M339 391h5v5h-5zM329 396h5v5h-5zM309 431h5v5h-5zM244 451h5v5h-5zM279 451h5v5h-5zM249 456h5v5h-5zM269 456h5v5h-5zM419 461h5v5h-5zM429 466h5v5h-5zM294 476h5v5h-5zM284 486h5v5h-5z"/><path fill="#bad23c" d="M294 446h5v5h-5zM254 461h5v5h-5zM239 466h20v5h-20zM439 466h5v5h-5zM279 486h5v5h-5z"/><path fill="#bad242" d="M259 471h5v5h-5zM264 476h5v5h-5z"/><path fill="#bad248" d="M329 451h10v5h-10z"/><path fill="#bad836" d="M219 441h10v5h-10zM409 451h5v5h-5zM304 456h5v5h-5zM414 456h5v5h-5z"/><path fill="#bad83c" d="M309 456h5v5h-5z"/><path fill="#bade36" d="M349 386h5v5h-5z"/><path fill="#baea36" d="M354 381h5v5h-5z"/><path fill="#c0662a" d="M139 431h5v5h-5z"/><path fill="#c09636" d="M174 446h5v5h-5z"/><path fill="#c0ae4e" d="M454 441h5v5h-5z"/><path fill="#c0b430" d="M369 441h5v5h-5zM204 446h5v5h-5z"/><path fill="#c0b448" d="M449 446h5v5h-5z"/><path fill="#c0ba30" d="M374 441h5v5h-5z"/><path fill="#c0c030" d="M379 441h5v5h-5z"/><path fill="#c0c048" d="M484 431h5v5h-5z"/><path fill="#c0cc30" d="M349 446h10v5h-10z"/><path fill="#c0cc36" d="M344 391h5v5h-5z"/><path fill="#c0cc3c" d="M444 461h5v5h-5z"/><path fill="#c0cc42" d="M524 436h5v5h-5z"/><path fill="#c0d236" d="M324 401h5v5h-5zM304 441h5v5h-5zM299 446h10v5h-10zM399 446h10v5h-10zM284 451h5v5h-5zM414 451h5v5h-5zM244 456h5v5h-5zM419 456h5v5h-5zM244 461h5v5h-5zM264 461h5v5h-5zM424 461h5v5h-5zM234 466h5v5h-5zM434 466h5v5h-5zM289 481h5v5h-5z"/><path fill="#c0d23c" d="M249 461h5v5h-5zM259 461h5v5h-5zM259 466h5v5h-5zM264 471h5v5h-5zM269 476h5v5h-5zM274 481h5v5h-5z"/><path fill="#c0d830" d="M299 461h5v5h-5zM294 471h5v5h-5z"/><path fill="#c0d836" d="M234 446h5v5h-5zM304 451h5v5h-5z"/><path fill="#c0d83c" d="M309 451h10v5h-10z"/><path fill="#c0d842" d="M319 451h5v5h-5z"/><path fill="#c0d848" d="M324 451h5v5h-5z"/><path fill="#c0de36" d="M354 386h5v5h-5z"/><path fill="#c0ea36" d="M359 381h5v5h-5z"/><path fill="#c67830" d="M154 436h5v5h-5z"/><path fill="#c69c30" d="M184 451h5v5h-5z"/><path fill="#c6ae48" d="M464 431h5v5h-5zM459 436h5v5h-5z"/><path fill="#c6b42a" d="M364 441h5v5h-5z"/><path fill="#c6b436" d="M199 466h5v5h-5z"/><path fill="#c6ba2a" d="M359 441h5v5h-5z"/><path fill="#c6ba30" d="M204 466h5v5h-5z"/><path fill="#c6c630" d="M384 441h5v5h-5zM209 446h5v5h-5z"/><path fill="#c6c642" d="M489 431h20v5h-20z"/><path fill="#c6cc30" d="M319 416h5v5h-5zM389 441h10v5h-10z"/><path fill="#c6cc36" d="M349 391h5v5h-5zM334 396h5v5h-5zM344 446h5v5h-5zM444 456h5v5h-5z"/><path fill="#c6cc3c" d="M509 431h5v5h-5zM339 446h5v5h-5z"/><path fill="#c6d230" d="M314 426h5v5h-5zM399 441h5v5h-5zM414 446h5v5h-5zM299 456h5v5h-5zM289 476h5v5h-5z"/><path fill="#c6d236" d="M309 436h5v5h-5zM309 446h5v5h-5zM409 446h5v5h-5zM239 451h5v5h-5zM289 451h15v5h-15zM419 451h5v5h-5zM274 456h5v5h-5zM424 456h5v5h-5zM239 461h5v5h-5zM269 461h5v5h-5zM429 461h5v5h-5zM264 466h5v5h-5zM279 481h10v5h-10z"/><path fill="#c6d830" d="M229 446h5v5h-5zM294 466h5v5h-5z"/><path fill="#c6d836" d="M229 466h5v5h-5z"/><path fill="#c6e436" d="M359 386h5v5h-5z"/><path fill="#c6ea30" d="M369 381h5v5h-5z"/><path fill="#c6f030" d="M364 381h5v5h-5z"/><path fill="#cc542a" d="M129 431h5v5h-5z"/><path fill="#cc602a" d="M134 431h5v5h-5z"/><path fill="#cc6c30" d="M149 436h5v5h-5z"/><path fill="#cc8430" d="M164 441h5v5h-5z"/><path fill="#cc9630" d="M179 451h5v5h-5zM189 451h5v5h-5z"/><path fill="#cca22a" d="M364 436h5v5h-5z"/><path fill="#cca82a" d="M369 436h10v5h-10z"/><path fill="#ccae36" d="M189 466h10v5h-10z"/><path fill="#ccb430" d="M379 436h5v5h-5z"/><path fill="#ccb442" d="M459 431h5v5h-5zM454 436h5v5h-5z"/><path fill="#ccba2a" d="M354 441h5v5h-5z"/><path fill="#ccba3c" d="M469 426h5v5h-5z"/><path fill="#ccba42" d="M449 441h5v5h-5z"/><path fill="#ccc030" d="M349 441h5v5h-5z"/><path fill="#ccc036" d="M344 396h10v5h-10z"/><path fill="#ccc03c" d="M474 426h5v5h-5zM444 446h5v5h-5z"/><path fill="#ccc630" d="M209 466h5v5h-5z"/><path fill="#ccc636" d="M339 396h5v5h-5z"/><path fill="#ccc63c" d="M444 451h5v5h-5z"/><path fill="#cccc2a" d="M319 421h5v5h-5z"/><path fill="#cccc36" d="M329 401h5v5h-5zM514 431h5v5h-5z"/><path fill="#ccd230" d="M324 406h5v5h-5zM519 431h10v5h-10zM404 441h10v5h-10zM214 446h5v5h-5zM419 446h5v5h-5zM424 451h5v5h-5zM239 456h5v5h-5zM279 456h5v5h-5zM294 456h5v5h-5zM429 456h5v5h-5zM234 461h5v5h-5zM294 461h5v5h-5zM434 461h10v5h-10zM289 471h5v5h-5z"/><path fill="#ccd236" d="M354 391h5v5h-5zM309 441h5v5h-5zM314 446h5v5h-5zM269 466h5v5h-5zM269 471h5v5h-5zM274 476h5v5h-5z"/><path fill="#ccd23c" d="M319 446h20v5h-20z"/><path fill="#ccd830" d="M359 391h5v5h-5zM224 446h5v5h-5zM234 451h5v5h-5zM224 466h5v5h-5z"/><path fill="#cce430" d="M374 381h5v5h-5z"/><path fill="#ccea30" d="M364 386h10v5h-10z"/><path fill="#d26630" d="M144 436h5v5h-5z"/><path fill="#d29030" d="M194 451h5v5h-5z"/><path fill="#d2a22a" d="M359 436h5v5h-5z"/><path fill="#d2a82a" d="M354 436h5v5h-5z"/><path fill="#d2ae36" d="M344 401h5v5h-5z"/><path fill="#d2b43c" d="M464 426h5v5h-5z"/><path fill="#d2ba36" d="M339 401h5v5h-5z"/><path fill="#d2ba3c" d="M459 426h5v5h-5zM454 431h5v5h-5zM449 436h5v5h-5z"/><path fill="#d2c030" d="M354 396h5v5h-5zM384 436h5v5h-5zM344 441h5v5h-5z"/><path fill="#d2c036" d="M334 401h5v5h-5zM444 441h5v5h-5z"/><path fill="#d2c630" d="M389 381h5v5h-5zM359 396h5v5h-5zM389 436h10v5h-10zM339 441h5v5h-5z"/><path fill="#d2c636" d="M479 426h5v5h-5z"/><path fill="#d2cc30" d="M324 411h5v5h-5zM399 436h20v5h-20zM439 451h5v5h-5z"/><path fill="#d2d22a" d="M214 466h5v5h-5zM289 466h5v5h-5z"/><path fill="#d2d230" d="M384 381h5v5h-5zM314 431h5v5h-5zM414 441h15v5h-15zM424 446h10v5h-10zM429 451h5v5h-5zM234 456h5v5h-5zM284 456h10v5h-10zM434 456h10v5h-10zM274 461h10v5h-10zM289 461h5v5h-5zM274 466h5v5h-5zM279 471h10v5h-10zM284 476h5v5h-5z"/><path fill="#d2d236" d="M314 441h5v5h-5zM274 471h5v5h-5zM279 476h5v5h-5z"/><path fill="#d2d82a" d="M529 431h5v5h-5zM219 466h5v5h-5z"/><path fill="#d2d830" d="M379 386h5v5h-5zM219 446h5v5h-5z"/><path fill="#d2de30" d="M379 381h5v5h-5zM364 391h10v5h-10z"/><path fill="#d2e430" d="M374 386h5v5h-5z"/><path fill="#d85a2a" d="M139 436h5v5h-5z"/><path fill="#d87230" d="M159 441h5v5h-5z"/><path fill="#d88430" d="M169 446h5v5h-5z"/><path fill="#d8902a" d="M359 431h15v5h-15z"/><path fill="#d89030" d="M359 406h5v5h-5z"/><path fill="#d8962a" d="M354 431h5v5h-5z"/><path fill="#d89630" d="M349 406h10v5h-10zM199 451h5v5h-5z"/><path fill="#d89c2a" d="M374 431h5v5h-5z"/><path fill="#d89c30" d="M404 386h5v5h-5zM344 406h5v5h-5zM184 456h10v5h-10z"/><path fill="#d8a230" d="M399 386h5v5h-5zM379 431h5v5h-5z"/><path fill="#d8a830" d="M429 396h5v5h-5zM354 401h10v5h-10zM424 401h5v5h-5zM339 406h5v5h-5zM204 451h5v5h-5zM189 461h10v5h-10z"/><path fill="#d8ae2a" d="M349 436h5v5h-5z"/><path fill="#d8ae30" d="M394 386h5v5h-5zM434 396h5v5h-5zM349 401h5v5h-5zM364 401h5v5h-5zM429 401h5v5h-5zM424 406h5v5h-5zM384 431h5v5h-5z"/><path fill="#d8b42a" d="M344 436h5v5h-5z"/><path fill="#d8b430" d="M434 401h10v5h-10zM429 406h10v5h-10zM424 411h5v5h-5z"/><path fill="#d8ba30" d="M389 386h5v5h-5zM444 401h5v5h-5zM439 406h20v5h-20zM429 411h35v5h-35zM444 416h5v5h-5zM459 416h5v5h-5zM389 431h5v5h-5z"/><path fill="#d8ba36" d="M449 416h10v5h-10zM449 421h20v5h-20zM449 426h10v5h-10zM449 431h5v5h-5z"/><path fill="#d8c030" d="M384 391h5v5h-5zM424 416h20v5h-20zM424 421h25v5h-25zM469 421h5v5h-5zM394 431h5v5h-5zM444 431h5v5h-5z"/><path fill="#d8c036" d="M444 436h5v5h-5z"/><path fill="#d8c62a" d="M324 416h5v5h-5z"/><path fill="#d8c630" d="M384 386h5v5h-5zM374 396h5v5h-5zM329 406h5v5h-5zM419 426h10v5h-10zM399 431h20v5h-20zM439 436h5v5h-5zM439 441h5v5h-5z"/><path fill="#d8c636" d="M334 441h5v5h-5z"/><path fill="#d8cc30" d="M379 391h5v5h-5zM364 396h10v5h-10zM319 426h5v5h-5zM484 426h5v5h-5zM419 431h15v5h-15zM419 436h20v5h-20zM429 441h10v5h-10zM434 446h10v5h-10z"/><path fill="#d8cc36" d="M324 441h10v5h-10z"/><path fill="#d8d22a" d="M509 426h5v5h-5zM284 461h5v5h-5zM284 466h5v5h-5z"/><path fill="#d8d230" d="M499 426h10v5h-10zM314 436h5v5h-5zM434 451h5v5h-5zM279 466h5v5h-5z"/><path fill="#d8d236" d="M319 441h5v5h-5z"/><path fill="#d8d82a" d="M229 456h5v5h-5z"/><path fill="#d8d830" d="M374 391h5v5h-5zM229 451h5v5h-5zM229 461h5v5h-5z"/><path fill="#de4e2a" d="M129 436h5v5h-5z"/><path fill="#de542a" d="M134 436h5v5h-5z"/><path fill="#de6630" d="M369 416h5v5h-5z"/><path fill="#de6c30" d="M364 416h5v5h-5z"/><path fill="#de722a" d="M359 421h15v5h-15z"/><path fill="#de7230" d="M369 411h5v5h-5zM359 416h5v5h-5zM374 416h5v5h-5z"/><path fill="#de7830" d="M364 411h5v5h-5zM374 411h5v5h-5zM354 416h5v5h-5zM374 421h5v5h-5z"/><path fill="#de7e2a" d="M354 421h5v5h-5zM359 426h15v5h-15z"/><path fill="#de7e30" d="M359 411h5v5h-5z"/><path fill="#de842a" d="M349 421h5v5h-5zM354 426h5v5h-5z"/><path fill="#de8430" d="M354 411h5v5h-5zM379 411h5v5h-5zM349 416h5v5h-5zM379 421h5v5h-5z"/><path fill="#de8a2a" d="M374 426h5v5h-5z"/><path fill="#de8a30" d="M349 411h5v5h-5zM344 416h5v5h-5zM174 451h5v5h-5z"/><path fill="#de902a" d="M349 426h5v5h-5z"/><path fill="#de9030" d="M404 396h10v5h-10zM404 401h5v5h-5zM364 406h20v5h-20zM344 411h5v5h-5zM179 456h5v5h-5z"/><path fill="#de9630" d="M404 391h15v5h-15zM399 396h5v5h-5zM414 396h5v5h-5zM394 401h10v5h-10zM409 401h5v5h-5zM404 406h5v5h-5zM379 426h5v5h-5zM194 456h5v5h-5z"/><path fill="#de9c2a" d="M414 386h5v5h-5zM349 431h5v5h-5z"/><path fill="#de9c30" d="M409 386h5v5h-5zM399 391h5v5h-5zM419 391h5v5h-5zM394 396h5v5h-5zM419 396h5v5h-5zM389 401h5v5h-5zM414 401h5v5h-5zM409 406h5v5h-5zM339 411h5v5h-5zM184 461h5v5h-5z"/><path fill="#dea22a" d="M419 386h10v5h-10zM424 391h5v5h-5zM344 431h5v5h-5z"/><path fill="#dea230" d="M424 396h5v5h-5zM384 401h5v5h-5zM419 401h5v5h-5zM414 406h5v5h-5zM404 411h10v5h-10zM384 426h5v5h-5z"/><path fill="#dea82a" d="M429 386h5v5h-5zM429 391h5v5h-5z"/><path fill="#dea830" d="M394 391h5v5h-5zM389 396h5v5h-5zM379 401h5v5h-5zM419 406h5v5h-5zM414 411h5v5h-5zM404 416h5v5h-5zM199 461h5v5h-5z"/><path fill="#deae2a" d="M434 391h5v5h-5z"/><path fill="#deae30" d="M369 401h10v5h-10zM334 411h5v5h-5zM409 416h5v5h-5zM389 426h5v5h-5z"/><path fill="#deb42a" d="M439 391h5v5h-5zM439 396h5v5h-5z"/><path fill="#deb430" d="M389 391h5v5h-5zM384 396h5v5h-5zM419 411h5v5h-5zM414 416h5v5h-5zM404 421h5v5h-5zM394 426h5v5h-5zM204 461h5v5h-5z"/><path fill="#deba2a" d="M444 396h10v5h-10zM454 401h5v5h-5zM329 416h5v5h-5z"/><path fill="#deba30" d="M379 396h5v5h-5zM449 401h5v5h-5zM334 406h5v5h-5zM419 416h5v5h-5zM409 421h10v5h-10zM399 426h10v5h-10zM339 436h5v5h-5z"/><path fill="#dec02a" d="M459 406h5v5h-5zM464 411h5v5h-5zM324 421h5v5h-5zM209 461h5v5h-5z"/><path fill="#dec030" d="M329 411h5v5h-5zM464 416h5v5h-5zM419 421h5v5h-5zM409 426h10v5h-10zM439 426h10v5h-10zM334 436h5v5h-5zM209 451h5v5h-5z"/><path fill="#dec62a" d="M474 421h5v5h-5z"/><path fill="#dec630" d="M429 426h10v5h-10zM434 431h10v5h-10z"/><path fill="#decc30" d="M319 431h5v5h-5zM319 436h5v5h-5zM214 451h5v5h-5z"/><path fill="#ded22a" d="M489 426h10v5h-10zM219 461h5v5h-5z"/><path fill="#ded824" d="M514 426h10v5h-10z"/><path fill="#ded82a" d="M219 451h10v5h-10zM224 461h5v5h-5z"/><path fill="#dede1e" d="M524 426h10v5h-10z"/><path fill="#e46030" d="M149 441h5v5h-5z"/><path fill="#e46c30" d="M154 441h5v5h-5z"/><path fill="#e47e30" d="M379 416h5v5h-5z"/><path fill="#e48a30" d="M384 411h5v5h-5zM384 416h5v5h-5z"/><path fill="#e4902a" d="M344 421h5v5h-5z"/><path fill="#e4962a" d="M344 426h5v5h-5z"/><path fill="#e49630" d="M384 406h20v5h-20zM389 411h10v5h-10zM339 416h5v5h-5zM389 416h5v5h-5zM384 421h5v5h-5z"/><path fill="#e49636" d="M179 461h5v5h-5z"/><path fill="#e49c2a" d="M339 421h5v5h-5z"/><path fill="#e49c30" d="M399 411h5v5h-5zM394 416h5v5h-5zM199 456h5v5h-5z"/><path fill="#e4a22a" d="M339 426h5v5h-5z"/><path fill="#e4a230" d="M399 416h5v5h-5zM389 421h5v5h-5z"/><path fill="#e4a82a" d="M334 421h5v5h-5z"/><path fill="#e4a830" d="M334 416h5v5h-5zM394 421h5v5h-5zM204 456h5v5h-5z"/><path fill="#e4ae2a" d="M339 431h5v5h-5z"/><path fill="#e4ae30" d="M399 421h5v5h-5z"/><path fill="#e4b42a" d="M334 431h5v5h-5z"/><path fill="#e4ba2a" d="M329 421h5v5h-5zM329 426h5v5h-5zM209 456h5v5h-5z"/><path fill="#e4c024" d="M454 396h5v5h-5zM459 401h5v5h-5zM464 406h5v5h-5z"/><path fill="#e4c02a" d="M329 431h5v5h-5z"/><path fill="#e4c624" d="M469 411h5v5h-5z"/><path fill="#e4c62a" d="M469 416h5v5h-5zM324 426h5v5h-5z"/><path fill="#e4c630" d="M324 431h5v5h-5zM329 436h5v5h-5z"/><path fill="#e4cc24" d="M474 416h5v5h-5zM479 421h5v5h-5z"/><path fill="#e4cc2a" d="M214 456h5v5h-5zM214 461h5v5h-5z"/><path fill="#e4cc30" d="M324 436h5v5h-5z"/><path fill="#e4d22a" d="M219 456h5v5h-5z"/><path fill="#e4d82a" d="M224 456h5v5h-5z"/><path fill="#ea542a" d="M139 441h5v5h-5z"/><path fill="#ea5a2a" d="M144 441h5v5h-5z"/><path fill="#ea7230" d="M164 446h5v5h-5z"/><path fill="#ea8430" d="M174 456h5v5h-5z"/><path fill="#eaae2a" d="M334 426h5v5h-5z"/><path fill="#eac61e" d="M464 401h5v5h-5z"/><path fill="#eacc1e" d="M469 406h5v5h-5z"/><path fill="#ead81e" d="M484 421h5v5h-5zM499 421h5v5h-5z"/><path fill="#eade18" d="M514 421h5v5h-5z"/><path fill="#eade1e" d="M489 421h10v5h-10zM504 421h10v5h-10z"/><path fill="#f07830" d="M169 451h5v5h-5z"/><path fill="#f0cc1e" d="M474 411h5v5h-5z"/><path fill="#f0d218" d="M474 406h5v5h-5z"/><path fill="#f0d21e" d="M479 416h5v5h-5z"/><path fill="#f0d818" d="M484 416h5v5h-5z"/><path fill="#f66630" d="M159 446h5v5h-5z"/><path fill="#f67830" d="M169 456h5v5h-5z"/><path fill="#f6d80c" d="M479 406h5v5h-5z"/><path fill="#f6d812" d="M479 411h5v5h-5z"/><path fill="#f6de12" d="M489 416h5v5h-5z"/><path fill="#f6e40c" d="M504 416h5v5h-5z"/><path fill="#f6e412" d="M494 416h10v5h-10z"/><path fill="#fc5a30" d="M149 446h5v5h-5z"/><path fill="#fc6030" d="M154 446h5v5h-5z"/><path fill="#fc6c30" d="M164 451h5v5h-5z"/><path fill="#fcde0c" d="M484 411h5v5h-5z"/><path fill="#fce40c" d="M489 411h5v5h-5z"/><path fill="#ff6030" d="M159 451h5v5h-5z"/></g></g>
<g font-family="Liberation Sans" font-size="11" fill="#fff">
<text x="18" y="164" textLength="45" lengthAdjust="spacingAndGlyphs">0.014 mm</text>
<text x="18" y="254" textLength="45" lengthAdjust="spacingAndGlyphs">0.006 mm</text>
<text x="18" y="345" textLength="49.5" lengthAdjust="spacingAndGlyphs">-0.002 mm</text>
<text x="18" y="435" textLength="49.5" lengthAdjust="spacingAndGlyphs">-0.010 mm</text>
<text x="18" y="526" textLength="49.5" lengthAdjust="spacingAndGlyphs">-0.018 mm</text>
<text x="58" y="566" textLength="215" lengthAdjust="spacingAndGlyphs">Dashed Frame Represents the Best Fit Plane</text>
<text x="61" y="594" textLength="305" lengthAdjust="spacingAndGlyphs">(Triangle) Indicates the High Point on the Surface rel. to the BFP</text>
<text x="61" y="608" textLength="308" lengthAdjust="spacingAndGlyphs">(Diamond) Indicates the Low Point on the Surface rel. to the BFP</text>
<text x="58" y="622" textLength="183" lengthAdjust="spacingAndGlyphs">Coordinates Icon Located at X=0, Y=0</text>
<text x="375.5" y="552" textLength="179.5" lengthAdjust="spacingAndGlyphs">Surface &#160;1 Flatness = 0.032 mm (TIR)</text>
<text x="375.5" y="566" textLength="218.5" lengthAdjust="spacingAndGlyphs">Surface &#160;2, Way &#160;1 Flatness = 0.016 mm (TIR)</text>
<text x="375.5" y="580" textLength="218.5" lengthAdjust="spacingAndGlyphs">Surface &#160;2, Way &#160;2 Flatness = 0.023 mm (TIR)</text>
<text x="375.5" y="594" textLength="179.5" lengthAdjust="spacingAndGlyphs">Surface &#160;3 Flatness = 0.030 mm (TIR)</text>
</g>
<rect x="10" y="554" width="42" height="2" fill="#fff"/>
<path d="M48.5,581 L52.5,581 L55.5,583.5 L52.5,586 L48.5,586 Z M50.5,582.5 L50.5,584.5 L52,583.5 Z" fill="none" stroke="#fff" stroke-width="1.5"/>
<path d="M49,594 L54,594 L56,597 L54,599.5 L49,599.5 L47,597 Z M49.5,597 L53.5,597 M51.5,595.5 L51.5,598.5" fill="none" stroke="#fff" stroke-width="1.4"/>
<rect x="47" y="400" width="47" height="15" fill="#fff"/>
<text x="70.5" y="412" font-family="Liberation Sans" font-weight="bold" font-size="12" fill="#000" text-anchor="middle">-0.008</text>
<!-- hand pointer -->
<g>
<path d="M14,401.5 L24,400.5 L27,399.5 L37,400 L40,402 L40,411 L37,414 L29,414 L24,412 L22,410 L21,407 L22,404 L14,404 Z" fill="#fff"/>
<path d="M22,405 L28,405 M21,408 L28,408 M22,411 L28,411 M24,403 L28,402" stroke="#000" stroke-width="0.8"/>
<rect x="41" y="402" width="2" height="11" fill="#7de0d8"/>
</g>
<!-- dashed frames and grid -->
<g fill="none" stroke="#fff" stroke-width="1" stroke-dasharray="3 2.5" opacity="0.75">
 <path d="M220,93 C240,94 262,105 272,115 C281,150 283,210 277,268 C245,310 210,345 178,368 C155,366 128,352 112,338 C104,315 101,290 102,270 C106,230 116,190 129,164 C140,144 152,127 167,118 C185,104 205,95 220,93 Z" opacity="0.9"/>
 <path d="M219,99 C238,100 258,110 267,119 C275,152 277,210 271,265 C240,306 207,340 176,361 C155,359 132,347 117,334 C110,313 107,290 108,271 C112,232 121,193 133,168 C143,148 155,132 169,123 C186,110 205,101 219,99 Z" opacity="0.45"/>
 <path d="M218,110 L262,130 L264,264 L175,354 L122,322 L108,270 L123,195 L173,137 Z" opacity="0.9"/>
 <path d="M393,75 L438,90 L436,157 L444,214 L441,290 L434,345 M394,76 L395,215 L400,260 L394,326"/>
 <path d="M400,140 L436,156 M395,203 L444,212 M401,261 L440,282"/>
 <path d="M460,98 L460,124 M449,165 L502,174 M460,221 L501,241 M460,291 L503,302 M502,112 L503,215 L500,241 L507,362 M458,352 L507,363"/>
 <path d="M133,436 L335,436 L400,399 L423,390"/>
 <path d="M274,397 L335,396 L400,419 L470,440 L485,479"/>
 <path d="M228,413 L282,458 L335,491"/>
 <path d="M190,456 L234,442 L290,460 L384,463 L438,476"/>
 <path d="M244,501 L290,460 L335,436"/>
 <path d="M317,399 L274,435"/>
 <path d="M244,501 L335,503 L438,478"/>
 <path d="M338,498 L384,463 L430,437 L470,413"/>
 <path d="M373,410 L430,437"/>
</g>
<g fill="none" stroke="#fff" stroke-width="1">
 <path d="M176,432 L225,409 L268,394 L312,366 L326,371" opacity="0.85"/>
 <path d="M140,433 L176,430" opacity="0.7"/>
 <path d="M133,437 L133,451" opacity="0.8"/>
 <path d="M133,451 L187,471 L239,503" opacity="0.8" stroke-dasharray="3 2.5"/>
 <path d="M187,461 L187,471" opacity="0.8"/>
 <path d="M239,489 L239,503" opacity="0.8"/>
 <path d="M529,432 L531,439" opacity="0.8"/>
 <path d="M531,439 L489,481" opacity="0.7" stroke-dasharray="3 2.5"/>
 <path d="M439,478 L439,486" opacity="0.7"/>
 <path d="M439,486 L397,512" opacity="0.6" stroke-dasharray="3 2.5"/>
 <path d="M296,376 L296,371 L313,362 L333,369 L335,375 M300,370 L312,365" opacity="0.9"/>
</g>
<circle cx="277" cy="434" r="13" fill="#90f0b0" fill-opacity="0.4" stroke="#d0ffe0" stroke-width="0.8" stroke-opacity="0.5"/>
<!-- markers -->
<g fill="#fff">
 <path d="M469,87 L473,92 L469,97 L465,92 Z"/>
 <path d="M446,160 L452,164 L446,169 Z"/>
 <path d="M401,256 L405,261 L401,266 L397,261 Z"/>
 <path d="M305,372 L314,367 L328,373 L322,374 L314,370 L308,374 Z"/>
 <path d="M129,436 L133,432 L137,436 Z"/>
 <rect x="483" y="477" width="5" height="5"/>
 <path d="M432,341 L436,346 L432,351 L428,346 Z"/>
 <path d="M111,320 L115,325 L111,330 L107,325 Z"/>
 <path d="M268,264 L271,268 L268,272 L265,268 Z"/>
</g>
<!-- coordinate icons -->
<g fill="none" stroke="#fff" stroke-width="1">
 <path d="M191,203.5 L195.5,209 L195.5,233 L188.5,226 L188.5,209 Z M188.5,220 L195.5,220 M174,239 C176,233 180,229 184,227 L195.5,224 M174,239 L180,241 L195.5,233"/>
 <path d="M210,200 L214,204 L215,218 L205,224" stroke-width="2.5"/>
 <path d="M390,310 L393,316 L393,337 L387,334 L387,316 Z M387,334 L400,341 L410,343 L403,333 L393,330"/>
 <path d="M456,328 L459,334 L459,356 L453,353 L453,334 Z M453,353 L466,360 L478,362 L470,352 L459,349"/>
</g>
<g fill="#fff"><circle cx="191" cy="221" r="1.8"/><circle cx="182" cy="233" r="1.8"/><circle cx="390" cy="320" r="1.6"/><circle cx="395" cy="334" r="1.6"/><circle cx="456" cy="340" r="1.6"/><circle cx="460" cy="353" r="1.6"/></g>
</svg>
</div>

<div class="abs" style="left:0;top:28px;width:1px;height:627px;background:#dcdcdc"></div>
<div id="vs" class="abs">
  <div class="sbtn" style="left:1px;top:1px;width:17px;height:16px"></div>
  <div class="tri" style="left:6px;top:7px;border-left:4px solid transparent;border-right:4px solid transparent;border-bottom:4px solid #000"></div>
  <div class="sbtn" style="left:1px;top:284px;width:17px;height:59px"></div>
  <div class="sbtn" style="left:1px;top:609px;width:17px;height:16px"></div>
  <div class="tri" style="left:6px;top:615px;border-left:4px solid transparent;border-right:4px solid transparent;border-top:4px solid #000"></div>
</div>
<div id="hs" class="abs">
  <div class="sbtn" style="left:1px;top:0;width:17px;height:12px"></div>
  <div class="tri" style="left:6px;top:4px;border-top:4px solid transparent;border-bottom:4px solid transparent;border-right:4px solid #000"></div>
  <div class="sbtn" style="left:285px;top:0;width:59px;height:12px"></div>
  <div class="sbtn" style="left:610px;top:0;width:17px;height:12px"></div>
  <div class="tri" style="left:617px;top:4px;border-top:4px solid transparent;border-bottom:4px solid transparent;border-left:4px solid #000"></div>
</div>
</div>


<!-- Plot information dialog -->
<div class="abs" style="left:822px;top:265px;width:271px;height:163px;background:#d4d0c8;border:1px solid #5c5c6c;box-shadow:inset 1px 1px 0 #fff"></div>
<div class="abs" style="left:823px;top:266px;width:269px;height:20px;background:linear-gradient(#9c9cb8 0%,#b8b8cc 45%,#f4f4f8 90%,#fff 100%)"></div>
<div class="abs" style="left:825px;top:270px;font-weight:bold;font-size:12px;color:#101010">Plot Information</div>
<div class="abs" style="left:1075px;top:270px;width:13px;height:13px;background:#eca0a0;border:1px solid #b05050;border-radius:1px"></div>
<svg class="abs" style="left:1075px;top:270px" width="13" height="13"><path d="M3.5,3.5 L9.5,9.5 M9.5,3.5 L3.5,9.5" stroke="#fff" stroke-width="2"/></svg>
<div class="abs" style="left:823px;top:286px;width:269px;height:141px;border-top:1px solid #808080;border-left:1px solid #fff;border-right:1px solid #fff;border-bottom:1px solid #fff;box-shadow:inset 0 -1px 0 #606060, inset -1px 0 0 #a0a0a0"></div>
<div class="abs" style="left:832px;top:300px;font-size:10.3px;line-height:13px;color:#000;white-space:pre">CURSOR ON: Surface  1
X DISTANCE =  250, Y DISTANCE =  500
MEASUREMENT (TARGET READING) =  0.042
DEVIATION FROM BEST FIT PLANE = -0.008
FLAT WITHIN (TIR): 0.032</div>

<!-- Toolbox -->
<div class="abs" style="left:833px;top:436px;width:250px;height:218px;background:#c8c8c8;border:1px solid #fff;box-shadow:inset -1px -1px 0 #808080"></div>
<div class="abs" style="left:645px;top:665px;width:450px;height:1px;background:#e4e4e4"></div>

<div class="grp" style="left:838px;top:440px;width:126px;height:81px"></div>
<div class="grp" style="left:967px;top:440px;width:56px;height:81px"></div>
<div class="grp" style="left:1024px;top:440px;width:53px;height:81px"></div>
<div class="grp" style="left:838px;top:524px;width:239px;height:32px"></div>
<div class="grp" style="left:838px;top:577px;width:239px;height:33px"></div>
<div class="grp" style="left:838px;top:612px;width:191px;height:34px"></div>

<div class="ico" style="left:844px;top:468px;width:32px;height:31px"></div>
<div class="ico" style="left:916px;top:468px;width:31px;height:31px"></div>
<div class="ico" style="left:979px;top:468px;width:31px;height:31px"></div>
<div class="ico" style="left:1034px;top:468px;width:31px;height:31px"></div>

<div class="rb" style="left:880px;top:445px;width:17px;height:36px"></div>
<div class="rb" style="left:880px;top:481px;width:17px;height:36px"></div>
<div class="tri" style="left:884px;top:460px;border-left:4px solid transparent;border-right:4px solid transparent;border-bottom:4px solid #000"></div>
<div class="tri" style="left:884px;top:497px;border-left:4px solid transparent;border-right:4px solid transparent;border-top:4px solid #000"></div>
<div class="abs" style="left:901px;top:461px;width:2px;height:56px;background:#888;border-right:1px solid #fff"></div>

<div class="rb" style="left:907px;top:500px;width:26px;height:20px"></div>
<div class="rb" style="left:934px;top:500px;width:26px;height:20px"></div>
<div class="rb" style="left:972px;top:500px;width:24px;height:20px"></div>
<div class="rb" style="left:996px;top:500px;width:25px;height:20px"></div>
<div class="rb" style="left:1027px;top:500px;width:23px;height:20px"></div>
<div class="rb" style="left:1050px;top:500px;width:24px;height:20px"></div>
<div class="tri" style="left:917px;top:505px;border-top:5px solid transparent;border-bottom:5px solid transparent;border-right:5px solid #000"></div>
<div class="tri" style="left:945px;top:505px;border-top:5px solid transparent;border-bottom:5px solid transparent;border-left:5px solid #000"></div>
<div class="tri" style="left:981px;top:505px;border-top:5px solid transparent;border-bottom:5px solid transparent;border-right:5px solid #000"></div>
<div class="tri" style="left:1007px;top:505px;border-top:5px solid transparent;border-bottom:5px solid transparent;border-left:5px solid #000"></div>
<div class="tri" style="left:1035px;top:505px;border-top:5px solid transparent;border-bottom:5px solid transparent;border-right:5px solid #000"></div>
<div class="tri" style="left:1061px;top:505px;border-top:5px solid transparent;border-bottom:5px solid transparent;border-left:5px solid #000"></div>

<div class="sl" style="left:906px;top:444px;width:51px;height:17px"></div>
<div class="slt" style="left:910px;top:448px;width:43px"></div>
<div class="thm" style="left:913px;top:445px"></div>
<div class="sl" style="left:973px;top:444px;width:45px;height:17px"></div>
<div class="slt" style="left:977px;top:448px;width:37px"></div>
<div class="thm" style="left:993px;top:445px"></div>
<div class="sl" style="left:1028px;top:444px;width:45px;height:17px"></div>
<div class="slt" style="left:1032px;top:448px;width:37px"></div>
<div class="thm" style="left:1037px;top:445px"></div>

<div class="rb" style="left:843px;top:528px;width:57px;height:25px"></div>
<div class="rb" style="left:904px;top:528px;width:57px;height:25px"></div>
<div class="abs" style="left:851px;top:535px;font-size:10px;letter-spacing:0.3px;transform:scaleX(0.92);transform-origin:0 0">DEFAULT</div>
<div class="abs" style="left:851px;top:544px;width:7px;height:1px;background:#000"></div>
<div class="abs" style="left:909px;top:534px;font-size:10px;letter-spacing:0.2px;transform:scaleX(0.9);transform-origin:0 0">PLOT 2 FIT</div>
<div class="abs" style="left:909px;top:544px;width:7px;height:1px;background:#000"></div>
<div class="sl" style="left:968px;top:529px;width:48px;height:8px"></div>
<div class="slt" style="left:972px;top:531px;width:40px"></div>
<div class="thm" style="left:974px;top:529px;height:7px"></div>
<div class="abs" style="left:968px;top:537px;width:48px;height:16px;background:#eeeeee;border-top:1px solid #808080;border-left:1px solid #808080"></div>
<div class="abs" style="left:977px;top:540px;font-size:10px;transform:scaleX(0.93);transform-origin:0 0">SHADE</div>

<svg class="abs" style="left:880px;top:560px" width="160" height="16"><text x="6.5" y="12.8" font-family="Liberation Sans" font-size="10" fill="#000" textLength="143.5" lengthAdjust="spacingAndGlyphs" letter-spacing="0.6">QUICK PLOT CONFIG. TOOLBOX</text></svg>
<div class="abs" style="left:1048px;top:552px;width:24px;height:24px;background:#c8c8c8;border:1.5px solid #202020;border-radius:2px;box-shadow:inset 1px 1px 0 #fff"></div>
<svg class="abs" style="left:1049px;top:552px" width="23" height="23"><path d="M5,17 L11,6" stroke="#000" stroke-width="1.3" fill="none"/><path d="M5,18.5 L19,18.5" stroke="#fff" stroke-width="1" fill="none"/><path d="M14,13 L16,16 L12,16 Z" fill="#e8e8e8"/></svg>

<div class="pb" style="left:844px;top:580px;width:28px;height:29px"></div>
<div class="pb" style="left:894px;top:580px;width:28px;height:29px"></div>
<div class="pb" style="left:944px;top:580px;width:28px;height:29px"></div>
<div class="rb" style="left:994px;top:580px;width:29px;height:29px"></div>
<div class="rb" style="left:1044px;top:580px;width:29px;height:29px"></div>

<div class="rb" style="left:844px;top:616px;width:29px;height:28px"></div>
<div class="rb" style="left:876px;top:616px;width:29px;height:28px"></div>
<div class="rb" style="left:912px;top:616px;width:29px;height:28px"></div>
<div class="pb" style="left:945px;top:616px;width:28px;height:28px"></div>
<div class="rb" style="left:994px;top:616px;width:29px;height:28px"></div>
<div class="rb" style="left:1044px;top:617px;width:27px;height:25px"></div>
<div class="abs" style="left:1051px;top:623px;font-size:10px">...</div>
<svg class="abs" style="left:846px;top:470px" width="28" height="27" viewBox="2 2 28 27"><rect x="5" y="9" width="22.4" height="15.2" fill="#1a9a2a"/><rect x="6.0" y="10.0" width="2.2" height="2.2" fill="#a8f8a8"/><rect x="6.0" y="13.6" width="2.2" height="2.2" fill="#a8f8a8"/><rect x="6.0" y="17.2" width="2.2" height="2.2" fill="#a8f8a8"/><rect x="6.0" y="20.8" width="2.2" height="2.2" fill="#a8f8a8"/><rect x="9.6" y="10.0" width="2.2" height="2.2" fill="#a8f8a8"/><rect x="9.6" y="13.6" width="2.2" height="2.2" fill="#a8f8a8"/><rect x="9.6" y="17.2" width="2.2" height="2.2" fill="#a8f8a8"/><rect x="9.6" y="20.8" width="2.2" height="2.2" fill="#a8f8a8"/><rect x="13.2" y="10.0" width="2.2" height="2.2" fill="#a8f8a8"/><rect x="13.2" y="13.6" width="2.2" height="2.2" fill="#a8f8a8"/><rect x="13.2" y="17.2" width="2.2" height="2.2" fill="#a8f8a8"/><rect x="13.2" y="20.8" width="2.2" height="2.2" fill="#a8f8a8"/><rect x="16.8" y="10.0" width="2.2" height="2.2" fill="#a8f8a8"/><rect x="16.8" y="13.6" width="2.2" height="2.2" fill="#a8f8a8"/><rect x="16.8" y="17.2" width="2.2" height="2.2" fill="#a8f8a8"/><rect x="16.8" y="20.8" width="2.2" height="2.2" fill="#a8f8a8"/><rect x="20.4" y="10.0" width="2.2" height="2.2" fill="#a8f8a8"/><rect x="20.4" y="13.6" width="2.2" height="2.2" fill="#a8f8a8"/><rect x="20.4" y="17.2" width="2.2" height="2.2" fill="#a8f8a8"/><rect x="20.4" y="20.8" width="2.2" height="2.2" fill="#a8f8a8"/><rect x="24.0" y="10.0" width="2.2" height="2.2" fill="#a8f8a8"/><rect x="24.0" y="13.6" width="2.2" height="2.2" fill="#a8f8a8"/><rect x="24.0" y="17.2" width="2.2" height="2.2" fill="#a8f8a8"/><rect x="24.0" y="20.8" width="2.2" height="2.2" fill="#a8f8a8"/><path d="M2,15.5 L30,15.5" stroke="#000" stroke-width="1"/><path d="M17,4 C23,4 23,27 17,27" stroke="#101060" stroke-width="1.2" fill="none"/><path d="M14.5,3 L18.5,4 L15.5,8.5 Z M14.5,28 L18.5,27 L15.5,22.5 Z" fill="#101060"/></svg><svg class="abs" style="left:918px;top:470px" width="28" height="27" viewBox="2 2 28 27"><rect x="9" y="4.7" width="16.0" height="23.6" fill="#1a9a2a"/><rect x="10.0" y="5.7" width="2.4" height="2.4" fill="#a8f8a8"/><rect x="10.0" y="9.5" width="2.4" height="2.4" fill="#a8f8a8"/><rect x="10.0" y="13.3" width="2.4" height="2.4" fill="#a8f8a8"/><rect x="10.0" y="17.1" width="2.4" height="2.4" fill="#a8f8a8"/><rect x="10.0" y="20.9" width="2.4" height="2.4" fill="#a8f8a8"/><rect x="10.0" y="24.7" width="2.4" height="2.4" fill="#a8f8a8"/><rect x="13.8" y="5.7" width="2.4" height="2.4" fill="#a8f8a8"/><rect x="13.8" y="9.5" width="2.4" height="2.4" fill="#a8f8a8"/><rect x="13.8" y="13.3" width="2.4" height="2.4" fill="#a8f8a8"/><rect x="13.8" y="17.1" width="2.4" height="2.4" fill="#a8f8a8"/><rect x="13.8" y="20.9" width="2.4" height="2.4" fill="#a8f8a8"/><rect x="13.8" y="24.7" width="2.4" height="2.4" fill="#a8f8a8"/><rect x="17.6" y="5.7" width="2.4" height="2.4" fill="#a8f8a8"/><rect x="17.6" y="9.5" width="2.4" height="2.4" fill="#a8f8a8"/><rect x="17.6" y="13.3" width="2.4" height="2.4" fill="#a8f8a8"/><rect x="17.6" y="17.1" width="2.4" height="2.4" fill="#a8f8a8"/><rect x="17.6" y="20.9" width="2.4" height="2.4" fill="#a8f8a8"/><rect x="17.6" y="24.7" width="2.4" height="2.4" fill="#a8f8a8"/><rect x="21.4" y="5.7" width="2.4" height="2.4" fill="#a8f8a8"/><rect x="21.4" y="9.5" width="2.4" height="2.4" fill="#a8f8a8"/><rect x="21.4" y="13.3" width="2.4" height="2.4" fill="#a8f8a8"/><rect x="21.4" y="17.1" width="2.4" height="2.4" fill="#a8f8a8"/><rect x="21.4" y="20.9" width="2.4" height="2.4" fill="#a8f8a8"/><rect x="21.4" y="24.7" width="2.4" height="2.4" fill="#a8f8a8"/><path d="M15.5,2 L15.5,29" stroke="#000" stroke-width="1"/><path d="M7,12 C0,16 10,20 16,20 C22,20 32,16 25,12" stroke="#101060" stroke-width="1.3" fill="none"/><path d="M5,11 L11,11 L9,15 Z M21,11 L27,11 L23,15 Z" fill="#101060"/></svg><svg class="abs" style="left:981px;top:470px" width="27" height="27" viewBox="2 2 27 27">
<rect x="2" y="20.5" width="27" height="8" fill="#e4dcf0"/>
<path d="M2,20.5 L6,15 L10,20.5 L16,8 L24,13 L29,18 L29,20.5 Z" fill="#b8f0c0" stroke="#209040" stroke-width="0.8"/>
<path d="M2,20.5 L29,20.5" stroke="#888" stroke-width="1"/>
<circle cx="18.5" cy="11.5" r="8" fill="#a0ecd0" stroke="#000" stroke-width="1.3"/>
<path d="M15,7 L15,16 M19,7 L19,16 M21,8 L21,16" stroke="#208040" stroke-width="0.8"/>
<path d="M6,26 L12,19.5" stroke="#000" stroke-width="2.6"/></svg><svg class="abs" style="left:1036px;top:470px" width="27" height="27" viewBox="2 2 27 27">
<rect x="4" y="12" width="24" height="3" fill="#d0d0d8"/><rect x="4" y="23" width="24" height="2" fill="#d8d8e0"/>
<text x="15" y="10" font-family="Liberation Mono" font-weight="bold" font-size="6.5" fill="#101040" text-anchor="middle">ZOOM</text>
<text x="16" y="22.5" font-family="Liberation Mono" font-weight="bold" font-size="10" fill="#101040" text-anchor="middle" textLength="24" lengthAdjust="spacingAndGlyphs">ZOOM</text></svg><svg class="abs" style="left:846px;top:582px" width="25" height="26">
<g fill="#30c030"><circle cx="8" cy="8" r="4"/><circle cx="14" cy="7" r="4"/><circle cx="19" cy="9" r="3.5"/><circle cx="7" cy="14" r="4"/><circle cx="13" cy="14" r="4.5"/><circle cx="19" cy="15" r="4"/><circle cx="9" cy="19" r="3.5"/><circle cx="16" cy="19" r="3.5"/></g>
<g fill="#70e070" opacity="0.8"><circle cx="11" cy="11" r="1"/><circle cx="15" cy="11" r="1"/><circle cx="11" cy="16" r="1"/><circle cx="16" cy="16" r="1"/></g></svg>
<svg class="abs" style="left:896px;top:582px" width="25" height="26">
<rect x="6" y="7" width="6" height="5" fill="#000"/><rect x="13" y="6" width="7" height="6" fill="#000"/><path d="M20,6 L23,9 L20,12 Z" fill="#000"/>
<rect x="6" y="13" width="6" height="6" fill="#000"/><path d="M6,19 L9,22 L12,19Z" fill="#000"/><rect x="12" y="12" width="10" height="10" fill="#307040" stroke="#000" stroke-width="1"/>
<path d="M8,9h2M15,8l3,2M8,15l1,2l1,-2" stroke="#fff" stroke-width="0.8"/></svg>
<svg class="abs" style="left:946px;top:582px" width="25" height="26">
<rect x="5.5" y="6.5" width="15" height="15" fill="#f8f8e0" stroke="#808040" stroke-width="1"/><path d="M10.5,6.5v15M15.5,6.5v15M5.5,11.5h15M5.5,16.5h15" stroke="#808040" stroke-width="1"/>
<path d="M10.5,8 L14,11.5 L10.5,15 L7,11.5Z" fill="#000"/><rect x="13" y="15" width="5" height="5" fill="#000"/></svg>
<svg class="abs" style="left:996px;top:582px" width="25" height="26">
<rect x="5" y="6" width="16" height="16" fill="#a8a8a8"/><path d="M5,14 L13,6 M5,22 L21,6 M13,22 L21,14 M12,16 L12,22 M10,18 L12,15 L14,18" stroke="#e8e8e8" stroke-width="1"/></svg>
<svg class="abs" style="left:1046px;top:582px" width="25" height="26">
<rect x="5" y="6" width="16" height="16" fill="#fff"/><path d="M5,6 L16,6 L5,17Z" fill="#189828"/><path d="M6,7 L9,10" stroke="#000" stroke-width="1.3"/>
<text x="8" y="18" font-family="Liberation Sans" font-weight="bold" font-size="7.5" fill="#000">·012</text></svg>
<svg class="abs" style="left:996px;top:618px" width="25" height="24">
<rect x="5" y="5" width="8" height="7" fill="#000"/><rect x="11" y="5" width="2" height="7" fill="#707070"/><rect x="11.5" y="13.5" width="8" height="7" fill="#fff" stroke="#505050" stroke-width="1"/>
<path d="M20,12 L20,8 L15,8 M17,6 L15,8 L17,10" stroke="#a01010" stroke-width="1.2" fill="none"/><path d="M5,13 L5,17 L9,17 M7,15 L9,17 L7,19" stroke="#a01010" stroke-width="1.2" fill="none"/></svg>
<svg class="abs" style="left:846px;top:618px" width="25" height="24"><rect x="4" y="4" width="2" height="2" fill="#0b3c0d"/><rect x="6" y="4" width="2" height="2" fill="#116617"/><rect x="8" y="4" width="2" height="2" fill="#146e19"/><rect x="10" y="4" width="2" height="2" fill="#0c5815"/><rect x="12" y="4" width="2" height="2" fill="#0a5114"/><rect x="14" y="4" width="2" height="2" fill="#08370c"/><rect x="16" y="4" width="2" height="2" fill="#07320c"/><rect x="18" y="4" width="2" height="2" fill="#106317"/><rect x="20" y="4" width="2" height="2" fill="#0c420e"/><rect x="4" y="6" width="2" height="2" fill="#0b3c0d"/><rect x="6" y="6" width="2" height="2" fill="#116617"/><rect x="8" y="6" width="2" height="2" fill="#146e19"/><rect x="10" y="6" width="2" height="2" fill="#0c5815"/><rect x="12" y="6" width="2" height="2" fill="#0a5114"/><rect x="14" y="6" width="2" height="2" fill="#106417"/><rect x="16" y="6" width="2" height="2" fill="#07320c"/><rect x="18" y="6" width="2" height="2" fill="#106317"/><rect x="20" y="6" width="2" height="2" fill="#17791a"/><rect x="4" y="8" width="2" height="2" fill="#146e19"/><rect x="6" y="8" width="2" height="2" fill="#116617"/><rect x="8" y="8" width="2" height="2" fill="#146e19"/><rect x="10" y="8" width="2" height="2" fill="#06300b"/><rect x="12" y="8" width="2" height="2" fill="#0a5114"/><rect x="14" y="8" width="2" height="2" fill="#106417"/><rect x="16" y="8" width="2" height="2" fill="#07320c"/><rect x="18" y="8" width="2" height="2" fill="#08360c"/><rect x="20" y="8" width="2" height="2" fill="#17791a"/><rect x="4" y="10" width="2" height="2" fill="#146e19"/><rect x="6" y="10" width="2" height="2" fill="#116617"/><rect x="8" y="10" width="2" height="2" fill="#146e19"/><rect x="10" y="10" width="2" height="2" fill="#0c5815"/><rect x="12" y="10" width="2" height="2" fill="#0a5114"/><rect x="14" y="10" width="2" height="2" fill="#106417"/><rect x="16" y="10" width="2" height="2" fill="#0e5c16"/><rect x="18" y="10" width="2" height="2" fill="#106317"/><rect x="20" y="10" width="2" height="2" fill="#17791a"/><rect x="4" y="12" width="2" height="2" fill="#146e19"/><rect x="6" y="12" width="2" height="2" fill="#09380c"/><rect x="8" y="12" width="2" height="2" fill="#0b3c0d"/><rect x="10" y="12" width="2" height="2" fill="#06300b"/><rect x="12" y="12" width="2" height="2" fill="#0a5114"/><rect x="14" y="12" width="2" height="2" fill="#106417"/><rect x="16" y="12" width="2" height="2" fill="#0e5c16"/><rect x="18" y="12" width="2" height="2" fill="#08360c"/><rect x="20" y="12" width="2" height="2" fill="#17791a"/><rect x="4" y="14" width="2" height="2" fill="#146e19"/><rect x="6" y="14" width="2" height="2" fill="#116617"/><rect x="8" y="14" width="2" height="2" fill="#146e19"/><rect x="10" y="14" width="2" height="2" fill="#0c5815"/><rect x="12" y="14" width="2" height="2" fill="#0a5114"/><rect x="14" y="14" width="2" height="2" fill="#106417"/><rect x="16" y="14" width="2" height="2" fill="#0e5c16"/><rect x="18" y="14" width="2" height="2" fill="#106317"/><rect x="20" y="14" width="2" height="2" fill="#17791a"/><rect x="4" y="16" width="2" height="2" fill="#146e19"/><rect x="6" y="16" width="2" height="2" fill="#09380c"/><rect x="8" y="16" width="2" height="2" fill="#146e19"/><rect x="10" y="16" width="2" height="2" fill="#0c5815"/><rect x="12" y="16" width="2" height="2" fill="#0a5114"/><rect x="14" y="16" width="2" height="2" fill="#106417"/><rect x="16" y="16" width="2" height="2" fill="#0e5c16"/><rect x="18" y="16" width="2" height="2" fill="#08360c"/><rect x="20" y="16" width="2" height="2" fill="#17791a"/><rect x="4" y="18" width="2" height="2" fill="#146e19"/><rect x="6" y="18" width="2" height="2" fill="#09380c"/><rect x="8" y="18" width="2" height="2" fill="#0b3c0d"/><rect x="10" y="18" width="2" height="2" fill="#0c5815"/><rect x="12" y="18" width="2" height="2" fill="#0a5114"/><rect x="14" y="18" width="2" height="2" fill="#08370c"/><rect x="16" y="18" width="2" height="2" fill="#0e5c16"/><rect x="18" y="18" width="2" height="2" fill="#106317"/><rect x="20" y="18" width="2" height="2" fill="#0c420e"/><rect x="4" y="20" width="2" height="2" fill="#0b3c0d"/><rect x="6" y="20" width="2" height="2" fill="#116617"/><rect x="8" y="20" width="2" height="2" fill="#146e19"/><rect x="10" y="20" width="2" height="2" fill="#06300b"/><rect x="12" y="20" width="2" height="2" fill="#0a5114"/><rect x="14" y="20" width="2" height="2" fill="#08370c"/><rect x="16" y="20" width="2" height="2" fill="#0e5c16"/><rect x="18" y="20" width="2" height="2" fill="#08360c"/><rect x="20" y="20" width="2" height="2" fill="#17791a"/><rect x="14" y="5" width="1" height="1" fill="#90ff90"/><rect x="17" y="5" width="1" height="1" fill="#90ff90"/><rect x="5" y="8" width="1" height="1" fill="#90ff90"/><rect x="8" y="8" width="1" height="1" fill="#90ff90"/><rect x="11" y="8" width="1" height="1" fill="#90ff90"/><rect x="17" y="8" width="1" height="1" fill="#90ff90"/><rect x="20" y="8" width="1" height="1" fill="#90ff90"/><rect x="8" y="11" width="1" height="1" fill="#90ff90"/><rect x="17" y="11" width="1" height="1" fill="#90ff90"/><rect x="20" y="11" width="1" height="1" fill="#90ff90"/><rect x="8" y="17" width="1" height="1" fill="#90ff90"/><rect x="14" y="17" width="1" height="1" fill="#90ff90"/><rect x="17" y="17" width="1" height="1" fill="#90ff90"/><rect x="11" y="20" width="1" height="1" fill="#90ff90"/><rect x="14" y="20" width="1" height="1" fill="#90ff90"/><rect x="20" y="20" width="1" height="1" fill="#90ff90"/></svg><svg class="abs" style="left:878px;top:618px" width="25" height="24"><rect x="4" y="4" width="2" height="2" fill="#145a3c"/><rect x="6" y="4" width="2" height="2" fill="#17713c"/><rect x="8" y="4" width="2" height="2" fill="#0e4b21"/><rect x="10" y="4" width="2" height="2" fill="#61a734"/><rect x="12" y="4" width="2" height="2" fill="#d7a723"/><rect x="14" y="4" width="2" height="2" fill="#9a371b"/><rect x="16" y="4" width="2" height="2" fill="#146534"/><rect x="18" y="4" width="2" height="2" fill="#248063"/><rect x="20" y="4" width="2" height="2" fill="#349c92"/><rect x="4" y="6" width="2" height="2" fill="#0b3121"/><rect x="6" y="6" width="2" height="2" fill="#0c3e21"/><rect x="8" y="6" width="2" height="2" fill="#1b893c"/><rect x="10" y="6" width="2" height="2" fill="#61a734"/><rect x="12" y="6" width="2" height="2" fill="#765b13"/><rect x="14" y="6" width="2" height="2" fill="#9a371b"/><rect x="16" y="6" width="2" height="2" fill="#146534"/><rect x="18" y="6" width="2" height="2" fill="#134636"/><rect x="20" y="6" width="2" height="2" fill="#349c92"/><rect x="4" y="8" width="2" height="2" fill="#0b3121"/><rect x="6" y="8" width="2" height="2" fill="#17713c"/><rect x="8" y="8" width="2" height="2" fill="#1b893c"/><rect x="10" y="8" width="2" height="2" fill="#355b1c"/><rect x="12" y="8" width="2" height="2" fill="#d7a723"/><rect x="14" y="8" width="2" height="2" fill="#9a371b"/><rect x="16" y="8" width="2" height="2" fill="#0b371c"/><rect x="18" y="8" width="2" height="2" fill="#248063"/><rect x="20" y="8" width="2" height="2" fill="#349c92"/><rect x="4" y="10" width="2" height="2" fill="#0b3121"/><rect x="6" y="10" width="2" height="2" fill="#0c3e21"/><rect x="8" y="10" width="2" height="2" fill="#1b893c"/><rect x="10" y="10" width="2" height="2" fill="#355b1c"/><rect x="12" y="10" width="2" height="2" fill="#765b13"/><rect x="14" y="10" width="2" height="2" fill="#9a371b"/><rect x="16" y="10" width="2" height="2" fill="#146534"/><rect x="18" y="10" width="2" height="2" fill="#134636"/><rect x="20" y="10" width="2" height="2" fill="#1c5550"/><rect x="4" y="12" width="2" height="2" fill="#0b3121"/><rect x="6" y="12" width="2" height="2" fill="#17713c"/><rect x="8" y="12" width="2" height="2" fill="#1b893c"/><rect x="10" y="12" width="2" height="2" fill="#61a734"/><rect x="12" y="12" width="2" height="2" fill="#765b13"/><rect x="14" y="12" width="2" height="2" fill="#541e0e"/><rect x="16" y="12" width="2" height="2" fill="#146534"/><rect x="18" y="12" width="2" height="2" fill="#248063"/><rect x="20" y="12" width="2" height="2" fill="#349c92"/><rect x="4" y="14" width="2" height="2" fill="#0b3121"/><rect x="6" y="14" width="2" height="2" fill="#0c3e21"/><rect x="8" y="14" width="2" height="2" fill="#1b893c"/><rect x="10" y="14" width="2" height="2" fill="#355b1c"/><rect x="12" y="14" width="2" height="2" fill="#d7a723"/><rect x="14" y="14" width="2" height="2" fill="#9a371b"/><rect x="16" y="14" width="2" height="2" fill="#0b371c"/><rect x="18" y="14" width="2" height="2" fill="#134636"/><rect x="20" y="14" width="2" height="2" fill="#349c92"/><rect x="4" y="16" width="2" height="2" fill="#145a3c"/><rect x="6" y="16" width="2" height="2" fill="#17713c"/><rect x="8" y="16" width="2" height="2" fill="#0e4b21"/><rect x="10" y="16" width="2" height="2" fill="#355b1c"/><rect x="12" y="16" width="2" height="2" fill="#765b13"/><rect x="14" y="16" width="2" height="2" fill="#9a371b"/><rect x="16" y="16" width="2" height="2" fill="#0b371c"/><rect x="18" y="16" width="2" height="2" fill="#134636"/><rect x="20" y="16" width="2" height="2" fill="#349c92"/><rect x="4" y="18" width="2" height="2" fill="#145a3c"/><rect x="6" y="18" width="2" height="2" fill="#17713c"/><rect x="8" y="18" width="2" height="2" fill="#1b893c"/><rect x="10" y="18" width="2" height="2" fill="#355b1c"/><rect x="12" y="18" width="2" height="2" fill="#765b13"/><rect x="14" y="18" width="2" height="2" fill="#9a371b"/><rect x="16" y="18" width="2" height="2" fill="#146534"/><rect x="18" y="18" width="2" height="2" fill="#248063"/><rect x="20" y="18" width="2" height="2" fill="#349c92"/><rect x="4" y="20" width="2" height="2" fill="#145a3c"/><rect x="6" y="20" width="2" height="2" fill="#17713c"/><rect x="8" y="20" width="2" height="2" fill="#0e4b21"/><rect x="10" y="20" width="2" height="2" fill="#61a734"/><rect x="12" y="20" width="2" height="2" fill="#d7a723"/><rect x="14" y="20" width="2" height="2" fill="#9a371b"/><rect x="16" y="20" width="2" height="2" fill="#146534"/><rect x="18" y="20" width="2" height="2" fill="#134636"/><rect x="20" y="20" width="2" height="2" fill="#1c5550"/><rect x="5" y="5" width="1" height="1" fill="#c0fff0"/><rect x="8" y="5" width="1" height="1" fill="#c0fff0"/><rect x="14" y="5" width="1" height="1" fill="#c0fff0"/><rect x="20" y="5" width="1" height="1" fill="#c0fff0"/><rect x="5" y="11" width="1" height="1" fill="#c0fff0"/><rect x="11" y="11" width="1" height="1" fill="#c0fff0"/><rect x="14" y="11" width="1" height="1" fill="#c0fff0"/><rect x="5" y="14" width="1" height="1" fill="#c0fff0"/><rect x="14" y="14" width="1" height="1" fill="#c0fff0"/><rect x="17" y="14" width="1" height="1" fill="#c0fff0"/><rect x="5" y="17" width="1" height="1" fill="#c0fff0"/><rect x="11" y="17" width="1" height="1" fill="#c0fff0"/><rect x="14" y="17" width="1" height="1" fill="#c0fff0"/><rect x="5" y="20" width="1" height="1" fill="#c0fff0"/><rect x="20" y="20" width="1" height="1" fill="#c0fff0"/></svg><svg class="abs" style="left:914px;top:618px" width="25" height="24"><rect x="4" y="4" width="2" height="2" fill="#1e911e"/><rect x="6" y="4" width="2" height="2" fill="#219b21"/><rect x="8" y="4" width="2" height="2" fill="#145a14"/><rect x="10" y="4" width="2" height="2" fill="#166016"/><rect x="12" y="4" width="2" height="2" fill="#186518"/><rect x="14" y="4" width="2" height="2" fill="#2fc32f"/><rect x="16" y="4" width="2" height="2" fill="#33cd33"/><rect x="18" y="4" width="2" height="2" fill="#36d736"/><rect x="20" y="4" width="2" height="2" fill="#3ae13a"/><rect x="4" y="6" width="2" height="2" fill="#0e490e"/><rect x="6" y="6" width="2" height="2" fill="#0f4f0f"/><rect x="8" y="6" width="2" height="2" fill="#125412"/><rect x="10" y="6" width="2" height="2" fill="#135a13"/><rect x="12" y="6" width="2" height="2" fill="#165f16"/><rect x="14" y="6" width="2" height="2" fill="#2bb82b"/><rect x="16" y="6" width="2" height="2" fill="#2fc22f"/><rect x="18" y="6" width="2" height="2" fill="#1b701b"/><rect x="20" y="6" width="2" height="2" fill="#36d636"/><rect x="4" y="8" width="2" height="2" fill="#0c430c"/><rect x="6" y="8" width="2" height="2" fill="#0e490e"/><rect x="8" y="8" width="2" height="2" fill="#1d8f1d"/><rect x="10" y="8" width="2" height="2" fill="#219921"/><rect x="12" y="8" width="2" height="2" fill="#24a324"/><rect x="14" y="8" width="2" height="2" fill="#28ad28"/><rect x="16" y="8" width="2" height="2" fill="#176417"/><rect x="18" y="8" width="2" height="2" fill="#196a19"/><rect x="20" y="8" width="2" height="2" fill="#1b6f1b"/><rect x="4" y="10" width="2" height="2" fill="#127112"/><rect x="6" y="10" width="2" height="2" fill="#167b16"/><rect x="8" y="10" width="2" height="2" fill="#198519"/><rect x="10" y="10" width="2" height="2" fill="#0f4e0f"/><rect x="12" y="10" width="2" height="2" fill="#115411"/><rect x="14" y="10" width="2" height="2" fill="#24a324"/><rect x="16" y="10" width="2" height="2" fill="#27ad27"/><rect x="18" y="10" width="2" height="2" fill="#2bb72b"/><rect x="20" y="10" width="2" height="2" fill="#2ec12e"/><rect x="4" y="12" width="2" height="2" fill="#0f660f"/><rect x="6" y="12" width="2" height="2" fill="#127012"/><rect x="8" y="12" width="2" height="2" fill="#167a16"/><rect x="10" y="12" width="2" height="2" fill="#198419"/><rect x="12" y="12" width="2" height="2" fill="#1d8e1d"/><rect x="14" y="12" width="2" height="2" fill="#209820"/><rect x="16" y="12" width="2" height="2" fill="#24a224"/><rect x="18" y="12" width="2" height="2" fill="#27ac27"/><rect x="20" y="12" width="2" height="2" fill="#2bb62b"/><rect x="4" y="14" width="2" height="2" fill="#063206"/><rect x="6" y="14" width="2" height="2" fill="#0e650e"/><rect x="8" y="14" width="2" height="2" fill="#126f12"/><rect x="10" y="14" width="2" height="2" fill="#0b420b"/><rect x="12" y="14" width="2" height="2" fill="#198319"/><rect x="14" y="14" width="2" height="2" fill="#1c8d1c"/><rect x="16" y="14" width="2" height="2" fill="#209720"/><rect x="18" y="14" width="2" height="2" fill="#23a123"/><rect x="20" y="14" width="2" height="2" fill="#27ab27"/><rect x="4" y="16" width="2" height="2" fill="#075107"/><rect x="6" y="16" width="2" height="2" fill="#0b5b0b"/><rect x="8" y="16" width="2" height="2" fill="#073707"/><rect x="10" y="16" width="2" height="2" fill="#126f12"/><rect x="12" y="16" width="2" height="2" fill="#0b420b"/><rect x="14" y="16" width="2" height="2" fill="#198319"/><rect x="16" y="16" width="2" height="2" fill="#1c8d1c"/><rect x="18" y="16" width="2" height="2" fill="#209720"/><rect x="20" y="16" width="2" height="2" fill="#23a123"/><rect x="4" y="18" width="2" height="2" fill="#034603"/><rect x="6" y="18" width="2" height="2" fill="#075007"/><rect x="8" y="18" width="2" height="2" fill="#0a5a0a"/><rect x="10" y="18" width="2" height="2" fill="#073707"/><rect x="12" y="18" width="2" height="2" fill="#116e11"/><rect x="14" y="18" width="2" height="2" fill="#0b420b"/><rect x="16" y="18" width="2" height="2" fill="#0d470d"/><rect x="18" y="18" width="2" height="2" fill="#1c8c1c"/><rect x="20" y="18" width="2" height="2" fill="#115211"/><rect x="4" y="20" width="2" height="2" fill="#002100"/><rect x="6" y="20" width="2" height="2" fill="#012601"/><rect x="8" y="20" width="2" height="2" fill="#075007"/><rect x="10" y="20" width="2" height="2" fill="#053105"/><rect x="12" y="20" width="2" height="2" fill="#073707"/><rect x="14" y="20" width="2" height="2" fill="#116e11"/><rect x="16" y="20" width="2" height="2" fill="#0b420b"/><rect x="18" y="20" width="2" height="2" fill="#188218"/><rect x="20" y="20" width="2" height="2" fill="#1c8c1c"/><rect x="17" y="5" width="1" height="1" fill="#d0ffd0"/><rect x="11" y="8" width="1" height="1" fill="#d0ffd0"/><rect x="20" y="8" width="1" height="1" fill="#d0ffd0"/><rect x="5" y="11" width="1" height="1" fill="#d0ffd0"/><rect x="14" y="11" width="1" height="1" fill="#d0ffd0"/><rect x="17" y="11" width="1" height="1" fill="#d0ffd0"/><rect x="20" y="11" width="1" height="1" fill="#d0ffd0"/><rect x="11" y="14" width="1" height="1" fill="#d0ffd0"/><rect x="14" y="14" width="1" height="1" fill="#d0ffd0"/><rect x="17" y="14" width="1" height="1" fill="#d0ffd0"/><rect x="20" y="14" width="1" height="1" fill="#d0ffd0"/><rect x="5" y="17" width="1" height="1" fill="#d0ffd0"/><rect x="8" y="17" width="1" height="1" fill="#d0ffd0"/><rect x="17" y="17" width="1" height="1" fill="#d0ffd0"/><rect x="5" y="20" width="1" height="1" fill="#d0ffd0"/><rect x="20" y="20" width="1" height="1" fill="#d0ffd0"/></svg><svg class="abs" style="left:947px;top:618px" width="25" height="24"><rect x="4" y="4" width="2" height="2" fill="#1e8ce6"/><rect x="6" y="4" width="2" height="2" fill="#21a3d6"/><rect x="8" y="4" width="2" height="2" fill="#14666c"/><rect x="10" y="4" width="2" height="2" fill="#1e7059"/><rect x="12" y="4" width="2" height="2" fill="#5ed565"/><rect x="14" y="4" width="2" height="2" fill="#8dd836"/><rect x="16" y="4" width="2" height="2" fill="#cdcc24"/><rect x="18" y="4" width="2" height="2" fill="#e3981b"/><rect x="20" y="4" width="2" height="2" fill="#de4d16"/><rect x="4" y="6" width="2" height="2" fill="#104d7e"/><rect x="6" y="6" width="2" height="2" fill="#125975"/><rect x="8" y="6" width="2" height="2" fill="#14666c"/><rect x="10" y="6" width="2" height="2" fill="#38cca2"/><rect x="12" y="6" width="2" height="2" fill="#337537"/><rect x="14" y="6" width="2" height="2" fill="#4d761d"/><rect x="16" y="6" width="2" height="2" fill="#cdcc24"/><rect x="18" y="6" width="2" height="2" fill="#e3981b"/><rect x="20" y="6" width="2" height="2" fill="#7a2a0c"/><rect x="4" y="8" width="2" height="2" fill="#1e8ce6"/><rect x="6" y="8" width="2" height="2" fill="#21a3d6"/><rect x="8" y="8" width="2" height="2" fill="#25bbc6"/><rect x="10" y="8" width="2" height="2" fill="#38cca2"/><rect x="12" y="8" width="2" height="2" fill="#337537"/><rect x="14" y="8" width="2" height="2" fill="#4d761d"/><rect x="16" y="8" width="2" height="2" fill="#707013"/><rect x="18" y="8" width="2" height="2" fill="#e3981b"/><rect x="20" y="8" width="2" height="2" fill="#de4d16"/><rect x="4" y="10" width="2" height="2" fill="#104d7e"/><rect x="6" y="10" width="2" height="2" fill="#21a3d6"/><rect x="8" y="10" width="2" height="2" fill="#14666c"/><rect x="10" y="10" width="2" height="2" fill="#38cca2"/><rect x="12" y="10" width="2" height="2" fill="#337537"/><rect x="14" y="10" width="2" height="2" fill="#8dd836"/><rect x="16" y="10" width="2" height="2" fill="#cdcc24"/><rect x="18" y="10" width="2" height="2" fill="#e3981b"/><rect x="20" y="10" width="2" height="2" fill="#de4d16"/><rect x="4" y="12" width="2" height="2" fill="#1e8ce6"/><rect x="6" y="12" width="2" height="2" fill="#21a3d6"/><rect x="8" y="12" width="2" height="2" fill="#25bbc6"/><rect x="10" y="12" width="2" height="2" fill="#38cca2"/><rect x="12" y="12" width="2" height="2" fill="#5ed565"/><rect x="14" y="12" width="2" height="2" fill="#8dd836"/><rect x="16" y="12" width="2" height="2" fill="#cdcc24"/><rect x="18" y="12" width="2" height="2" fill="#e3981b"/><rect x="20" y="12" width="2" height="2" fill="#de4d16"/><rect x="4" y="14" width="2" height="2" fill="#1e8ce6"/><rect x="6" y="14" width="2" height="2" fill="#125975"/><rect x="8" y="14" width="2" height="2" fill="#14666c"/><rect x="10" y="14" width="2" height="2" fill="#38cca2"/><rect x="12" y="14" width="2" height="2" fill="#5ed565"/><rect x="14" y="14" width="2" height="2" fill="#8dd836"/><rect x="16" y="14" width="2" height="2" fill="#cdcc24"/><rect x="18" y="14" width="2" height="2" fill="#7c530e"/><rect x="20" y="14" width="2" height="2" fill="#7a2a0c"/><rect x="4" y="16" width="2" height="2" fill="#104d7e"/><rect x="6" y="16" width="2" height="2" fill="#125975"/><rect x="8" y="16" width="2" height="2" fill="#25bbc6"/><rect x="10" y="16" width="2" height="2" fill="#38cca2"/><rect x="12" y="16" width="2" height="2" fill="#5ed565"/><rect x="14" y="16" width="2" height="2" fill="#4d761d"/><rect x="16" y="16" width="2" height="2" fill="#cdcc24"/><rect x="18" y="16" width="2" height="2" fill="#7c530e"/><rect x="20" y="16" width="2" height="2" fill="#de4d16"/><rect x="4" y="18" width="2" height="2" fill="#1e8ce6"/><rect x="6" y="18" width="2" height="2" fill="#125975"/><rect x="8" y="18" width="2" height="2" fill="#14666c"/><rect x="10" y="18" width="2" height="2" fill="#38cca2"/><rect x="12" y="18" width="2" height="2" fill="#337537"/><rect x="14" y="18" width="2" height="2" fill="#8dd836"/><rect x="16" y="18" width="2" height="2" fill="#cdcc24"/><rect x="18" y="18" width="2" height="2" fill="#e3981b"/><rect x="20" y="18" width="2" height="2" fill="#7a2a0c"/><rect x="4" y="20" width="2" height="2" fill="#104d7e"/><rect x="6" y="20" width="2" height="2" fill="#21a3d6"/><rect x="8" y="20" width="2" height="2" fill="#25bbc6"/><rect x="10" y="20" width="2" height="2" fill="#1e7059"/><rect x="12" y="20" width="2" height="2" fill="#5ed565"/><rect x="14" y="20" width="2" height="2" fill="#8dd836"/><rect x="16" y="20" width="2" height="2" fill="#cdcc24"/><rect x="18" y="20" width="2" height="2" fill="#e3981b"/><rect x="20" y="20" width="2" height="2" fill="#7a2a0c"/><rect x="5" y="5" width="1" height="1" fill="#ffffff"/><rect x="11" y="5" width="1" height="1" fill="#ffffff"/><rect x="20" y="5" width="1" height="1" fill="#ffffff"/><rect x="17" y="8" width="1" height="1" fill="#ffffff"/><rect x="11" y="11" width="1" height="1" fill="#ffffff"/><rect x="8" y="14" width="1" height="1" fill="#ffffff"/><rect x="8" y="17" width="1" height="1" fill="#ffffff"/><rect x="17" y="17" width="1" height="1" fill="#ffffff"/><rect x="8" y="20" width="1" height="1" fill="#ffffff"/><rect x="14" y="20" width="1" height="1" fill="#ffffff"/></svg>
</body></html>
